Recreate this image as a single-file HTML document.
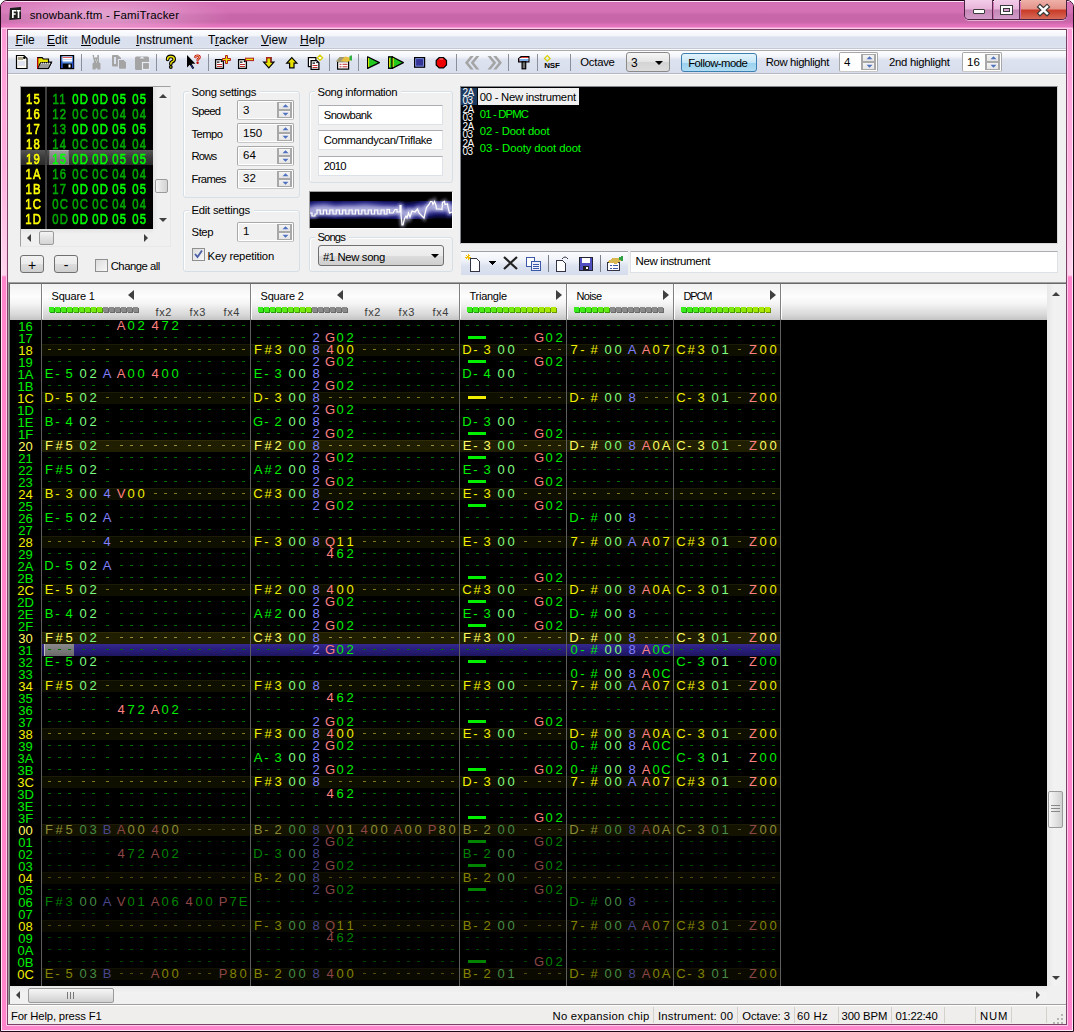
<!DOCTYPE html><html><head><meta charset="utf-8"><title>FamiTracker</title><style>
*{margin:0;padding:0;box-sizing:border-box}
html,body{width:1074px;height:1032px;overflow:hidden;background:#fff}
body{position:relative;font-family:"Liberation Sans",sans-serif;font-size:12px;color:#000}
.a{position:absolute}
.t{position:absolute;white-space:nowrap}
u{text-decoration:underline;text-underline-offset:1px}
.pc{position:absolute;width:10px;height:12px;text-align:center;font-size:13px;line-height:12px}
.rn{position:absolute;left:10px;width:31px;height:12px;font-size:13px;line-height:12px;text-align:center}
.fl{font-size:14.5px;line-height:16px;-webkit-text-stroke:.6px currentColor;letter-spacing:1.5px;padding-left:1.5px;transform:scaleX(.78)}
</style></head><body><div class="a" style="left:0;top:0;width:1074px;height:1032px;background:#ff88cc;border:1px solid #200818;border-radius:7px 7px 0 0"></div><div class="a" style="left:1px;top:1px;width:1072px;height:28px;border-radius:6px 6px 0 0;background:linear-gradient(to bottom,#ffe0f4 0px,#ffe0f4 1px,#d464b2 1px,#d672b6 2px,#d470b4 11px,#c866aa 14px,#c866a8 21px,#e272bc 24px,#e474bc 26px,#ffc8e8 27px,#ffc8e8 28px)"></div><div class="a" style="left:1px;top:2px;width:260px;height:25px;background:radial-gradient(ellipse 130px 22px at 100px 13px,rgba(255,235,250,.45),rgba(255,235,250,0))"></div><div class="a" style="left:2px;top:29px;width:4px;height:997px;background:linear-gradient(#ff9ad6 0px,#ffb0de 140px,#ffd6ee 246px,#ff84ca 248px,#ff84ca 100%)"></div><div class="a" style="left:1068px;top:29px;width:4px;height:997px;background:linear-gradient(#ff9ad6 0px,#ffb0de 140px,#ffd6ee 246px,#ff84ca 248px,#ff84ca 100%)"></div><div class="a" style="left:1px;top:29px;width:1px;height:1002px;background:#ffe8f8"></div><div class="a" style="left:6px;top:29px;width:1px;height:996px;background:#ffc8e8"></div><div class="a" style="left:1072px;top:29px;width:1px;height:1002px;background:#ffe8f8"></div><div class="a" style="left:1067px;top:29px;width:1px;height:996px;background:#ffc8e8"></div><div class="a" style="left:1px;top:1030px;width:1072px;height:1px;background:#ffe8f8"></div><div class="a" style="left:6px;top:1025px;width:1062px;height:1px;background:#ffc8e8"></div><div class="a" style="left:7px;top:29px;width:1060px;height:996px;border:1px solid #7a4068"></div><svg class="a" style="left:8px;top:5px" width="16" height="18"><path d="M2 3l11-1v12l-11 1z" fill="#1e1e1e"/><path d="M1 15l1-12v12z" fill="#444"/><path d="M4 5h4v1.6h-2.3v1.6h2v1.5h-2v3.3h-1.7z" fill="#fff"/><path d="M8.5 5h4v1.6h-1.2v6.4h-1.6v-6.4h-1.2z" fill="#fff"/></svg><div class="t" style="left:29.70px;top:6.92px;font-size:11.5px;line-height:16px;letter-spacing:0.160px">snowbank.ftm - FamiTracker</div><div class="a" style="left:964px;top:0px;width:103px;height:20px;border:1px solid #4a2040;border-top:none;border-radius:0 0 5px 5px;overflow:hidden;box-shadow:0 1px 0 rgba(255,255,255,.5)"><div class="a" style="left:0;top:0;width:28px;height:19px;background:linear-gradient(#f2cce8,#e8b4da 48%,#c486b6 52%,#d29cc8);border-right:1px solid #5a2c50"></div><div class="a" style="left:29px;top:0;width:26px;height:19px;background:linear-gradient(#f2cce8,#e8b4da 48%,#c486b6 52%,#d29cc8);border-right:1px solid #5a2c50"></div><div class="a" style="left:56px;top:0;width:46px;height:19px;background:linear-gradient(#eeb0a8,#e4948a 45%,#c83c28 55%,#d86a58)"></div><div class="a" style="left:8px;top:9px;width:12px;height:5px;background:#fff;border:1px solid #3a3a3a;border-radius:1px"></div><div class="a" style="left:35px;top:5px;width:13px;height:10px;border:1px solid #3a3a3a;background:#fff"></div><div class="a" style="left:38px;top:8px;width:7px;height:4px;border:1px solid #3a3a3a;background:#d8a0cc"></div></div><svg class="a" style="left:1036px;top:3px" width="16" height="16"><path d="M4 3.8l7 6.6M11 3.8l-7 6.6" stroke="#3a3a3a" stroke-width="4.8" stroke-linecap="square"/><path d="M4 3.8l7 6.6M11 3.8l-7 6.6" stroke="#fff" stroke-width="2.4" stroke-linecap="square"/></svg><div class="a" style="left:8px;top:30px;width:1058px;height:994px;background:#f0f0f0"></div><div class="a" style="left:8px;top:30px;width:1058px;height:18px;background:linear-gradient(#fdfdfe,#f4f6fa 30%,#dae0ee 40%,#dae0ee 85%,#dfe4f0)"></div><div class="a" style="left:8px;top:48px;width:1058px;height:1px;background:#c4c8d4"></div><div class="a" style="left:8px;top:49px;width:1058px;height:1px;background:#fbfbfb"></div><div class="a" style="left:8px;top:50px;width:1058px;height:1px;background:#a8aab0"></div><div class="t" style="left:15.40px;top:31.94px;font-size:12px;line-height:16px"><u>F</u>ile</div><div class="t" style="left:47.00px;top:31.94px;font-size:12px;line-height:16px"><u>E</u>dit</div><div class="t" style="left:81.00px;top:31.94px;font-size:12px;line-height:16px"><u>M</u>odule</div><div class="t" style="left:136.00px;top:31.94px;font-size:12px;line-height:16px"><u>I</u>nstrument</div><div class="t" style="left:208.00px;top:31.94px;font-size:12px;line-height:16px">T<u>r</u>acker</div><div class="t" style="left:261.00px;top:31.94px;font-size:12px;line-height:16px"><u>V</u>iew</div><div class="t" style="left:300.00px;top:31.94px;font-size:12px;line-height:16px"><u>H</u>elp</div><div class="a" style="left:8px;top:51px;width:1058px;height:22px;background:linear-gradient(#fdfdfe,#f2f4f9 25%,#dde2ef 40%,#d8deec 100%)"></div><div class="a" style="left:8px;top:73px;width:1058px;height:1px;background:#b4b8c0"></div><div class="a" style="left:8px;top:74px;width:1058px;height:1px;background:#fcfcfc"></div><svg class="a" style="left:0;top:0" width="1074" height="80"><path d="M16.5 55.5h7.5l3 3v10h-10.5z" fill="#fbfaf0" stroke="#000" stroke-width="1.2"/><rect x="18" y="57" width="5" height="3" fill="#a8a088"/><rect x="18" y="61" width="7" height="5" fill="#e0e2f0"/><circle cx="24.3" cy="57.7" r="1.3" fill="#000"/><path d="M37.6 57.6h4.5l1.2 1.4h5.2v3h3l-3.2 6.4h-10.7z" fill="#e8e400" stroke="#000" stroke-width="1.2"/><path d="M40.5 62.6h11l-3.3 6h-10.6z" fill="#9a9a9a" stroke="#000" stroke-width="1"/><path d="M41 63.2h9.5" stroke="#fff" stroke-width="1" stroke-dasharray="1 1"/><path d="M37.6 57.6v11" stroke="#c00000" stroke-width="1.2"/><rect x="60.6" y="55.6" width="13" height="13" fill="#5a90e0" stroke="#000" stroke-width="1.2"/><rect x="62.5" y="56.5" width="9.5" height="5" fill="#fff"/><rect x="62.5" y="57" width="9.5" height="1" fill="#e06060"/><rect x="62.5" y="59" width="9.5" height="1" fill="#c8d0f0"/><rect x="62.5" y="63.5" width="9.5" height="4.5" fill="#000"/><rect x="68.5" y="64.5" width="2" height="3" fill="#fff"/><rect x="61.2" y="61.5" width="1.2" height="6.5" fill="#2040c0"/><rect x="72.2" y="61.5" width="1.2" height="6.5" fill="#2040c0"/><rect x="81" y="54" width="1" height="17" fill="#8a8f9a"/><rect x="156" y="54" width="1" height="17" fill="#8a8f9a"/><rect x="208" y="54" width="1" height="17" fill="#8a8f9a"/><rect x="329" y="54" width="1" height="17" fill="#8a8f9a"/><rect x="358" y="54" width="1" height="17" fill="#8a8f9a"/><rect x="456" y="54" width="1" height="17" fill="#8a8f9a"/><rect x="508" y="54" width="1" height="17" fill="#8a8f9a"/><rect x="537" y="54" width="1" height="17" fill="#8a8f9a"/><rect x="570" y="54" width="1" height="17" fill="#8a8f9a"/><path d="M92.5 55h1.6v2.5h3.2v-2.5h1.6v7l1.6 1.6v5.9h-3.2v-1.2h-1.6v1.2h-3.2v-5.9l1.6-1.6z" fill="#a4a4a4"/><rect x="95" y="59.5" width="1" height="1" fill="#e8e8e8"/><rect x="97" y="59.5" width="1" height="1" fill="#e8e8e8"/><rect x="96" y="61.5" width="1" height="1" fill="#e8e8e8"/><path d="M112.5 55.5h5.5l2.5 2.5v8h-8z" fill="#a4a4a4" stroke="#a4a4a4"/><rect x="114" y="57" width="2" height="7" fill="#dde2ee"/><path d="M118.5 59.5h5.5l2.5 2.5v7h-8z" fill="#a4a4a4" stroke="#dde2ee" stroke-width="1.2"/><path d="M119.5 60.5h4v2h2v5.5h-6z" fill="#a4a4a4" stroke="#a4a4a4"/><rect x="135" y="56.5" width="14" height="13.5" rx="1.5" fill="#a4a4a4"/><path d="M139.5 58.5l2.5-2.2 2.5 2.2z" fill="#e8ecf4"/><rect x="142.5" y="62.5" width="7" height="7" fill="#a4a4a4" stroke="#e8ecf4" stroke-width="1.2"/><path d="M167.6 59.4q0-3 3.2-3 3.4 0 3.4 2.9 0 1.8-2.6 2.8-0.8 0.4-0.8 2" fill="none" stroke="#000" stroke-width="3.6" stroke-linecap="round"/><circle cx="170.8" cy="67" r="1.9" fill="#000"/><path d="M167.6 59.4q0-3 3.2-3 3.4 0 3.4 2.9 0 1.8-2.6 2.8-0.8 0.4-0.8 2" fill="none" stroke="#f0e800" stroke-width="1.5" stroke-linecap="round"/><circle cx="170.8" cy="67" r=".8" fill="#f0e800"/><path d="M187 55v12.5l2.8-2.8 2.6 4.4 1.8-1-2.6-4.3h3.8z" fill="#000"/><path d="M191 65l2.2 3.6" stroke="#2030a0" stroke-width="1"/><path d="M195.4 57.2q0-1.6 2.1-1.6 2.1 0 2.1 1.7 0 1.1-1.4 1.6-0.6 0.3-0.6 1.3" fill="none" stroke="#c00000" stroke-width="2.3" stroke-linecap="round"/><circle cx="197.6" cy="62.8" r="1.2" fill="#c00000"/><path d="M195.4 57.2q0-1.6 2.1-1.6 2.1 0 2.1 1.7 0 1.1-1.4 1.6-0.6 0.3-0.6 1.3" fill="none" stroke="#f8f0a0" stroke-width=".8" stroke-linecap="round"/><path d="M215.6 59.6h5.6l2.2 2.2v6.6h-7.8z" fill="#fff" stroke="#000" stroke-width="1.3"/><circle cx="221.5" cy="61.5" r=".8" fill="#000"/><rect x="217" y="61.5" width="2.5" height="1.2" fill="#000"/><rect x="217" y="64" width="5" height="1" fill="#c03030"/><rect x="217" y="66" width="5" height="1" fill="#c03030"/><path d="M225.5 55.5h2v3h3v2h-3v3h-2v-3h-3v-2h3z" fill="#e8e000" stroke="#b02020" stroke-width="1"/><path d="M238.6 59.6h5.6l2.2 2.2v6.6h-7.8z" fill="#fff" stroke="#000" stroke-width="1.3"/><circle cx="244.5" cy="61.5" r=".8" fill="#000"/><rect x="240" y="61.5" width="2.5" height="1.2" fill="#000"/><rect x="240" y="64" width="5" height="1" fill="#c03030"/><rect x="240" y="66" width="5" height="1" fill="#c03030"/><rect x="245.5" y="58.2" width="8" height="2.4" fill="#e8e000" stroke="#b02020" stroke-width="1"/><path d="M266.6 57.6h4.4v4.6h2.9l-5.1 5.6-5.1-5.6h2.9z" fill="#e8e000" stroke="#000" stroke-width="1.2"/><path d="M266.6 62.2v-4.6h4.4v4.6" fill="none" stroke="#b02020" stroke-width="1.2"/><path d="M289.6 67.8h4.4v-4.6h2.9l-5.1-5.6-5.1 5.6h2.9z" fill="#e8e000" stroke="#000" stroke-width="1.2"/><rect x="308.4" y="57.6" width="7.5" height="9" fill="#fff" stroke="#000" stroke-width="1.2"/><path d="M311.1 60.6h5.6l2.2 2.2v6.6h-7.8z" fill="#fff" stroke="#000" stroke-width="1.3"/><circle cx="317.0" cy="62.5" r=".8" fill="#000"/><rect x="312.5" y="62.5" width="2.5" height="1.2" fill="#000"/><rect x="312.5" y="65" width="5" height="1" fill="#c03030"/><rect x="312.5" y="67" width="5" height="1" fill="#c03030"/><path d="M320 55.2l2.6 2.6-2.6 2.6-2.6-2.6z" fill="#fff" stroke="#d8d000" stroke-width="1.3"/><rect x="337.6" y="61.6" width="11" height="7.5" fill="#fff" stroke="#000" stroke-width="1.2"/><rect x="339.5" y="63.8" width="2" height="1" fill="#c03030"/><rect x="342.5" y="63.8" width="5" height="1" fill="#c03030"/><rect x="339.5" y="66.3" width="2" height="1" fill="#c03030"/><rect x="342.5" y="66.3" width="5" height="1" fill="#c03030"/><path d="M336.5 60.5l3-3.5h7l3 3-3 2h-10z" fill="#a09870"/><path d="M341 61l4-4.5 5 1 1.5 2.5-4 2z" fill="#e8c040"/><path d="M349.5 56l2.5-.8v5.5l-2.5-.6z" fill="#30b040"/><path d="M367.6 56.8v11.6l11.8-5.8z" fill="#20c820" stroke="#000" stroke-width="1.2" stroke-linejoin="round"/><path d="M368.6 58v9" stroke="#e8e800" stroke-width="1"/><rect x="388.6" y="56.8" width="3.6" height="11.6" fill="#20c820" stroke="#000" stroke-width="1.2"/><path d="M392.2 56.8v11.6l11.2-5.8z" fill="#20c820" stroke="#000" stroke-width="1.2" stroke-linejoin="round"/><path d="M389.6 58v9M393.2 58v9" stroke="#e8e800" stroke-width="1"/><rect x="414.6" y="57.6" width="10" height="9.6" fill="#343498" stroke="#000" stroke-width="1.2"/><rect x="415.7" y="58.7" width="7.8" height="7.4" fill="none" stroke="#8aa0e0" stroke-width=".8"/><path d="M439.2 57.6h4.3l3 3v4.3l-3 3h-4.3l-3-3v-4.3z" fill="#ee0000" stroke="#000" stroke-width="1.2"/><path d="M439.5 59h3.5" stroke="#ff9090" stroke-width="1"/><path d="M470.5 56l-5.5 6.7 5.5 6.7h3.2l-5.5-6.7 5.5-6.7zM476.2 56l-5.5 6.7 5.5 6.7h3.2l-5.5-6.7 5.5-6.7z" fill="#a4a4a4"/><path d="M487.5 56l5.5 6.7-5.5 6.7h3.2l5.5-6.7-5.5-6.7zM493.2 56l5.5 6.7-5.5 6.7h3.2l5.5-6.7-5.5-6.7z" fill="#a4a4a4"/><path d="M518.6 58.8l2.5-2.3h7.8v5.3h-10.3z" fill="#e04040" stroke="#000" stroke-width="1.2"/><rect x="519.5" y="59" width="9" height="2.2" fill="#80b0e8"/><rect x="519.5" y="58" width="9" height="1" fill="#fff"/><rect x="522.1" y="61.8" width="3.6" height="7" fill="#707070" stroke="#000" stroke-width="1.2"/><path d="M547.3 55.6l2.8 2.8-2.8 2.8-2.8-2.8z" fill="none" stroke="#d8d000" stroke-width="1.3"/><text x="544.3" y="67.6" font-family="Liberation Sans" font-weight="bold" font-size="8" fill="#000" letter-spacing="-0.2">NSF</text></svg><div class="t" style="left:580.30px;top:55.18px;font-size:11.3px;line-height:15px;letter-spacing:-0.244px">Octave</div><div class="a" style="left:626px;top:52px;width:44px;height:20px;border:1px solid #8a8a8a;border-radius:3px;background:linear-gradient(#f6f6f6,#e4e4e4 50%,#d4d4d4 51%,#dcdcdc)"></div><div class="t" style="left:631.00px;top:54.84px;font-size:12px;line-height:16px">3</div><div class="a" style="left:655px;top:61px;width:0;height:0;border-left:4px solid transparent;border-right:4px solid transparent;border-top:4px solid #000"></div><div class="a" style="left:681px;top:53px;width:76px;height:19px;border:1px solid #3c7fb1;border-radius:3px;background:linear-gradient(#e5f4fc,#c4e5f6 50%,#98d1ef 51%,#b1dcf3)"></div><div class="t" style="left:688.20px;top:55.78px;font-size:11.3px;line-height:15px;letter-spacing:-0.499px">Follow-mode</div><div class="t" style="left:765.70px;top:54.78px;font-size:11.3px;line-height:15px;letter-spacing:-0.346px">Row highlight</div><div class="a" style="left:839px;top:52px;width:39px;height:20px;background:#fff;border:1px solid #a8a8a8;border-bottom-color:#c8c8c8;border-radius:2px;box-shadow:inset 1px 1px 0 #fff,inset -1px -1px 0 #fff"></div><div class="a" style="left:861px;top:54px;width:15px;height:16px;border:2px solid #a8a8a8;border-top-width:1px;border-bottom-width:1px;background:#a8a8a8"></div><div class="a" style="left:863px;top:55px;width:11px;height:6px;background:linear-gradient(#f4f4f4,#e4e4e4)"></div><div class="a" style="left:863px;top:63px;width:11px;height:6px;background:linear-gradient(#f4f4f4,#e4e4e4)"></div><svg class="a" style="left:861px;top:52px" width="17" height="20"><path d="M5.5 7.2l3-3 3 3z" fill="#5070c0"/><path d="M5.5 12.8l3 3 3-3z" fill="#5070c0"/></svg><div class="t" style="left:844.00px;top:54.42px;font-size:11.5px;line-height:16px">4</div><div class="t" style="left:889.00px;top:54.78px;font-size:11.3px;line-height:15px;letter-spacing:-0.273px">2nd highlight</div><div class="a" style="left:962px;top:52px;width:40px;height:20px;background:#fff;border:1px solid #a8a8a8;border-bottom-color:#c8c8c8;border-radius:2px;box-shadow:inset 1px 1px 0 #fff,inset -1px -1px 0 #fff"></div><div class="a" style="left:985px;top:54px;width:15px;height:16px;border:2px solid #a8a8a8;border-top-width:1px;border-bottom-width:1px;background:#a8a8a8"></div><div class="a" style="left:987px;top:55px;width:11px;height:6px;background:linear-gradient(#f4f4f4,#e4e4e4)"></div><div class="a" style="left:987px;top:63px;width:11px;height:6px;background:linear-gradient(#f4f4f4,#e4e4e4)"></div><svg class="a" style="left:985px;top:52px" width="17" height="20"><path d="M5.5 7.2l3-3 3 3z" fill="#5070c0"/><path d="M5.5 12.8l3 3 3-3z" fill="#5070c0"/></svg><div class="t" style="left:967.00px;top:54.42px;font-size:11.5px;line-height:16px">16</div><div class="a" style="left:20px;top:86px;width:151px;height:161px;border:1px solid #a0a0a0;border-right-color:#e8e8e8;border-bottom-color:#e8e8e8;background:#f0f0f0"></div><div class="a" style="left:21px;top:87px;width:132px;height:142px;background:#000;overflow:hidden"><div class="a" style="left:0;top:63px;width:132px;height:15px;background:linear-gradient(#555,#3a3a3a 50%,#2a2a2a)"></div><div class="a" style="left:24px;top:0;width:2px;height:142px;background:#404040"></div><div class="a" style="left:28px;top:63px;width:20px;height:15px;background:linear-gradient(#9a9a9a,#6a6a6a);border:1px solid #7a7a7a;border-top-color:#b0b0b0"></div><div class="t fl" style="left:0;top:4px;width:24px;text-align:center;color:#ffff00">15</div><div class="t fl" style="left:28px;top:4px;width:20px;text-align:center;color:#00a800">11</div><div class="t fl" style="left:48px;top:4px;width:20px;text-align:center;color:#00ff00">0D</div><div class="t fl" style="left:68px;top:4px;width:20px;text-align:center;color:#00ff00">0D</div><div class="t fl" style="left:88px;top:4px;width:20px;text-align:center;color:#00ff00">05</div><div class="t fl" style="left:108px;top:4px;width:20px;text-align:center;color:#00ff00">05</div><div class="t fl" style="left:0;top:19px;width:24px;text-align:center;color:#ffff00">16</div><div class="t fl" style="left:28px;top:19px;width:20px;text-align:center;color:#00a800">12</div><div class="t fl" style="left:48px;top:19px;width:20px;text-align:center;color:#00a800">0C</div><div class="t fl" style="left:68px;top:19px;width:20px;text-align:center;color:#00a800">0C</div><div class="t fl" style="left:88px;top:19px;width:20px;text-align:center;color:#00a800">04</div><div class="t fl" style="left:108px;top:19px;width:20px;text-align:center;color:#00a800">04</div><div class="t fl" style="left:0;top:34px;width:24px;text-align:center;color:#ffff00">17</div><div class="t fl" style="left:28px;top:34px;width:20px;text-align:center;color:#00a800">13</div><div class="t fl" style="left:48px;top:34px;width:20px;text-align:center;color:#00ff00">0D</div><div class="t fl" style="left:68px;top:34px;width:20px;text-align:center;color:#00ff00">0D</div><div class="t fl" style="left:88px;top:34px;width:20px;text-align:center;color:#00ff00">05</div><div class="t fl" style="left:108px;top:34px;width:20px;text-align:center;color:#00ff00">05</div><div class="t fl" style="left:0;top:49px;width:24px;text-align:center;color:#ffff00">18</div><div class="t fl" style="left:28px;top:49px;width:20px;text-align:center;color:#00a800">14</div><div class="t fl" style="left:48px;top:49px;width:20px;text-align:center;color:#00a800">0C</div><div class="t fl" style="left:68px;top:49px;width:20px;text-align:center;color:#00a800">0C</div><div class="t fl" style="left:88px;top:49px;width:20px;text-align:center;color:#00a800">04</div><div class="t fl" style="left:108px;top:49px;width:20px;text-align:center;color:#00a800">04</div><div class="t fl" style="left:0;top:64px;width:24px;text-align:center;color:#ffff00">19</div><div class="t fl" style="left:28px;top:64px;width:20px;text-align:center;color:#00ff00">15</div><div class="t fl" style="left:48px;top:64px;width:20px;text-align:center;color:#00ff00">0D</div><div class="t fl" style="left:68px;top:64px;width:20px;text-align:center;color:#00ff00">0D</div><div class="t fl" style="left:88px;top:64px;width:20px;text-align:center;color:#00ff00">05</div><div class="t fl" style="left:108px;top:64px;width:20px;text-align:center;color:#00ff00">05</div><div class="t fl" style="left:0;top:79px;width:24px;text-align:center;color:#ffff00">1A</div><div class="t fl" style="left:28px;top:79px;width:20px;text-align:center;color:#00a800">16</div><div class="t fl" style="left:48px;top:79px;width:20px;text-align:center;color:#00a800">0C</div><div class="t fl" style="left:68px;top:79px;width:20px;text-align:center;color:#00a800">0C</div><div class="t fl" style="left:88px;top:79px;width:20px;text-align:center;color:#00a800">04</div><div class="t fl" style="left:108px;top:79px;width:20px;text-align:center;color:#00a800">04</div><div class="t fl" style="left:0;top:94px;width:24px;text-align:center;color:#ffff00">1B</div><div class="t fl" style="left:28px;top:94px;width:20px;text-align:center;color:#00a800">17</div><div class="t fl" style="left:48px;top:94px;width:20px;text-align:center;color:#00ff00">0D</div><div class="t fl" style="left:68px;top:94px;width:20px;text-align:center;color:#00ff00">0D</div><div class="t fl" style="left:88px;top:94px;width:20px;text-align:center;color:#00ff00">05</div><div class="t fl" style="left:108px;top:94px;width:20px;text-align:center;color:#00ff00">05</div><div class="t fl" style="left:0;top:109px;width:24px;text-align:center;color:#ffff00">1C</div><div class="t fl" style="left:28px;top:109px;width:20px;text-align:center;color:#00a800">0C</div><div class="t fl" style="left:48px;top:109px;width:20px;text-align:center;color:#00a800">0C</div><div class="t fl" style="left:68px;top:109px;width:20px;text-align:center;color:#00a800">0C</div><div class="t fl" style="left:88px;top:109px;width:20px;text-align:center;color:#00a800">04</div><div class="t fl" style="left:108px;top:109px;width:20px;text-align:center;color:#00a800">04</div><div class="t fl" style="left:0;top:124px;width:24px;text-align:center;color:#ffff00">1D</div><div class="t fl" style="left:28px;top:124px;width:20px;text-align:center;color:#00a800">0D</div><div class="t fl" style="left:48px;top:124px;width:20px;text-align:center;color:#00ff00">0D</div><div class="t fl" style="left:68px;top:124px;width:20px;text-align:center;color:#00ff00">0D</div><div class="t fl" style="left:88px;top:124px;width:20px;text-align:center;color:#00ff00">05</div><div class="t fl" style="left:108px;top:124px;width:20px;text-align:center;color:#00ff00">05</div></div><div class="a" style="left:153px;top:87px;width:17px;height:142px;background:linear-gradient(to right,#e4e4e4,#f0f0f0 30%,#f0f0f0)"></div><div class="a" style="left:159px;top:94px;border-left:4px solid transparent;border-right:4px solid transparent;border-bottom:4px solid #404040;width:0;height:0"></div><div class="a" style="left:159px;top:218px;border-left:4px solid transparent;border-right:4px solid transparent;border-top:4px solid #404040;width:0;height:0"></div><div class="a" style="left:155px;top:179px;width:13px;height:14px;border:1px solid #9a9a9a;border-radius:2px;background:linear-gradient(to right,#f4f4f4,#e2e2e2 50%,#d4d4d4)"></div><div class="a" style="left:21px;top:229px;width:132px;height:17px;background:linear-gradient(#e4e4e4,#f0f0f0 30%,#f0f0f0)"></div><div class="a" style="left:27px;top:234px;border-top:4px solid transparent;border-bottom:4px solid transparent;border-right:4px solid #404040;width:0;height:0"></div><div class="a" style="left:144px;top:234px;border-top:4px solid transparent;border-bottom:4px solid transparent;border-left:4px solid #404040;width:0;height:0"></div><div class="a" style="left:39px;top:231px;width:15px;height:14px;border:1px solid #9a9a9a;border-radius:2px;background:linear-gradient(#f4f4f4,#e2e2e2 50%,#d4d4d4)"></div><div class="a" style="left:20px;top:255px;width:24px;height:18px;border:1px solid #707070;border-radius:3px;background:linear-gradient(#f2f2f2,#ebebeb 50%,#dddddd 51%,#cfcfcf)"></div><div class="t" style="left:20px;top:257px;width:24px;text-align:center;font-size:14px">+</div><div class="a" style="left:54px;top:255px;width:24px;height:18px;border:1px solid #707070;border-radius:3px;background:linear-gradient(#f2f2f2,#ebebeb 50%,#dddddd 51%,#cfcfcf)"></div><div class="t" style="left:54px;top:257px;width:24px;text-align:center;font-size:14px">-</div><div class="a" style="left:95px;top:259px;width:13px;height:13px;border:1px solid #8f8f8f;background:linear-gradient(135deg,#dcdcdc,#f8f8f8)"></div><div class="t" style="left:110.70px;top:258.58px;font-size:11.3px;line-height:15px;letter-spacing:-0.490px">Change all</div><div class="a" style="left:183px;top:91px;width:117px;height:107px;border:1px solid #d5dfe5;border-radius:3px;box-shadow:inset 1px 1px 0 #fff"></div><div class="a" style="left:189px;top:89px;width:71px;height:5px;background:#f0f0f0"></div><div class="t" style="left:191.50px;top:84.58px;font-size:11.3px;line-height:15px;letter-spacing:-0.290px">Song settings</div><div class="t" style="left:191.50px;top:104.38px;font-size:11.3px;line-height:15px;letter-spacing:-0.789px">Speed</div><div class="a" style="left:237px;top:100px;width:57px;height:20px;background:#f0f0f0;border:1px solid #a8a8a8;border-bottom-color:#c8c8c8;border-radius:2px;box-shadow:inset 1px 1px 0 #fff,inset -1px -1px 0 #fff"></div><div class="a" style="left:277px;top:102px;width:15px;height:16px;border:2px solid #a8a8a8;border-top-width:1px;border-bottom-width:1px;background:#a8a8a8"></div><div class="a" style="left:279px;top:103px;width:11px;height:6px;background:linear-gradient(#f4f4f4,#e4e4e4)"></div><div class="a" style="left:279px;top:111px;width:11px;height:6px;background:linear-gradient(#f4f4f4,#e4e4e4)"></div><svg class="a" style="left:277px;top:100px" width="17" height="20"><path d="M5.5 7.2l3-3 3 3z" fill="#5070c0"/><path d="M5.5 12.8l3 3 3-3z" fill="#5070c0"/></svg><div class="t" style="left:243.00px;top:102.42px;font-size:11.5px;line-height:16px">3</div><div class="t" style="left:191.50px;top:126.68px;font-size:11.3px;line-height:15px;letter-spacing:-0.600px">Tempo</div><div class="a" style="left:237px;top:123px;width:57px;height:20px;background:#f0f0f0;border:1px solid #a8a8a8;border-bottom-color:#c8c8c8;border-radius:2px;box-shadow:inset 1px 1px 0 #fff,inset -1px -1px 0 #fff"></div><div class="a" style="left:277px;top:125px;width:15px;height:16px;border:2px solid #a8a8a8;border-top-width:1px;border-bottom-width:1px;background:#a8a8a8"></div><div class="a" style="left:279px;top:126px;width:11px;height:6px;background:linear-gradient(#f4f4f4,#e4e4e4)"></div><div class="a" style="left:279px;top:134px;width:11px;height:6px;background:linear-gradient(#f4f4f4,#e4e4e4)"></div><svg class="a" style="left:277px;top:123px" width="17" height="20"><path d="M5.5 7.2l3-3 3 3z" fill="#5070c0"/><path d="M5.5 12.8l3 3 3-3z" fill="#5070c0"/></svg><div class="t" style="left:243.00px;top:124.72px;font-size:11.5px;line-height:16px">150</div><div class="t" style="left:191.50px;top:149.38px;font-size:11.3px;line-height:15px;letter-spacing:-0.850px">Rows</div><div class="a" style="left:237px;top:146px;width:57px;height:20px;background:#f0f0f0;border:1px solid #a8a8a8;border-bottom-color:#c8c8c8;border-radius:2px;box-shadow:inset 1px 1px 0 #fff,inset -1px -1px 0 #fff"></div><div class="a" style="left:277px;top:148px;width:15px;height:16px;border:2px solid #a8a8a8;border-top-width:1px;border-bottom-width:1px;background:#a8a8a8"></div><div class="a" style="left:279px;top:149px;width:11px;height:6px;background:linear-gradient(#f4f4f4,#e4e4e4)"></div><div class="a" style="left:279px;top:157px;width:11px;height:6px;background:linear-gradient(#f4f4f4,#e4e4e4)"></div><svg class="a" style="left:277px;top:146px" width="17" height="20"><path d="M5.5 7.2l3-3 3 3z" fill="#5070c0"/><path d="M5.5 12.8l3 3 3-3z" fill="#5070c0"/></svg><div class="t" style="left:243.00px;top:147.42px;font-size:11.5px;line-height:16px">64</div><div class="t" style="left:191.50px;top:172.18px;font-size:11.3px;line-height:15px;letter-spacing:-0.661px">Frames</div><div class="a" style="left:237px;top:169px;width:57px;height:20px;background:#f0f0f0;border:1px solid #a8a8a8;border-bottom-color:#c8c8c8;border-radius:2px;box-shadow:inset 1px 1px 0 #fff,inset -1px -1px 0 #fff"></div><div class="a" style="left:277px;top:171px;width:15px;height:16px;border:2px solid #a8a8a8;border-top-width:1px;border-bottom-width:1px;background:#a8a8a8"></div><div class="a" style="left:279px;top:172px;width:11px;height:6px;background:linear-gradient(#f4f4f4,#e4e4e4)"></div><div class="a" style="left:279px;top:180px;width:11px;height:6px;background:linear-gradient(#f4f4f4,#e4e4e4)"></div><svg class="a" style="left:277px;top:169px" width="17" height="20"><path d="M5.5 7.2l3-3 3 3z" fill="#5070c0"/><path d="M5.5 12.8l3 3 3-3z" fill="#5070c0"/></svg><div class="t" style="left:243.00px;top:170.22px;font-size:11.5px;line-height:16px">32</div><div class="a" style="left:183px;top:210px;width:117px;height:62px;border:1px solid #d5dfe5;border-radius:3px;box-shadow:inset 1px 1px 0 #fff"></div><div class="a" style="left:189px;top:208px;width:64.7px;height:5px;background:#f0f0f0"></div><div class="t" style="left:191.50px;top:203.28px;font-size:11.3px;line-height:15px;letter-spacing:-0.236px">Edit settings</div><div class="t" style="left:191.50px;top:224.58px;font-size:11.3px;line-height:15px;letter-spacing:-0.407px">Step</div><div class="a" style="left:237px;top:222px;width:57px;height:20px;background:#f0f0f0;border:1px solid #a8a8a8;border-bottom-color:#c8c8c8;border-radius:2px;box-shadow:inset 1px 1px 0 #fff,inset -1px -1px 0 #fff"></div><div class="a" style="left:277px;top:224px;width:15px;height:16px;border:2px solid #a8a8a8;border-top-width:1px;border-bottom-width:1px;background:#a8a8a8"></div><div class="a" style="left:279px;top:225px;width:11px;height:6px;background:linear-gradient(#f4f4f4,#e4e4e4)"></div><div class="a" style="left:279px;top:233px;width:11px;height:6px;background:linear-gradient(#f4f4f4,#e4e4e4)"></div><svg class="a" style="left:277px;top:222px" width="17" height="20"><path d="M5.5 7.2l3-3 3 3z" fill="#5070c0"/><path d="M5.5 12.8l3 3 3-3z" fill="#5070c0"/></svg><div class="t" style="left:243.00px;top:223.42px;font-size:11.5px;line-height:16px">1</div><div class="a" style="left:192px;top:248px;width:13px;height:13px;border:1px solid #8f8f8f;background:linear-gradient(135deg,#dcdcdc,#f8f8f8)"></div><svg class="a" style="left:192px;top:248px" width="13" height="13"><path d="M3 6l2.5 3L10 2.5" stroke="#4a5ea8" stroke-width="1.8" fill="none"/></svg><div class="t" style="left:207.60px;top:248.78px;font-size:11.3px;line-height:15px;letter-spacing:-0.192px">Key repetition</div><div class="a" style="left:309px;top:91px;width:144px;height:92px;border:1px solid #d5dfe5;border-radius:3px;box-shadow:inset 1px 1px 0 #fff"></div><div class="a" style="left:315px;top:89px;width:86px;height:5px;background:#f0f0f0"></div><div class="t" style="left:317.50px;top:84.58px;font-size:11.3px;line-height:15px;letter-spacing:-0.362px">Song information</div><div class="a" style="left:318px;top:105px;width:125px;height:20px;background:#fff;border:1px solid #dde2e8;border-top-color:#abadb3"></div><div class="t" style="left:323.80px;top:108.28px;font-size:11.3px;line-height:15px;letter-spacing:-0.633px">Snowbank</div><div class="a" style="left:318px;top:130px;width:125px;height:20px;background:#fff;border:1px solid #dde2e8;border-top-color:#abadb3"></div><div class="t" style="left:323.80px;top:133.08px;font-size:11.3px;line-height:15px;letter-spacing:-0.377px">Commandycan/Triflake</div><div class="a" style="left:318px;top:156px;width:125px;height:20px;background:#fff;border:1px solid #dde2e8;border-top-color:#abadb3"></div><div class="t" style="left:323.80px;top:159.08px;font-size:11.3px;line-height:15px;letter-spacing:-0.814px">2010</div><div class="a" style="left:309px;top:191px;width:144px;height:38px;background:#000;border:1px solid #a0a0a0;border-right-color:#fff;border-bottom-color:#fff"></div><svg class="a" style="left:0;top:0" width="460" height="232"><defs><filter id="bl" x="-20%" y="-100%" width="140%" height="300%"><feGaussianBlur stdDeviation="2.2"/></filter><filter id="bl2" x="-20%" y="-100%" width="140%" height="300%"><feGaussianBlur stdDeviation="1.6"/></filter><clipPath id="vc"><rect x="310" y="192" width="142" height="36"/></clipPath></defs><g clip-path="url(#vc)"><polyline points="306,212 315,209 325,208 335,210 345,209 355,209 365,208 375,209 385,210 395,210 405,213 415,212 425,209 435,207 445,207 454,209" fill="none" stroke="#181878" stroke-width="19" filter="url(#bl)"/><polyline points="306,212 315,209 325,208 335,210 345,209 355,209 365,208 375,209 385,210 395,210 405,213 415,212 425,209 435,207 445,207 454,209" fill="none" stroke="#7a7ac0" stroke-width="9" filter="url(#bl)"/><polyline points="306,212 315,209 325,208 335,210 345,209 355,209 365,208 375,209 385,210 395,210 405,213 415,212 425,209 435,207 445,207 454,209" fill="none" stroke="#d0d0f0" stroke-width="3" filter="url(#bl)" opacity=".7"/><polyline points="310.0,213 312.0,213 312.0,216 315.0,216 315.0,214 317.0,214 317.0,214 317.0,210 320.2,210 320.2,214 323.4,214 323.4,210 326.6,210 326.6,214 329.8,214 329.8,210 333.0,210 333.0,214 336.2,214 336.2,210 339.4,210 339.4,214 342.6,214 342.6,210 345.8,210 345.8,214 349.0,214 349.0,210 352.2,210 352.2,214 355.4,214 355.4,210 358.6,210 358.6,214 361.8,214 361.8,210 365.0,210 365.0,214 368.2,214 368.2,210 371.4,210 371.4,214 374.6,214 374.6,210 377.8,210 377.8,214 381.0,214 381.0,210 384.2,210 384.2,214 387.0,214 387.0,209.5 389.5,209.5 389.5,213 393.0,213 395.0,209.5 397.0,209.5 397.0,212 400.0,212 400.0,205.5 401.0,205.5 401.0,215 402.0,225 403.0,225 404.0,220.5 405.0,217.5 406.0,216 407.0,218 408.5,213 410.0,217 412.0,211 415.0,212 417.5,209 419.0,213 421.5,215.5 424.0,218 425.0,213.5 426.5,207.5 429.0,204.5 430.5,201.5 432.0,201.5 433.0,204.5 434.5,201.5 436.0,205.5 436.5,209 440.0,209 442.0,209.5 442.5,202.5 444.5,201.5 445.0,204.5 447.5,204 448.0,207.5 449.5,213 452.0,212" fill="none" stroke="#c8c8ec" stroke-width="4" filter="url(#bl2)" opacity=".6"/><polyline points="310.0,213 312.0,213 312.0,216 315.0,216 315.0,214 317.0,214 317.0,214 317.0,210 320.2,210 320.2,214 323.4,214 323.4,210 326.6,210 326.6,214 329.8,214 329.8,210 333.0,210 333.0,214 336.2,214 336.2,210 339.4,210 339.4,214 342.6,214 342.6,210 345.8,210 345.8,214 349.0,214 349.0,210 352.2,210 352.2,214 355.4,214 355.4,210 358.6,210 358.6,214 361.8,214 361.8,210 365.0,210 365.0,214 368.2,214 368.2,210 371.4,210 371.4,214 374.6,214 374.6,210 377.8,210 377.8,214 381.0,214 381.0,210 384.2,210 384.2,214 387.0,214 387.0,209.5 389.5,209.5 389.5,213 393.0,213 395.0,209.5 397.0,209.5 397.0,212 400.0,212 400.0,205.5 401.0,205.5 401.0,215 402.0,225 403.0,225 404.0,220.5 405.0,217.5 406.0,216 407.0,218 408.5,213 410.0,217 412.0,211 415.0,212 417.5,209 419.0,213 421.5,215.5 424.0,218 425.0,213.5 426.5,207.5 429.0,204.5 430.5,201.5 432.0,201.5 433.0,204.5 434.5,201.5 436.0,205.5 436.5,209 440.0,209 442.0,209.5 442.5,202.5 444.5,201.5 445.0,204.5 447.5,204 448.0,207.5 449.5,213 452.0,212" fill="none" stroke="#fff" stroke-width="1.2"/></g></svg><div class="a" style="left:309px;top:237px;width:144px;height:35px;border:1px solid #d5dfe5;border-radius:3px;box-shadow:inset 1px 1px 0 #fff"></div><div class="a" style="left:315px;top:235px;width:34.3px;height:5px;background:#f0f0f0"></div><div class="t" style="left:317.50px;top:230.38px;font-size:11.3px;line-height:15px;letter-spacing:-0.934px">Songs</div><div class="a" style="left:318px;top:245px;width:126px;height:21px;border:1px solid #707070;border-radius:3px;background:linear-gradient(#f2f2f2,#ebebeb 50%,#dddddd 51%,#cfcfcf)"></div><div class="t" style="left:322.90px;top:249.78px;font-size:11.3px;line-height:15px;letter-spacing:-0.354px">#1 New song</div><div class="a" style="left:431px;top:254px;border-left:4px solid transparent;border-right:4px solid transparent;border-top:4px solid #000;width:0;height:0"></div><div class="a" style="left:460px;top:86px;width:598px;height:158px;background:#000;border:1px solid #828790;border-right-color:#d8d8d8;border-bottom-color:#d8d8d8"></div><div class="a" style="left:478px;top:88px;width:101px;height:17px;background:#f0f0f0"></div><div class="a" style="left:461px;top:88px;width:16px;height:17px;background:#1c3a60"></div><div class="t" style="left:462.5px;top:88.5px;font-size:10px;line-height:8.5px;color:#fff;letter-spacing:-0.5px">2A<br>03</div><div class="t" style="left:479.80px;top:90.48px;font-size:11.3px;line-height:15px;letter-spacing:-0.269px;color:#000">00 - New instrument</div><div class="t" style="left:462.5px;top:105.5px;font-size:10px;line-height:8.5px;color:#fff;letter-spacing:-0.5px">2A<br>03</div><div class="t" style="left:479.80px;top:107.48px;font-size:11.3px;line-height:15px;letter-spacing:-0.835px;color:#00ff00">01 - DPMC</div><div class="t" style="left:462.5px;top:122.5px;font-size:10px;line-height:8.5px;color:#fff;letter-spacing:-0.5px">2A<br>03</div><div class="t" style="left:479.80px;top:124.48px;font-size:11.3px;line-height:15px;letter-spacing:-0.142px;color:#00ff00">02 - Doot doot</div><div class="t" style="left:462.5px;top:139.5px;font-size:10px;line-height:8.5px;color:#fff;letter-spacing:-0.5px">2A<br>03</div><div class="t" style="left:479.80px;top:141.48px;font-size:11.3px;line-height:15px;letter-spacing:-0.062px;color:#00ff00">03 - Dooty doot doot</div><div class="a" style="left:461px;top:251px;width:167px;height:24px;border-top:1px solid #a0a0a8;background:linear-gradient(#fbfcfe,#eef1f8 40%,#dde3f0 60%,#d5dcec)"></div><svg class="a" style="left:0;top:0" width="640" height="280" shape-rendering="crispEdges"><path d="M470.5 258.5h6l3 3v9.5h-9z" fill="#fff" stroke="#334"/><path d="M466 255l4 4M470 255l-4 4M468 254v6M465 257h6" stroke="#f0c000" stroke-width="1"/><path d="M488 261h8l-4 4z" fill="#000"/><path d="M504 257l13 12M517 257l-13 12" stroke="#222" stroke-width="2.2" shape-rendering="auto"/><rect x="526.5" y="257.5" width="8" height="9" fill="#fff" stroke="#3a5aa8"/><rect x="531.5" y="261.5" width="9" height="9" fill="#eef" stroke="#3a5aa8"/><path d="M533 264h6M533 266h6M533 268h6" stroke="#3a5aa8"/><rect x="548" y="255" width="1" height="17" fill="#7a7f8a"/><rect x="600" y="255" width="1" height="17" fill="#7a7f8a"/><path d="M556.5 260.5h6l3 3v8h-9z" fill="#fff" stroke="#334"/><path d="M562 259q3-4 6 0" fill="none" stroke="#334" shape-rendering="auto"/><rect x="579.5" y="257.5" width="13" height="13" fill="#5050c0" stroke="#223"/><rect x="582" y="258" width="8" height="5" fill="#fff"/><rect x="583" y="266" width="6" height="4" fill="#222"/><rect x="586" y="267" width="2" height="2" fill="#fff"/><rect x="607.5" y="262.5" width="12" height="8" fill="#fff" stroke="#334"/><path d="M610 265h2M613 265h5M610 268h2M613 268h5" stroke="#3a5aa8"/><path d="M607 262l6-4h6l2 3-5 3z" fill="#d8b850"/><path d="M619 257l4-1v5l-4-1z" fill="#30a040"/></svg><div class="a" style="left:630px;top:251px;width:428px;height:22px;background:#fff;border:1px solid #dde2e8;border-top-color:#abadb3"></div><div class="t" style="left:635.60px;top:252.82px;font-size:11.5px;line-height:16px;letter-spacing:-0.382px">New instrument</div><div class="a" style="left:8px;top:282px;width:1058px;height:723px;border-top:1px solid #a0a0a0;border-left:1px solid #a0a0a0"></div><div class="a" style="left:9px;top:283px;width:1057px;height:722px;border-top:1px solid #696969;border-left:1px solid #696969"></div><div class="a" style="left:10px;top:284px;width:1037px;height:36px;background:linear-gradient(#f2f2f2 0%,#fdfdfd 35%,#f4f4f4 55%,#d8d8d8 85%,#c4c4c4 100%)"></div><div class="a" style="left:10px;top:320px;width:1037px;height:666px;background:#000;overflow:hidden" id="pat"></div><div class="a" style="left:41px;top:284px;width:1px;height:702px;background:#808080"></div><div class="a" style="left:42px;top:284px;width:1px;height:35px;background:#fff"></div><div class="a" style="left:250px;top:284px;width:1px;height:702px;background:#808080"></div><div class="a" style="left:251px;top:284px;width:1px;height:35px;background:#fff"></div><div class="a" style="left:459px;top:284px;width:1px;height:702px;background:#808080"></div><div class="a" style="left:460px;top:284px;width:1px;height:35px;background:#fff"></div><div class="a" style="left:566px;top:284px;width:1px;height:702px;background:#808080"></div><div class="a" style="left:567px;top:284px;width:1px;height:35px;background:#fff"></div><div class="a" style="left:673px;top:284px;width:1px;height:702px;background:#808080"></div><div class="a" style="left:674px;top:284px;width:1px;height:35px;background:#fff"></div><div class="a" style="left:780px;top:284px;width:1px;height:702px;background:#808080"></div><div class="a" style="left:781px;top:284px;width:1px;height:35px;background:#fff"></div><div class="t" style="left:51.50px;top:289.19px;font-size:11px;line-height:15px;letter-spacing:-0.194px">Square 1</div><div class="a" style="left:128px;top:290px;border-top:5px solid transparent;border-bottom:5px solid transparent;border-right:6px solid #404040;width:0;height:0"></div><div class="t" style="left:155.50px;top:305.19px;font-size:11px;line-height:15px;letter-spacing:0.657px;color:#3c3c3c">fx2</div><div class="t" style="left:189.50px;top:305.19px;font-size:11px;line-height:15px;letter-spacing:0.657px;color:#3c3c3c">fx3</div><div class="t" style="left:223.50px;top:305.19px;font-size:11px;line-height:15px;letter-spacing:0.657px;color:#3c3c3c">fx4</div><div class="a" style="left:49px;top:307px;width:5px;height:5px;background:rgb(56,236,28);box-shadow:1px 1px 0 rgb(33,153,14)"></div><div class="a" style="left:55px;top:307px;width:5px;height:5px;background:rgb(64,235,26);box-shadow:1px 1px 0 rgb(38,152,13)"></div><div class="a" style="left:61px;top:307px;width:5px;height:5px;background:rgb(73,235,24);box-shadow:1px 1px 0 rgb(43,152,12)"></div><div class="a" style="left:67px;top:307px;width:5px;height:5px;background:rgb(81,235,22);box-shadow:1px 1px 0 rgb(48,152,11)"></div><div class="a" style="left:73px;top:307px;width:5px;height:5px;background:rgb(90,234,20);box-shadow:1px 1px 0 rgb(54,152,10)"></div><div class="a" style="left:79px;top:307px;width:5px;height:5px;background:rgb(98,234,18);box-shadow:1px 1px 0 rgb(58,152,9)"></div><div class="a" style="left:85px;top:307px;width:5px;height:5px;background:rgb(107,234,16);box-shadow:1px 1px 0 rgb(64,152,8)"></div><div class="a" style="left:91px;top:307px;width:5px;height:5px;background:rgb(116,234,14);box-shadow:1px 1px 0 rgb(69,152,7)"></div><div class="a" style="left:97px;top:307px;width:5px;height:5px;background:rgb(124,233,12);box-shadow:1px 1px 0 rgb(74,151,6)"></div><div class="a" style="left:103px;top:307px;width:5px;height:5px;background:#8a8a8a;box-shadow:1px 1px 0 #6a6a6a"></div><div class="a" style="left:109px;top:307px;width:5px;height:5px;background:#8a8a8a;box-shadow:1px 1px 0 #6a6a6a"></div><div class="a" style="left:115px;top:307px;width:5px;height:5px;background:#8a8a8a;box-shadow:1px 1px 0 #6a6a6a"></div><div class="a" style="left:121px;top:307px;width:5px;height:5px;background:#8a8a8a;box-shadow:1px 1px 0 #6a6a6a"></div><div class="a" style="left:127px;top:307px;width:5px;height:5px;background:#8a8a8a;box-shadow:1px 1px 0 #6a6a6a"></div><div class="a" style="left:133px;top:307px;width:5px;height:5px;background:#8a8a8a;box-shadow:1px 1px 0 #6a6a6a"></div><div class="t" style="left:260.50px;top:289.19px;font-size:11px;line-height:15px;letter-spacing:-0.194px">Square 2</div><div class="a" style="left:337px;top:290px;border-top:5px solid transparent;border-bottom:5px solid transparent;border-right:6px solid #404040;width:0;height:0"></div><div class="t" style="left:364.50px;top:305.19px;font-size:11px;line-height:15px;letter-spacing:0.657px;color:#3c3c3c">fx2</div><div class="t" style="left:398.50px;top:305.19px;font-size:11px;line-height:15px;letter-spacing:0.657px;color:#3c3c3c">fx3</div><div class="t" style="left:432.50px;top:305.19px;font-size:11px;line-height:15px;letter-spacing:0.657px;color:#3c3c3c">fx4</div><div class="a" style="left:258px;top:307px;width:5px;height:5px;background:rgb(56,236,28);box-shadow:1px 1px 0 rgb(33,153,14)"></div><div class="a" style="left:264px;top:307px;width:5px;height:5px;background:rgb(64,235,26);box-shadow:1px 1px 0 rgb(38,152,13)"></div><div class="a" style="left:270px;top:307px;width:5px;height:5px;background:rgb(73,235,24);box-shadow:1px 1px 0 rgb(43,152,12)"></div><div class="a" style="left:276px;top:307px;width:5px;height:5px;background:rgb(81,235,22);box-shadow:1px 1px 0 rgb(48,152,11)"></div><div class="a" style="left:282px;top:307px;width:5px;height:5px;background:rgb(90,234,20);box-shadow:1px 1px 0 rgb(54,152,10)"></div><div class="a" style="left:288px;top:307px;width:5px;height:5px;background:rgb(98,234,18);box-shadow:1px 1px 0 rgb(58,152,9)"></div><div class="a" style="left:294px;top:307px;width:5px;height:5px;background:rgb(107,234,16);box-shadow:1px 1px 0 rgb(64,152,8)"></div><div class="a" style="left:300px;top:307px;width:5px;height:5px;background:rgb(116,234,14);box-shadow:1px 1px 0 rgb(69,152,7)"></div><div class="a" style="left:306px;top:307px;width:5px;height:5px;background:rgb(124,233,12);box-shadow:1px 1px 0 rgb(74,151,6)"></div><div class="a" style="left:312px;top:307px;width:5px;height:5px;background:#8a8a8a;box-shadow:1px 1px 0 #6a6a6a"></div><div class="a" style="left:318px;top:307px;width:5px;height:5px;background:#8a8a8a;box-shadow:1px 1px 0 #6a6a6a"></div><div class="a" style="left:324px;top:307px;width:5px;height:5px;background:#8a8a8a;box-shadow:1px 1px 0 #6a6a6a"></div><div class="a" style="left:330px;top:307px;width:5px;height:5px;background:#8a8a8a;box-shadow:1px 1px 0 #6a6a6a"></div><div class="a" style="left:336px;top:307px;width:5px;height:5px;background:#8a8a8a;box-shadow:1px 1px 0 #6a6a6a"></div><div class="a" style="left:342px;top:307px;width:5px;height:5px;background:#8a8a8a;box-shadow:1px 1px 0 #6a6a6a"></div><div class="t" style="left:469.50px;top:289.19px;font-size:11px;line-height:15px;letter-spacing:-0.261px">Triangle</div><div class="a" style="left:556px;top:290px;border-top:5px solid transparent;border-bottom:5px solid transparent;border-left:6px solid #404040;width:0;height:0"></div><div class="a" style="left:467px;top:307px;width:5px;height:5px;background:rgb(56,236,28);box-shadow:1px 1px 0 rgb(33,153,14)"></div><div class="a" style="left:473px;top:307px;width:5px;height:5px;background:rgb(64,235,26);box-shadow:1px 1px 0 rgb(38,152,13)"></div><div class="a" style="left:479px;top:307px;width:5px;height:5px;background:rgb(73,235,24);box-shadow:1px 1px 0 rgb(43,152,12)"></div><div class="a" style="left:485px;top:307px;width:5px;height:5px;background:rgb(81,235,22);box-shadow:1px 1px 0 rgb(48,152,11)"></div><div class="a" style="left:491px;top:307px;width:5px;height:5px;background:rgb(90,234,20);box-shadow:1px 1px 0 rgb(54,152,10)"></div><div class="a" style="left:497px;top:307px;width:5px;height:5px;background:rgb(98,234,18);box-shadow:1px 1px 0 rgb(58,152,9)"></div><div class="a" style="left:503px;top:307px;width:5px;height:5px;background:rgb(107,234,16);box-shadow:1px 1px 0 rgb(64,152,8)"></div><div class="a" style="left:509px;top:307px;width:5px;height:5px;background:rgb(116,234,14);box-shadow:1px 1px 0 rgb(69,152,7)"></div><div class="a" style="left:515px;top:307px;width:5px;height:5px;background:rgb(124,233,12);box-shadow:1px 1px 0 rgb(74,151,6)"></div><div class="a" style="left:521px;top:307px;width:5px;height:5px;background:rgb(133,233,10);box-shadow:1px 1px 0 rgb(79,151,5)"></div><div class="a" style="left:527px;top:307px;width:5px;height:5px;background:rgb(141,233,8);box-shadow:1px 1px 0 rgb(84,151,4)"></div><div class="a" style="left:533px;top:307px;width:5px;height:5px;background:rgb(150,232,6);box-shadow:1px 1px 0 rgb(90,150,3)"></div><div class="a" style="left:539px;top:307px;width:5px;height:5px;background:rgb(158,232,4);box-shadow:1px 1px 0 rgb(94,150,2)"></div><div class="a" style="left:545px;top:307px;width:5px;height:5px;background:rgb(167,232,2);box-shadow:1px 1px 0 rgb(100,150,1)"></div><div class="a" style="left:551px;top:307px;width:5px;height:5px;background:rgb(176,232,0);box-shadow:1px 1px 0 rgb(105,150,0)"></div><div class="t" style="left:576.50px;top:289.19px;font-size:11px;line-height:15px;letter-spacing:-0.651px">Noise</div><div class="a" style="left:663px;top:290px;border-top:5px solid transparent;border-bottom:5px solid transparent;border-left:6px solid #404040;width:0;height:0"></div><div class="a" style="left:574px;top:307px;width:5px;height:5px;background:rgb(56,236,28);box-shadow:1px 1px 0 rgb(33,153,14)"></div><div class="a" style="left:580px;top:307px;width:5px;height:5px;background:rgb(64,235,26);box-shadow:1px 1px 0 rgb(38,152,13)"></div><div class="a" style="left:586px;top:307px;width:5px;height:5px;background:rgb(73,235,24);box-shadow:1px 1px 0 rgb(43,152,12)"></div><div class="a" style="left:592px;top:307px;width:5px;height:5px;background:rgb(81,235,22);box-shadow:1px 1px 0 rgb(48,152,11)"></div><div class="a" style="left:598px;top:307px;width:5px;height:5px;background:rgb(90,234,20);box-shadow:1px 1px 0 rgb(54,152,10)"></div><div class="a" style="left:604px;top:307px;width:5px;height:5px;background:rgb(98,234,18);box-shadow:1px 1px 0 rgb(58,152,9)"></div><div class="a" style="left:610px;top:307px;width:5px;height:5px;background:#8a8a8a;box-shadow:1px 1px 0 #6a6a6a"></div><div class="a" style="left:616px;top:307px;width:5px;height:5px;background:#8a8a8a;box-shadow:1px 1px 0 #6a6a6a"></div><div class="a" style="left:622px;top:307px;width:5px;height:5px;background:#8a8a8a;box-shadow:1px 1px 0 #6a6a6a"></div><div class="a" style="left:628px;top:307px;width:5px;height:5px;background:#8a8a8a;box-shadow:1px 1px 0 #6a6a6a"></div><div class="a" style="left:634px;top:307px;width:5px;height:5px;background:#8a8a8a;box-shadow:1px 1px 0 #6a6a6a"></div><div class="a" style="left:640px;top:307px;width:5px;height:5px;background:#8a8a8a;box-shadow:1px 1px 0 #6a6a6a"></div><div class="a" style="left:646px;top:307px;width:5px;height:5px;background:#8a8a8a;box-shadow:1px 1px 0 #6a6a6a"></div><div class="a" style="left:652px;top:307px;width:5px;height:5px;background:#8a8a8a;box-shadow:1px 1px 0 #6a6a6a"></div><div class="a" style="left:658px;top:307px;width:5px;height:5px;background:#8a8a8a;box-shadow:1px 1px 0 #6a6a6a"></div><div class="t" style="left:683.50px;top:289.19px;font-size:11px;line-height:15px;letter-spacing:-1.132px">DPCM</div><div class="a" style="left:770px;top:290px;border-top:5px solid transparent;border-bottom:5px solid transparent;border-left:6px solid #404040;width:0;height:0"></div><div class="a" style="left:681px;top:307px;width:5px;height:5px;background:rgb(56,236,28);box-shadow:1px 1px 0 rgb(33,153,14)"></div><div class="a" style="left:687px;top:307px;width:5px;height:5px;background:rgb(64,235,26);box-shadow:1px 1px 0 rgb(38,152,13)"></div><div class="a" style="left:693px;top:307px;width:5px;height:5px;background:rgb(73,235,24);box-shadow:1px 1px 0 rgb(43,152,12)"></div><div class="a" style="left:699px;top:307px;width:5px;height:5px;background:rgb(81,235,22);box-shadow:1px 1px 0 rgb(48,152,11)"></div><div class="a" style="left:705px;top:307px;width:5px;height:5px;background:rgb(90,234,20);box-shadow:1px 1px 0 rgb(54,152,10)"></div><div class="a" style="left:711px;top:307px;width:5px;height:5px;background:rgb(98,234,18);box-shadow:1px 1px 0 rgb(58,152,9)"></div><div class="a" style="left:717px;top:307px;width:5px;height:5px;background:rgb(107,234,16);box-shadow:1px 1px 0 rgb(64,152,8)"></div><div class="a" style="left:723px;top:307px;width:5px;height:5px;background:rgb(116,234,14);box-shadow:1px 1px 0 rgb(69,152,7)"></div><div class="a" style="left:729px;top:307px;width:5px;height:5px;background:rgb(124,233,12);box-shadow:1px 1px 0 rgb(74,151,6)"></div><div class="a" style="left:735px;top:307px;width:5px;height:5px;background:rgb(133,233,10);box-shadow:1px 1px 0 rgb(79,151,5)"></div><div class="a" style="left:741px;top:307px;width:5px;height:5px;background:rgb(141,233,8);box-shadow:1px 1px 0 rgb(84,151,4)"></div><div class="a" style="left:747px;top:307px;width:5px;height:5px;background:rgb(150,232,6);box-shadow:1px 1px 0 rgb(90,150,3)"></div><div class="a" style="left:753px;top:307px;width:5px;height:5px;background:rgb(158,232,4);box-shadow:1px 1px 0 rgb(94,150,2)"></div><div class="a" style="left:759px;top:307px;width:5px;height:5px;background:rgb(167,232,2);box-shadow:1px 1px 0 rgb(100,150,1)"></div><div class="a" style="left:765px;top:307px;width:5px;height:5px;background:rgb(176,232,0);box-shadow:1px 1px 0 rgb(105,150,0)"></div><div class="rn" style="top:321px;color:#00f000">16</div><div class="a" style="left:48px;top:325px;width:3px;height:1px;background:#006e00"></div><div class="a" style="left:58px;top:325px;width:3px;height:1px;background:#006e00"></div><div class="a" style="left:68px;top:325px;width:3px;height:1px;background:#006e00"></div><div class="a" style="left:82px;top:325px;width:3px;height:1px;background:#006e00"></div><div class="a" style="left:92px;top:325px;width:3px;height:1px;background:#006e00"></div><div class="a" style="left:106px;top:325px;width:3px;height:1px;background:#006e00"></div><div class="pc" style="left:116px;top:320px;color:#ff8080">A</div><div class="pc" style="left:126px;top:320px;color:#00f000">0</div><div class="pc" style="left:136px;top:320px;color:#00f000">2</div><div class="pc" style="left:150px;top:320px;color:#ff8080">4</div><div class="pc" style="left:160px;top:320px;color:#00f000">7</div><div class="pc" style="left:170px;top:320px;color:#00f000">2</div><div class="a" style="left:188px;top:325px;width:3px;height:1px;background:#006e00"></div><div class="a" style="left:198px;top:325px;width:3px;height:1px;background:#006e00"></div><div class="a" style="left:208px;top:325px;width:3px;height:1px;background:#006e00"></div><div class="a" style="left:222px;top:325px;width:3px;height:1px;background:#006e00"></div><div class="a" style="left:232px;top:325px;width:3px;height:1px;background:#006e00"></div><div class="a" style="left:242px;top:325px;width:3px;height:1px;background:#006e00"></div><div class="a" style="left:257px;top:325px;width:3px;height:1px;background:#006e00"></div><div class="a" style="left:267px;top:325px;width:3px;height:1px;background:#006e00"></div><div class="a" style="left:277px;top:325px;width:3px;height:1px;background:#006e00"></div><div class="a" style="left:291px;top:325px;width:3px;height:1px;background:#006e00"></div><div class="a" style="left:301px;top:325px;width:3px;height:1px;background:#006e00"></div><div class="a" style="left:315px;top:325px;width:3px;height:1px;background:#006e00"></div><div class="a" style="left:329px;top:325px;width:3px;height:1px;background:#006e00"></div><div class="a" style="left:339px;top:325px;width:3px;height:1px;background:#006e00"></div><div class="a" style="left:349px;top:325px;width:3px;height:1px;background:#006e00"></div><div class="a" style="left:363px;top:325px;width:3px;height:1px;background:#006e00"></div><div class="a" style="left:373px;top:325px;width:3px;height:1px;background:#006e00"></div><div class="a" style="left:383px;top:325px;width:3px;height:1px;background:#006e00"></div><div class="a" style="left:397px;top:325px;width:3px;height:1px;background:#006e00"></div><div class="a" style="left:407px;top:325px;width:3px;height:1px;background:#006e00"></div><div class="a" style="left:417px;top:325px;width:3px;height:1px;background:#006e00"></div><div class="a" style="left:431px;top:325px;width:3px;height:1px;background:#006e00"></div><div class="a" style="left:441px;top:325px;width:3px;height:1px;background:#006e00"></div><div class="a" style="left:451px;top:325px;width:3px;height:1px;background:#006e00"></div><div class="a" style="left:466px;top:325px;width:3px;height:1px;background:#006e00"></div><div class="a" style="left:476px;top:325px;width:3px;height:1px;background:#006e00"></div><div class="a" style="left:486px;top:325px;width:3px;height:1px;background:#006e00"></div><div class="a" style="left:500px;top:325px;width:3px;height:1px;background:#006e00"></div><div class="a" style="left:510px;top:325px;width:3px;height:1px;background:#006e00"></div><div class="a" style="left:524px;top:325px;width:3px;height:1px;background:#006e00"></div><div class="a" style="left:538px;top:325px;width:3px;height:1px;background:#006e00"></div><div class="a" style="left:548px;top:325px;width:3px;height:1px;background:#006e00"></div><div class="a" style="left:558px;top:325px;width:3px;height:1px;background:#006e00"></div><div class="a" style="left:573px;top:325px;width:3px;height:1px;background:#006e00"></div><div class="a" style="left:583px;top:325px;width:3px;height:1px;background:#006e00"></div><div class="a" style="left:593px;top:325px;width:3px;height:1px;background:#006e00"></div><div class="a" style="left:607px;top:325px;width:3px;height:1px;background:#006e00"></div><div class="a" style="left:617px;top:325px;width:3px;height:1px;background:#006e00"></div><div class="a" style="left:631px;top:325px;width:3px;height:1px;background:#006e00"></div><div class="a" style="left:645px;top:325px;width:3px;height:1px;background:#006e00"></div><div class="a" style="left:655px;top:325px;width:3px;height:1px;background:#006e00"></div><div class="a" style="left:665px;top:325px;width:3px;height:1px;background:#006e00"></div><div class="a" style="left:680px;top:325px;width:3px;height:1px;background:#006e00"></div><div class="a" style="left:690px;top:325px;width:3px;height:1px;background:#006e00"></div><div class="a" style="left:700px;top:325px;width:3px;height:1px;background:#006e00"></div><div class="a" style="left:714px;top:325px;width:3px;height:1px;background:#006e00"></div><div class="a" style="left:724px;top:325px;width:3px;height:1px;background:#006e00"></div><div class="a" style="left:738px;top:325px;width:3px;height:1px;background:#006e00"></div><div class="a" style="left:752px;top:325px;width:3px;height:1px;background:#006e00"></div><div class="a" style="left:762px;top:325px;width:3px;height:1px;background:#006e00"></div><div class="a" style="left:772px;top:325px;width:3px;height:1px;background:#006e00"></div><div class="rn" style="top:333px;color:#00f000">17</div><div class="a" style="left:48px;top:337px;width:3px;height:1px;background:#006e00"></div><div class="a" style="left:58px;top:337px;width:3px;height:1px;background:#006e00"></div><div class="a" style="left:68px;top:337px;width:3px;height:1px;background:#006e00"></div><div class="a" style="left:82px;top:337px;width:3px;height:1px;background:#006e00"></div><div class="a" style="left:92px;top:337px;width:3px;height:1px;background:#006e00"></div><div class="a" style="left:106px;top:337px;width:3px;height:1px;background:#006e00"></div><div class="a" style="left:120px;top:337px;width:3px;height:1px;background:#006e00"></div><div class="a" style="left:130px;top:337px;width:3px;height:1px;background:#006e00"></div><div class="a" style="left:140px;top:337px;width:3px;height:1px;background:#006e00"></div><div class="a" style="left:154px;top:337px;width:3px;height:1px;background:#006e00"></div><div class="a" style="left:164px;top:337px;width:3px;height:1px;background:#006e00"></div><div class="a" style="left:174px;top:337px;width:3px;height:1px;background:#006e00"></div><div class="a" style="left:188px;top:337px;width:3px;height:1px;background:#006e00"></div><div class="a" style="left:198px;top:337px;width:3px;height:1px;background:#006e00"></div><div class="a" style="left:208px;top:337px;width:3px;height:1px;background:#006e00"></div><div class="a" style="left:222px;top:337px;width:3px;height:1px;background:#006e00"></div><div class="a" style="left:232px;top:337px;width:3px;height:1px;background:#006e00"></div><div class="a" style="left:242px;top:337px;width:3px;height:1px;background:#006e00"></div><div class="a" style="left:257px;top:337px;width:3px;height:1px;background:#006e00"></div><div class="a" style="left:267px;top:337px;width:3px;height:1px;background:#006e00"></div><div class="a" style="left:277px;top:337px;width:3px;height:1px;background:#006e00"></div><div class="a" style="left:291px;top:337px;width:3px;height:1px;background:#006e00"></div><div class="a" style="left:301px;top:337px;width:3px;height:1px;background:#006e00"></div><div class="pc" style="left:311px;top:332px;color:#8080ff">2</div><div class="pc" style="left:325px;top:332px;color:#ff8080">G</div><div class="pc" style="left:335px;top:332px;color:#00f000">0</div><div class="pc" style="left:345px;top:332px;color:#00f000">2</div><div class="a" style="left:363px;top:337px;width:3px;height:1px;background:#006e00"></div><div class="a" style="left:373px;top:337px;width:3px;height:1px;background:#006e00"></div><div class="a" style="left:383px;top:337px;width:3px;height:1px;background:#006e00"></div><div class="a" style="left:397px;top:337px;width:3px;height:1px;background:#006e00"></div><div class="a" style="left:407px;top:337px;width:3px;height:1px;background:#006e00"></div><div class="a" style="left:417px;top:337px;width:3px;height:1px;background:#006e00"></div><div class="a" style="left:431px;top:337px;width:3px;height:1px;background:#006e00"></div><div class="a" style="left:441px;top:337px;width:3px;height:1px;background:#006e00"></div><div class="a" style="left:451px;top:337px;width:3px;height:1px;background:#006e00"></div><div class="a" style="left:468px;top:336px;width:18px;height:3px;background:#00f000"></div><div class="a" style="left:500px;top:337px;width:3px;height:1px;background:#006e00"></div><div class="a" style="left:510px;top:337px;width:3px;height:1px;background:#006e00"></div><div class="a" style="left:524px;top:337px;width:3px;height:1px;background:#006e00"></div><div class="pc" style="left:534px;top:332px;color:#ff8080">G</div><div class="pc" style="left:544px;top:332px;color:#00f000">0</div><div class="pc" style="left:554px;top:332px;color:#00f000">2</div><div class="a" style="left:573px;top:337px;width:3px;height:1px;background:#006e00"></div><div class="a" style="left:583px;top:337px;width:3px;height:1px;background:#006e00"></div><div class="a" style="left:593px;top:337px;width:3px;height:1px;background:#006e00"></div><div class="a" style="left:607px;top:337px;width:3px;height:1px;background:#006e00"></div><div class="a" style="left:617px;top:337px;width:3px;height:1px;background:#006e00"></div><div class="a" style="left:631px;top:337px;width:3px;height:1px;background:#006e00"></div><div class="a" style="left:645px;top:337px;width:3px;height:1px;background:#006e00"></div><div class="a" style="left:655px;top:337px;width:3px;height:1px;background:#006e00"></div><div class="a" style="left:665px;top:337px;width:3px;height:1px;background:#006e00"></div><div class="a" style="left:680px;top:337px;width:3px;height:1px;background:#006e00"></div><div class="a" style="left:690px;top:337px;width:3px;height:1px;background:#006e00"></div><div class="a" style="left:700px;top:337px;width:3px;height:1px;background:#006e00"></div><div class="a" style="left:714px;top:337px;width:3px;height:1px;background:#006e00"></div><div class="a" style="left:724px;top:337px;width:3px;height:1px;background:#006e00"></div><div class="a" style="left:738px;top:337px;width:3px;height:1px;background:#006e00"></div><div class="a" style="left:752px;top:337px;width:3px;height:1px;background:#006e00"></div><div class="a" style="left:762px;top:337px;width:3px;height:1px;background:#006e00"></div><div class="a" style="left:772px;top:337px;width:3px;height:1px;background:#006e00"></div><div class="rn" style="top:345px;color:#f0f000">18</div><div class="a" style="left:42px;top:344px;width:738px;height:12px;background:#0f0f00;border-top:1px solid #1c1b06"></div><div class="a" style="left:48px;top:349px;width:3px;height:1px;background:#827a18"></div><div class="a" style="left:58px;top:349px;width:3px;height:1px;background:#827a18"></div><div class="a" style="left:68px;top:349px;width:3px;height:1px;background:#827a18"></div><div class="a" style="left:82px;top:349px;width:3px;height:1px;background:#827a18"></div><div class="a" style="left:92px;top:349px;width:3px;height:1px;background:#827a18"></div><div class="a" style="left:106px;top:349px;width:3px;height:1px;background:#827a18"></div><div class="a" style="left:120px;top:349px;width:3px;height:1px;background:#827a18"></div><div class="a" style="left:130px;top:349px;width:3px;height:1px;background:#827a18"></div><div class="a" style="left:140px;top:349px;width:3px;height:1px;background:#827a18"></div><div class="a" style="left:154px;top:349px;width:3px;height:1px;background:#827a18"></div><div class="a" style="left:164px;top:349px;width:3px;height:1px;background:#827a18"></div><div class="a" style="left:174px;top:349px;width:3px;height:1px;background:#827a18"></div><div class="a" style="left:188px;top:349px;width:3px;height:1px;background:#827a18"></div><div class="a" style="left:198px;top:349px;width:3px;height:1px;background:#827a18"></div><div class="a" style="left:208px;top:349px;width:3px;height:1px;background:#827a18"></div><div class="a" style="left:222px;top:349px;width:3px;height:1px;background:#827a18"></div><div class="a" style="left:232px;top:349px;width:3px;height:1px;background:#827a18"></div><div class="a" style="left:242px;top:349px;width:3px;height:1px;background:#827a18"></div><div class="pc" style="left:253px;top:344px;color:#f0f000">F</div><div class="pc" style="left:263px;top:344px;color:#f0f000">#</div><div class="pc" style="left:273px;top:344px;color:#f0f000">3</div><div class="pc" style="left:287px;top:344px;color:#80ff80">0</div><div class="pc" style="left:297px;top:344px;color:#80ff80">0</div><div class="pc" style="left:311px;top:344px;color:#8080ff">8</div><div class="pc" style="left:325px;top:344px;color:#ff8080">4</div><div class="pc" style="left:335px;top:344px;color:#f0f000">0</div><div class="pc" style="left:345px;top:344px;color:#f0f000">0</div><div class="a" style="left:363px;top:349px;width:3px;height:1px;background:#827a18"></div><div class="a" style="left:373px;top:349px;width:3px;height:1px;background:#827a18"></div><div class="a" style="left:383px;top:349px;width:3px;height:1px;background:#827a18"></div><div class="a" style="left:397px;top:349px;width:3px;height:1px;background:#827a18"></div><div class="a" style="left:407px;top:349px;width:3px;height:1px;background:#827a18"></div><div class="a" style="left:417px;top:349px;width:3px;height:1px;background:#827a18"></div><div class="a" style="left:431px;top:349px;width:3px;height:1px;background:#827a18"></div><div class="a" style="left:441px;top:349px;width:3px;height:1px;background:#827a18"></div><div class="a" style="left:451px;top:349px;width:3px;height:1px;background:#827a18"></div><div class="pc" style="left:462px;top:344px;color:#f0f000">D</div><div class="pc" style="left:470.5px;top:344px;color:#f0f000">-</div><div class="pc" style="left:482px;top:344px;color:#f0f000">3</div><div class="pc" style="left:496px;top:344px;color:#80ff80">0</div><div class="pc" style="left:506px;top:344px;color:#80ff80">0</div><div class="a" style="left:524px;top:349px;width:3px;height:1px;background:#827a18"></div><div class="a" style="left:538px;top:349px;width:3px;height:1px;background:#827a18"></div><div class="a" style="left:548px;top:349px;width:3px;height:1px;background:#827a18"></div><div class="a" style="left:558px;top:349px;width:3px;height:1px;background:#827a18"></div><div class="pc" style="left:569px;top:344px;color:#f0f000">7</div><div class="pc" style="left:577.5px;top:344px;color:#f0f000">-</div><div class="pc" style="left:589px;top:344px;color:#f0f000">#</div><div class="pc" style="left:603px;top:344px;color:#80ff80">0</div><div class="pc" style="left:613px;top:344px;color:#80ff80">0</div><div class="pc" style="left:627px;top:344px;color:#8080ff">A</div><div class="pc" style="left:641px;top:344px;color:#ff8080">A</div><div class="pc" style="left:651px;top:344px;color:#f0f000">0</div><div class="pc" style="left:661px;top:344px;color:#f0f000">7</div><div class="pc" style="left:676px;top:344px;color:#f0f000">C</div><div class="pc" style="left:686px;top:344px;color:#f0f000">#</div><div class="pc" style="left:696px;top:344px;color:#f0f000">3</div><div class="pc" style="left:710px;top:344px;color:#80ff80">0</div><div class="pc" style="left:720px;top:344px;color:#80ff80">1</div><div class="a" style="left:738px;top:349px;width:3px;height:1px;background:#827a18"></div><div class="pc" style="left:748px;top:344px;color:#ff8080">Z</div><div class="pc" style="left:758px;top:344px;color:#f0f000">0</div><div class="pc" style="left:768px;top:344px;color:#f0f000">0</div><div class="rn" style="top:357px;color:#00f000">19</div><div class="a" style="left:48px;top:361px;width:3px;height:1px;background:#006e00"></div><div class="a" style="left:58px;top:361px;width:3px;height:1px;background:#006e00"></div><div class="a" style="left:68px;top:361px;width:3px;height:1px;background:#006e00"></div><div class="a" style="left:82px;top:361px;width:3px;height:1px;background:#006e00"></div><div class="a" style="left:92px;top:361px;width:3px;height:1px;background:#006e00"></div><div class="a" style="left:106px;top:361px;width:3px;height:1px;background:#006e00"></div><div class="a" style="left:120px;top:361px;width:3px;height:1px;background:#006e00"></div><div class="a" style="left:130px;top:361px;width:3px;height:1px;background:#006e00"></div><div class="a" style="left:140px;top:361px;width:3px;height:1px;background:#006e00"></div><div class="a" style="left:154px;top:361px;width:3px;height:1px;background:#006e00"></div><div class="a" style="left:164px;top:361px;width:3px;height:1px;background:#006e00"></div><div class="a" style="left:174px;top:361px;width:3px;height:1px;background:#006e00"></div><div class="a" style="left:188px;top:361px;width:3px;height:1px;background:#006e00"></div><div class="a" style="left:198px;top:361px;width:3px;height:1px;background:#006e00"></div><div class="a" style="left:208px;top:361px;width:3px;height:1px;background:#006e00"></div><div class="a" style="left:222px;top:361px;width:3px;height:1px;background:#006e00"></div><div class="a" style="left:232px;top:361px;width:3px;height:1px;background:#006e00"></div><div class="a" style="left:242px;top:361px;width:3px;height:1px;background:#006e00"></div><div class="a" style="left:257px;top:361px;width:3px;height:1px;background:#006e00"></div><div class="a" style="left:267px;top:361px;width:3px;height:1px;background:#006e00"></div><div class="a" style="left:277px;top:361px;width:3px;height:1px;background:#006e00"></div><div class="a" style="left:291px;top:361px;width:3px;height:1px;background:#006e00"></div><div class="a" style="left:301px;top:361px;width:3px;height:1px;background:#006e00"></div><div class="pc" style="left:311px;top:356px;color:#8080ff">2</div><div class="pc" style="left:325px;top:356px;color:#ff8080">G</div><div class="pc" style="left:335px;top:356px;color:#00f000">0</div><div class="pc" style="left:345px;top:356px;color:#00f000">2</div><div class="a" style="left:363px;top:361px;width:3px;height:1px;background:#006e00"></div><div class="a" style="left:373px;top:361px;width:3px;height:1px;background:#006e00"></div><div class="a" style="left:383px;top:361px;width:3px;height:1px;background:#006e00"></div><div class="a" style="left:397px;top:361px;width:3px;height:1px;background:#006e00"></div><div class="a" style="left:407px;top:361px;width:3px;height:1px;background:#006e00"></div><div class="a" style="left:417px;top:361px;width:3px;height:1px;background:#006e00"></div><div class="a" style="left:431px;top:361px;width:3px;height:1px;background:#006e00"></div><div class="a" style="left:441px;top:361px;width:3px;height:1px;background:#006e00"></div><div class="a" style="left:451px;top:361px;width:3px;height:1px;background:#006e00"></div><div class="a" style="left:468px;top:360px;width:18px;height:3px;background:#00f000"></div><div class="a" style="left:500px;top:361px;width:3px;height:1px;background:#006e00"></div><div class="a" style="left:510px;top:361px;width:3px;height:1px;background:#006e00"></div><div class="a" style="left:524px;top:361px;width:3px;height:1px;background:#006e00"></div><div class="pc" style="left:534px;top:356px;color:#ff8080">G</div><div class="pc" style="left:544px;top:356px;color:#00f000">0</div><div class="pc" style="left:554px;top:356px;color:#00f000">2</div><div class="a" style="left:573px;top:361px;width:3px;height:1px;background:#006e00"></div><div class="a" style="left:583px;top:361px;width:3px;height:1px;background:#006e00"></div><div class="a" style="left:593px;top:361px;width:3px;height:1px;background:#006e00"></div><div class="a" style="left:607px;top:361px;width:3px;height:1px;background:#006e00"></div><div class="a" style="left:617px;top:361px;width:3px;height:1px;background:#006e00"></div><div class="a" style="left:631px;top:361px;width:3px;height:1px;background:#006e00"></div><div class="a" style="left:645px;top:361px;width:3px;height:1px;background:#006e00"></div><div class="a" style="left:655px;top:361px;width:3px;height:1px;background:#006e00"></div><div class="a" style="left:665px;top:361px;width:3px;height:1px;background:#006e00"></div><div class="a" style="left:680px;top:361px;width:3px;height:1px;background:#006e00"></div><div class="a" style="left:690px;top:361px;width:3px;height:1px;background:#006e00"></div><div class="a" style="left:700px;top:361px;width:3px;height:1px;background:#006e00"></div><div class="a" style="left:714px;top:361px;width:3px;height:1px;background:#006e00"></div><div class="a" style="left:724px;top:361px;width:3px;height:1px;background:#006e00"></div><div class="a" style="left:738px;top:361px;width:3px;height:1px;background:#006e00"></div><div class="a" style="left:752px;top:361px;width:3px;height:1px;background:#006e00"></div><div class="a" style="left:762px;top:361px;width:3px;height:1px;background:#006e00"></div><div class="a" style="left:772px;top:361px;width:3px;height:1px;background:#006e00"></div><div class="rn" style="top:369px;color:#00f000">1A</div><div class="pc" style="left:44px;top:368px;color:#00f000">E</div><div class="pc" style="left:52.5px;top:368px;color:#00f000">-</div><div class="pc" style="left:64px;top:368px;color:#00f000">5</div><div class="pc" style="left:78px;top:368px;color:#80ff80">0</div><div class="pc" style="left:88px;top:368px;color:#80ff80">2</div><div class="pc" style="left:102px;top:368px;color:#8080ff">A</div><div class="pc" style="left:116px;top:368px;color:#ff8080">A</div><div class="pc" style="left:126px;top:368px;color:#00f000">0</div><div class="pc" style="left:136px;top:368px;color:#00f000">0</div><div class="pc" style="left:150px;top:368px;color:#ff8080">4</div><div class="pc" style="left:160px;top:368px;color:#00f000">0</div><div class="pc" style="left:170px;top:368px;color:#00f000">0</div><div class="a" style="left:188px;top:373px;width:3px;height:1px;background:#006e00"></div><div class="a" style="left:198px;top:373px;width:3px;height:1px;background:#006e00"></div><div class="a" style="left:208px;top:373px;width:3px;height:1px;background:#006e00"></div><div class="a" style="left:222px;top:373px;width:3px;height:1px;background:#006e00"></div><div class="a" style="left:232px;top:373px;width:3px;height:1px;background:#006e00"></div><div class="a" style="left:242px;top:373px;width:3px;height:1px;background:#006e00"></div><div class="pc" style="left:253px;top:368px;color:#00f000">E</div><div class="pc" style="left:261.5px;top:368px;color:#00f000">-</div><div class="pc" style="left:273px;top:368px;color:#00f000">3</div><div class="pc" style="left:287px;top:368px;color:#80ff80">0</div><div class="pc" style="left:297px;top:368px;color:#80ff80">0</div><div class="pc" style="left:311px;top:368px;color:#8080ff">8</div><div class="a" style="left:329px;top:373px;width:3px;height:1px;background:#006e00"></div><div class="a" style="left:339px;top:373px;width:3px;height:1px;background:#006e00"></div><div class="a" style="left:349px;top:373px;width:3px;height:1px;background:#006e00"></div><div class="a" style="left:363px;top:373px;width:3px;height:1px;background:#006e00"></div><div class="a" style="left:373px;top:373px;width:3px;height:1px;background:#006e00"></div><div class="a" style="left:383px;top:373px;width:3px;height:1px;background:#006e00"></div><div class="a" style="left:397px;top:373px;width:3px;height:1px;background:#006e00"></div><div class="a" style="left:407px;top:373px;width:3px;height:1px;background:#006e00"></div><div class="a" style="left:417px;top:373px;width:3px;height:1px;background:#006e00"></div><div class="a" style="left:431px;top:373px;width:3px;height:1px;background:#006e00"></div><div class="a" style="left:441px;top:373px;width:3px;height:1px;background:#006e00"></div><div class="a" style="left:451px;top:373px;width:3px;height:1px;background:#006e00"></div><div class="pc" style="left:462px;top:368px;color:#00f000">D</div><div class="pc" style="left:470.5px;top:368px;color:#00f000">-</div><div class="pc" style="left:482px;top:368px;color:#00f000">4</div><div class="pc" style="left:496px;top:368px;color:#80ff80">0</div><div class="pc" style="left:506px;top:368px;color:#80ff80">0</div><div class="a" style="left:524px;top:373px;width:3px;height:1px;background:#006e00"></div><div class="a" style="left:538px;top:373px;width:3px;height:1px;background:#006e00"></div><div class="a" style="left:548px;top:373px;width:3px;height:1px;background:#006e00"></div><div class="a" style="left:558px;top:373px;width:3px;height:1px;background:#006e00"></div><div class="a" style="left:573px;top:373px;width:3px;height:1px;background:#006e00"></div><div class="a" style="left:583px;top:373px;width:3px;height:1px;background:#006e00"></div><div class="a" style="left:593px;top:373px;width:3px;height:1px;background:#006e00"></div><div class="a" style="left:607px;top:373px;width:3px;height:1px;background:#006e00"></div><div class="a" style="left:617px;top:373px;width:3px;height:1px;background:#006e00"></div><div class="a" style="left:631px;top:373px;width:3px;height:1px;background:#006e00"></div><div class="a" style="left:645px;top:373px;width:3px;height:1px;background:#006e00"></div><div class="a" style="left:655px;top:373px;width:3px;height:1px;background:#006e00"></div><div class="a" style="left:665px;top:373px;width:3px;height:1px;background:#006e00"></div><div class="a" style="left:680px;top:373px;width:3px;height:1px;background:#006e00"></div><div class="a" style="left:690px;top:373px;width:3px;height:1px;background:#006e00"></div><div class="a" style="left:700px;top:373px;width:3px;height:1px;background:#006e00"></div><div class="a" style="left:714px;top:373px;width:3px;height:1px;background:#006e00"></div><div class="a" style="left:724px;top:373px;width:3px;height:1px;background:#006e00"></div><div class="a" style="left:738px;top:373px;width:3px;height:1px;background:#006e00"></div><div class="a" style="left:752px;top:373px;width:3px;height:1px;background:#006e00"></div><div class="a" style="left:762px;top:373px;width:3px;height:1px;background:#006e00"></div><div class="a" style="left:772px;top:373px;width:3px;height:1px;background:#006e00"></div><div class="rn" style="top:381px;color:#00f000">1B</div><div class="a" style="left:48px;top:385px;width:3px;height:1px;background:#006e00"></div><div class="a" style="left:58px;top:385px;width:3px;height:1px;background:#006e00"></div><div class="a" style="left:68px;top:385px;width:3px;height:1px;background:#006e00"></div><div class="a" style="left:82px;top:385px;width:3px;height:1px;background:#006e00"></div><div class="a" style="left:92px;top:385px;width:3px;height:1px;background:#006e00"></div><div class="a" style="left:106px;top:385px;width:3px;height:1px;background:#006e00"></div><div class="a" style="left:120px;top:385px;width:3px;height:1px;background:#006e00"></div><div class="a" style="left:130px;top:385px;width:3px;height:1px;background:#006e00"></div><div class="a" style="left:140px;top:385px;width:3px;height:1px;background:#006e00"></div><div class="a" style="left:154px;top:385px;width:3px;height:1px;background:#006e00"></div><div class="a" style="left:164px;top:385px;width:3px;height:1px;background:#006e00"></div><div class="a" style="left:174px;top:385px;width:3px;height:1px;background:#006e00"></div><div class="a" style="left:188px;top:385px;width:3px;height:1px;background:#006e00"></div><div class="a" style="left:198px;top:385px;width:3px;height:1px;background:#006e00"></div><div class="a" style="left:208px;top:385px;width:3px;height:1px;background:#006e00"></div><div class="a" style="left:222px;top:385px;width:3px;height:1px;background:#006e00"></div><div class="a" style="left:232px;top:385px;width:3px;height:1px;background:#006e00"></div><div class="a" style="left:242px;top:385px;width:3px;height:1px;background:#006e00"></div><div class="a" style="left:257px;top:385px;width:3px;height:1px;background:#006e00"></div><div class="a" style="left:267px;top:385px;width:3px;height:1px;background:#006e00"></div><div class="a" style="left:277px;top:385px;width:3px;height:1px;background:#006e00"></div><div class="a" style="left:291px;top:385px;width:3px;height:1px;background:#006e00"></div><div class="a" style="left:301px;top:385px;width:3px;height:1px;background:#006e00"></div><div class="pc" style="left:311px;top:380px;color:#8080ff">2</div><div class="pc" style="left:325px;top:380px;color:#ff8080">G</div><div class="pc" style="left:335px;top:380px;color:#00f000">0</div><div class="pc" style="left:345px;top:380px;color:#00f000">2</div><div class="a" style="left:363px;top:385px;width:3px;height:1px;background:#006e00"></div><div class="a" style="left:373px;top:385px;width:3px;height:1px;background:#006e00"></div><div class="a" style="left:383px;top:385px;width:3px;height:1px;background:#006e00"></div><div class="a" style="left:397px;top:385px;width:3px;height:1px;background:#006e00"></div><div class="a" style="left:407px;top:385px;width:3px;height:1px;background:#006e00"></div><div class="a" style="left:417px;top:385px;width:3px;height:1px;background:#006e00"></div><div class="a" style="left:431px;top:385px;width:3px;height:1px;background:#006e00"></div><div class="a" style="left:441px;top:385px;width:3px;height:1px;background:#006e00"></div><div class="a" style="left:451px;top:385px;width:3px;height:1px;background:#006e00"></div><div class="a" style="left:466px;top:385px;width:3px;height:1px;background:#006e00"></div><div class="a" style="left:476px;top:385px;width:3px;height:1px;background:#006e00"></div><div class="a" style="left:486px;top:385px;width:3px;height:1px;background:#006e00"></div><div class="a" style="left:500px;top:385px;width:3px;height:1px;background:#006e00"></div><div class="a" style="left:510px;top:385px;width:3px;height:1px;background:#006e00"></div><div class="a" style="left:524px;top:385px;width:3px;height:1px;background:#006e00"></div><div class="a" style="left:538px;top:385px;width:3px;height:1px;background:#006e00"></div><div class="a" style="left:548px;top:385px;width:3px;height:1px;background:#006e00"></div><div class="a" style="left:558px;top:385px;width:3px;height:1px;background:#006e00"></div><div class="a" style="left:573px;top:385px;width:3px;height:1px;background:#006e00"></div><div class="a" style="left:583px;top:385px;width:3px;height:1px;background:#006e00"></div><div class="a" style="left:593px;top:385px;width:3px;height:1px;background:#006e00"></div><div class="a" style="left:607px;top:385px;width:3px;height:1px;background:#006e00"></div><div class="a" style="left:617px;top:385px;width:3px;height:1px;background:#006e00"></div><div class="a" style="left:631px;top:385px;width:3px;height:1px;background:#006e00"></div><div class="a" style="left:645px;top:385px;width:3px;height:1px;background:#006e00"></div><div class="a" style="left:655px;top:385px;width:3px;height:1px;background:#006e00"></div><div class="a" style="left:665px;top:385px;width:3px;height:1px;background:#006e00"></div><div class="a" style="left:680px;top:385px;width:3px;height:1px;background:#006e00"></div><div class="a" style="left:690px;top:385px;width:3px;height:1px;background:#006e00"></div><div class="a" style="left:700px;top:385px;width:3px;height:1px;background:#006e00"></div><div class="a" style="left:714px;top:385px;width:3px;height:1px;background:#006e00"></div><div class="a" style="left:724px;top:385px;width:3px;height:1px;background:#006e00"></div><div class="a" style="left:738px;top:385px;width:3px;height:1px;background:#006e00"></div><div class="a" style="left:752px;top:385px;width:3px;height:1px;background:#006e00"></div><div class="a" style="left:762px;top:385px;width:3px;height:1px;background:#006e00"></div><div class="a" style="left:772px;top:385px;width:3px;height:1px;background:#006e00"></div><div class="rn" style="top:393px;color:#f0f000">1C</div><div class="a" style="left:42px;top:392px;width:738px;height:12px;background:#0f0f00;border-top:1px solid #1c1b06"></div><div class="pc" style="left:44px;top:392px;color:#f0f000">D</div><div class="pc" style="left:52.5px;top:392px;color:#f0f000">-</div><div class="pc" style="left:64px;top:392px;color:#f0f000">5</div><div class="pc" style="left:78px;top:392px;color:#80ff80">0</div><div class="pc" style="left:88px;top:392px;color:#80ff80">2</div><div class="a" style="left:106px;top:397px;width:3px;height:1px;background:#827a18"></div><div class="a" style="left:120px;top:397px;width:3px;height:1px;background:#827a18"></div><div class="a" style="left:130px;top:397px;width:3px;height:1px;background:#827a18"></div><div class="a" style="left:140px;top:397px;width:3px;height:1px;background:#827a18"></div><div class="a" style="left:154px;top:397px;width:3px;height:1px;background:#827a18"></div><div class="a" style="left:164px;top:397px;width:3px;height:1px;background:#827a18"></div><div class="a" style="left:174px;top:397px;width:3px;height:1px;background:#827a18"></div><div class="a" style="left:188px;top:397px;width:3px;height:1px;background:#827a18"></div><div class="a" style="left:198px;top:397px;width:3px;height:1px;background:#827a18"></div><div class="a" style="left:208px;top:397px;width:3px;height:1px;background:#827a18"></div><div class="a" style="left:222px;top:397px;width:3px;height:1px;background:#827a18"></div><div class="a" style="left:232px;top:397px;width:3px;height:1px;background:#827a18"></div><div class="a" style="left:242px;top:397px;width:3px;height:1px;background:#827a18"></div><div class="pc" style="left:253px;top:392px;color:#f0f000">D</div><div class="pc" style="left:261.5px;top:392px;color:#f0f000">-</div><div class="pc" style="left:273px;top:392px;color:#f0f000">3</div><div class="pc" style="left:287px;top:392px;color:#80ff80">0</div><div class="pc" style="left:297px;top:392px;color:#80ff80">0</div><div class="pc" style="left:311px;top:392px;color:#8080ff">8</div><div class="a" style="left:329px;top:397px;width:3px;height:1px;background:#827a18"></div><div class="a" style="left:339px;top:397px;width:3px;height:1px;background:#827a18"></div><div class="a" style="left:349px;top:397px;width:3px;height:1px;background:#827a18"></div><div class="a" style="left:363px;top:397px;width:3px;height:1px;background:#827a18"></div><div class="a" style="left:373px;top:397px;width:3px;height:1px;background:#827a18"></div><div class="a" style="left:383px;top:397px;width:3px;height:1px;background:#827a18"></div><div class="a" style="left:397px;top:397px;width:3px;height:1px;background:#827a18"></div><div class="a" style="left:407px;top:397px;width:3px;height:1px;background:#827a18"></div><div class="a" style="left:417px;top:397px;width:3px;height:1px;background:#827a18"></div><div class="a" style="left:431px;top:397px;width:3px;height:1px;background:#827a18"></div><div class="a" style="left:441px;top:397px;width:3px;height:1px;background:#827a18"></div><div class="a" style="left:451px;top:397px;width:3px;height:1px;background:#827a18"></div><div class="a" style="left:468px;top:396px;width:18px;height:3px;background:#f0f000"></div><div class="a" style="left:500px;top:397px;width:3px;height:1px;background:#827a18"></div><div class="a" style="left:510px;top:397px;width:3px;height:1px;background:#827a18"></div><div class="a" style="left:524px;top:397px;width:3px;height:1px;background:#827a18"></div><div class="a" style="left:538px;top:397px;width:3px;height:1px;background:#827a18"></div><div class="a" style="left:548px;top:397px;width:3px;height:1px;background:#827a18"></div><div class="a" style="left:558px;top:397px;width:3px;height:1px;background:#827a18"></div><div class="pc" style="left:569px;top:392px;color:#f0f000">D</div><div class="pc" style="left:577.5px;top:392px;color:#f0f000">-</div><div class="pc" style="left:589px;top:392px;color:#f0f000">#</div><div class="pc" style="left:603px;top:392px;color:#80ff80">0</div><div class="pc" style="left:613px;top:392px;color:#80ff80">0</div><div class="pc" style="left:627px;top:392px;color:#8080ff">8</div><div class="a" style="left:645px;top:397px;width:3px;height:1px;background:#827a18"></div><div class="a" style="left:655px;top:397px;width:3px;height:1px;background:#827a18"></div><div class="a" style="left:665px;top:397px;width:3px;height:1px;background:#827a18"></div><div class="pc" style="left:676px;top:392px;color:#f0f000">C</div><div class="pc" style="left:684.5px;top:392px;color:#f0f000">-</div><div class="pc" style="left:696px;top:392px;color:#f0f000">3</div><div class="pc" style="left:710px;top:392px;color:#80ff80">0</div><div class="pc" style="left:720px;top:392px;color:#80ff80">1</div><div class="a" style="left:738px;top:397px;width:3px;height:1px;background:#827a18"></div><div class="pc" style="left:748px;top:392px;color:#ff8080">Z</div><div class="pc" style="left:758px;top:392px;color:#f0f000">0</div><div class="pc" style="left:768px;top:392px;color:#f0f000">0</div><div class="rn" style="top:405px;color:#00f000">1D</div><div class="a" style="left:48px;top:409px;width:3px;height:1px;background:#006e00"></div><div class="a" style="left:58px;top:409px;width:3px;height:1px;background:#006e00"></div><div class="a" style="left:68px;top:409px;width:3px;height:1px;background:#006e00"></div><div class="a" style="left:82px;top:409px;width:3px;height:1px;background:#006e00"></div><div class="a" style="left:92px;top:409px;width:3px;height:1px;background:#006e00"></div><div class="a" style="left:106px;top:409px;width:3px;height:1px;background:#006e00"></div><div class="a" style="left:120px;top:409px;width:3px;height:1px;background:#006e00"></div><div class="a" style="left:130px;top:409px;width:3px;height:1px;background:#006e00"></div><div class="a" style="left:140px;top:409px;width:3px;height:1px;background:#006e00"></div><div class="a" style="left:154px;top:409px;width:3px;height:1px;background:#006e00"></div><div class="a" style="left:164px;top:409px;width:3px;height:1px;background:#006e00"></div><div class="a" style="left:174px;top:409px;width:3px;height:1px;background:#006e00"></div><div class="a" style="left:188px;top:409px;width:3px;height:1px;background:#006e00"></div><div class="a" style="left:198px;top:409px;width:3px;height:1px;background:#006e00"></div><div class="a" style="left:208px;top:409px;width:3px;height:1px;background:#006e00"></div><div class="a" style="left:222px;top:409px;width:3px;height:1px;background:#006e00"></div><div class="a" style="left:232px;top:409px;width:3px;height:1px;background:#006e00"></div><div class="a" style="left:242px;top:409px;width:3px;height:1px;background:#006e00"></div><div class="a" style="left:257px;top:409px;width:3px;height:1px;background:#006e00"></div><div class="a" style="left:267px;top:409px;width:3px;height:1px;background:#006e00"></div><div class="a" style="left:277px;top:409px;width:3px;height:1px;background:#006e00"></div><div class="a" style="left:291px;top:409px;width:3px;height:1px;background:#006e00"></div><div class="a" style="left:301px;top:409px;width:3px;height:1px;background:#006e00"></div><div class="pc" style="left:311px;top:404px;color:#8080ff">2</div><div class="pc" style="left:325px;top:404px;color:#ff8080">G</div><div class="pc" style="left:335px;top:404px;color:#00f000">0</div><div class="pc" style="left:345px;top:404px;color:#00f000">2</div><div class="a" style="left:363px;top:409px;width:3px;height:1px;background:#006e00"></div><div class="a" style="left:373px;top:409px;width:3px;height:1px;background:#006e00"></div><div class="a" style="left:383px;top:409px;width:3px;height:1px;background:#006e00"></div><div class="a" style="left:397px;top:409px;width:3px;height:1px;background:#006e00"></div><div class="a" style="left:407px;top:409px;width:3px;height:1px;background:#006e00"></div><div class="a" style="left:417px;top:409px;width:3px;height:1px;background:#006e00"></div><div class="a" style="left:431px;top:409px;width:3px;height:1px;background:#006e00"></div><div class="a" style="left:441px;top:409px;width:3px;height:1px;background:#006e00"></div><div class="a" style="left:451px;top:409px;width:3px;height:1px;background:#006e00"></div><div class="a" style="left:466px;top:409px;width:3px;height:1px;background:#006e00"></div><div class="a" style="left:476px;top:409px;width:3px;height:1px;background:#006e00"></div><div class="a" style="left:486px;top:409px;width:3px;height:1px;background:#006e00"></div><div class="a" style="left:500px;top:409px;width:3px;height:1px;background:#006e00"></div><div class="a" style="left:510px;top:409px;width:3px;height:1px;background:#006e00"></div><div class="a" style="left:524px;top:409px;width:3px;height:1px;background:#006e00"></div><div class="a" style="left:538px;top:409px;width:3px;height:1px;background:#006e00"></div><div class="a" style="left:548px;top:409px;width:3px;height:1px;background:#006e00"></div><div class="a" style="left:558px;top:409px;width:3px;height:1px;background:#006e00"></div><div class="a" style="left:573px;top:409px;width:3px;height:1px;background:#006e00"></div><div class="a" style="left:583px;top:409px;width:3px;height:1px;background:#006e00"></div><div class="a" style="left:593px;top:409px;width:3px;height:1px;background:#006e00"></div><div class="a" style="left:607px;top:409px;width:3px;height:1px;background:#006e00"></div><div class="a" style="left:617px;top:409px;width:3px;height:1px;background:#006e00"></div><div class="a" style="left:631px;top:409px;width:3px;height:1px;background:#006e00"></div><div class="a" style="left:645px;top:409px;width:3px;height:1px;background:#006e00"></div><div class="a" style="left:655px;top:409px;width:3px;height:1px;background:#006e00"></div><div class="a" style="left:665px;top:409px;width:3px;height:1px;background:#006e00"></div><div class="a" style="left:680px;top:409px;width:3px;height:1px;background:#006e00"></div><div class="a" style="left:690px;top:409px;width:3px;height:1px;background:#006e00"></div><div class="a" style="left:700px;top:409px;width:3px;height:1px;background:#006e00"></div><div class="a" style="left:714px;top:409px;width:3px;height:1px;background:#006e00"></div><div class="a" style="left:724px;top:409px;width:3px;height:1px;background:#006e00"></div><div class="a" style="left:738px;top:409px;width:3px;height:1px;background:#006e00"></div><div class="a" style="left:752px;top:409px;width:3px;height:1px;background:#006e00"></div><div class="a" style="left:762px;top:409px;width:3px;height:1px;background:#006e00"></div><div class="a" style="left:772px;top:409px;width:3px;height:1px;background:#006e00"></div><div class="rn" style="top:417px;color:#00f000">1E</div><div class="pc" style="left:44px;top:416px;color:#00f000">B</div><div class="pc" style="left:52.5px;top:416px;color:#00f000">-</div><div class="pc" style="left:64px;top:416px;color:#00f000">4</div><div class="pc" style="left:78px;top:416px;color:#80ff80">0</div><div class="pc" style="left:88px;top:416px;color:#80ff80">2</div><div class="a" style="left:106px;top:421px;width:3px;height:1px;background:#006e00"></div><div class="a" style="left:120px;top:421px;width:3px;height:1px;background:#006e00"></div><div class="a" style="left:130px;top:421px;width:3px;height:1px;background:#006e00"></div><div class="a" style="left:140px;top:421px;width:3px;height:1px;background:#006e00"></div><div class="a" style="left:154px;top:421px;width:3px;height:1px;background:#006e00"></div><div class="a" style="left:164px;top:421px;width:3px;height:1px;background:#006e00"></div><div class="a" style="left:174px;top:421px;width:3px;height:1px;background:#006e00"></div><div class="a" style="left:188px;top:421px;width:3px;height:1px;background:#006e00"></div><div class="a" style="left:198px;top:421px;width:3px;height:1px;background:#006e00"></div><div class="a" style="left:208px;top:421px;width:3px;height:1px;background:#006e00"></div><div class="a" style="left:222px;top:421px;width:3px;height:1px;background:#006e00"></div><div class="a" style="left:232px;top:421px;width:3px;height:1px;background:#006e00"></div><div class="a" style="left:242px;top:421px;width:3px;height:1px;background:#006e00"></div><div class="pc" style="left:253px;top:416px;color:#00f000">G</div><div class="pc" style="left:261.5px;top:416px;color:#00f000">-</div><div class="pc" style="left:273px;top:416px;color:#00f000">2</div><div class="pc" style="left:287px;top:416px;color:#80ff80">0</div><div class="pc" style="left:297px;top:416px;color:#80ff80">0</div><div class="pc" style="left:311px;top:416px;color:#8080ff">8</div><div class="a" style="left:329px;top:421px;width:3px;height:1px;background:#006e00"></div><div class="a" style="left:339px;top:421px;width:3px;height:1px;background:#006e00"></div><div class="a" style="left:349px;top:421px;width:3px;height:1px;background:#006e00"></div><div class="a" style="left:363px;top:421px;width:3px;height:1px;background:#006e00"></div><div class="a" style="left:373px;top:421px;width:3px;height:1px;background:#006e00"></div><div class="a" style="left:383px;top:421px;width:3px;height:1px;background:#006e00"></div><div class="a" style="left:397px;top:421px;width:3px;height:1px;background:#006e00"></div><div class="a" style="left:407px;top:421px;width:3px;height:1px;background:#006e00"></div><div class="a" style="left:417px;top:421px;width:3px;height:1px;background:#006e00"></div><div class="a" style="left:431px;top:421px;width:3px;height:1px;background:#006e00"></div><div class="a" style="left:441px;top:421px;width:3px;height:1px;background:#006e00"></div><div class="a" style="left:451px;top:421px;width:3px;height:1px;background:#006e00"></div><div class="pc" style="left:462px;top:416px;color:#00f000">D</div><div class="pc" style="left:470.5px;top:416px;color:#00f000">-</div><div class="pc" style="left:482px;top:416px;color:#00f000">3</div><div class="pc" style="left:496px;top:416px;color:#80ff80">0</div><div class="pc" style="left:506px;top:416px;color:#80ff80">0</div><div class="a" style="left:524px;top:421px;width:3px;height:1px;background:#006e00"></div><div class="a" style="left:538px;top:421px;width:3px;height:1px;background:#006e00"></div><div class="a" style="left:548px;top:421px;width:3px;height:1px;background:#006e00"></div><div class="a" style="left:558px;top:421px;width:3px;height:1px;background:#006e00"></div><div class="a" style="left:573px;top:421px;width:3px;height:1px;background:#006e00"></div><div class="a" style="left:583px;top:421px;width:3px;height:1px;background:#006e00"></div><div class="a" style="left:593px;top:421px;width:3px;height:1px;background:#006e00"></div><div class="a" style="left:607px;top:421px;width:3px;height:1px;background:#006e00"></div><div class="a" style="left:617px;top:421px;width:3px;height:1px;background:#006e00"></div><div class="a" style="left:631px;top:421px;width:3px;height:1px;background:#006e00"></div><div class="a" style="left:645px;top:421px;width:3px;height:1px;background:#006e00"></div><div class="a" style="left:655px;top:421px;width:3px;height:1px;background:#006e00"></div><div class="a" style="left:665px;top:421px;width:3px;height:1px;background:#006e00"></div><div class="a" style="left:680px;top:421px;width:3px;height:1px;background:#006e00"></div><div class="a" style="left:690px;top:421px;width:3px;height:1px;background:#006e00"></div><div class="a" style="left:700px;top:421px;width:3px;height:1px;background:#006e00"></div><div class="a" style="left:714px;top:421px;width:3px;height:1px;background:#006e00"></div><div class="a" style="left:724px;top:421px;width:3px;height:1px;background:#006e00"></div><div class="a" style="left:738px;top:421px;width:3px;height:1px;background:#006e00"></div><div class="a" style="left:752px;top:421px;width:3px;height:1px;background:#006e00"></div><div class="a" style="left:762px;top:421px;width:3px;height:1px;background:#006e00"></div><div class="a" style="left:772px;top:421px;width:3px;height:1px;background:#006e00"></div><div class="rn" style="top:429px;color:#00f000">1F</div><div class="a" style="left:48px;top:433px;width:3px;height:1px;background:#006e00"></div><div class="a" style="left:58px;top:433px;width:3px;height:1px;background:#006e00"></div><div class="a" style="left:68px;top:433px;width:3px;height:1px;background:#006e00"></div><div class="a" style="left:82px;top:433px;width:3px;height:1px;background:#006e00"></div><div class="a" style="left:92px;top:433px;width:3px;height:1px;background:#006e00"></div><div class="a" style="left:106px;top:433px;width:3px;height:1px;background:#006e00"></div><div class="a" style="left:120px;top:433px;width:3px;height:1px;background:#006e00"></div><div class="a" style="left:130px;top:433px;width:3px;height:1px;background:#006e00"></div><div class="a" style="left:140px;top:433px;width:3px;height:1px;background:#006e00"></div><div class="a" style="left:154px;top:433px;width:3px;height:1px;background:#006e00"></div><div class="a" style="left:164px;top:433px;width:3px;height:1px;background:#006e00"></div><div class="a" style="left:174px;top:433px;width:3px;height:1px;background:#006e00"></div><div class="a" style="left:188px;top:433px;width:3px;height:1px;background:#006e00"></div><div class="a" style="left:198px;top:433px;width:3px;height:1px;background:#006e00"></div><div class="a" style="left:208px;top:433px;width:3px;height:1px;background:#006e00"></div><div class="a" style="left:222px;top:433px;width:3px;height:1px;background:#006e00"></div><div class="a" style="left:232px;top:433px;width:3px;height:1px;background:#006e00"></div><div class="a" style="left:242px;top:433px;width:3px;height:1px;background:#006e00"></div><div class="a" style="left:257px;top:433px;width:3px;height:1px;background:#006e00"></div><div class="a" style="left:267px;top:433px;width:3px;height:1px;background:#006e00"></div><div class="a" style="left:277px;top:433px;width:3px;height:1px;background:#006e00"></div><div class="a" style="left:291px;top:433px;width:3px;height:1px;background:#006e00"></div><div class="a" style="left:301px;top:433px;width:3px;height:1px;background:#006e00"></div><div class="pc" style="left:311px;top:428px;color:#8080ff">2</div><div class="pc" style="left:325px;top:428px;color:#ff8080">G</div><div class="pc" style="left:335px;top:428px;color:#00f000">0</div><div class="pc" style="left:345px;top:428px;color:#00f000">2</div><div class="a" style="left:363px;top:433px;width:3px;height:1px;background:#006e00"></div><div class="a" style="left:373px;top:433px;width:3px;height:1px;background:#006e00"></div><div class="a" style="left:383px;top:433px;width:3px;height:1px;background:#006e00"></div><div class="a" style="left:397px;top:433px;width:3px;height:1px;background:#006e00"></div><div class="a" style="left:407px;top:433px;width:3px;height:1px;background:#006e00"></div><div class="a" style="left:417px;top:433px;width:3px;height:1px;background:#006e00"></div><div class="a" style="left:431px;top:433px;width:3px;height:1px;background:#006e00"></div><div class="a" style="left:441px;top:433px;width:3px;height:1px;background:#006e00"></div><div class="a" style="left:451px;top:433px;width:3px;height:1px;background:#006e00"></div><div class="a" style="left:468px;top:432px;width:18px;height:3px;background:#00f000"></div><div class="a" style="left:500px;top:433px;width:3px;height:1px;background:#006e00"></div><div class="a" style="left:510px;top:433px;width:3px;height:1px;background:#006e00"></div><div class="a" style="left:524px;top:433px;width:3px;height:1px;background:#006e00"></div><div class="pc" style="left:534px;top:428px;color:#ff8080">G</div><div class="pc" style="left:544px;top:428px;color:#00f000">0</div><div class="pc" style="left:554px;top:428px;color:#00f000">2</div><div class="a" style="left:573px;top:433px;width:3px;height:1px;background:#006e00"></div><div class="a" style="left:583px;top:433px;width:3px;height:1px;background:#006e00"></div><div class="a" style="left:593px;top:433px;width:3px;height:1px;background:#006e00"></div><div class="a" style="left:607px;top:433px;width:3px;height:1px;background:#006e00"></div><div class="a" style="left:617px;top:433px;width:3px;height:1px;background:#006e00"></div><div class="a" style="left:631px;top:433px;width:3px;height:1px;background:#006e00"></div><div class="a" style="left:645px;top:433px;width:3px;height:1px;background:#006e00"></div><div class="a" style="left:655px;top:433px;width:3px;height:1px;background:#006e00"></div><div class="a" style="left:665px;top:433px;width:3px;height:1px;background:#006e00"></div><div class="a" style="left:680px;top:433px;width:3px;height:1px;background:#006e00"></div><div class="a" style="left:690px;top:433px;width:3px;height:1px;background:#006e00"></div><div class="a" style="left:700px;top:433px;width:3px;height:1px;background:#006e00"></div><div class="a" style="left:714px;top:433px;width:3px;height:1px;background:#006e00"></div><div class="a" style="left:724px;top:433px;width:3px;height:1px;background:#006e00"></div><div class="a" style="left:738px;top:433px;width:3px;height:1px;background:#006e00"></div><div class="a" style="left:752px;top:433px;width:3px;height:1px;background:#006e00"></div><div class="a" style="left:762px;top:433px;width:3px;height:1px;background:#006e00"></div><div class="a" style="left:772px;top:433px;width:3px;height:1px;background:#006e00"></div><div class="rn" style="top:441px;color:#ffff60">20</div><div class="a" style="left:42px;top:440px;width:738px;height:12px;background:#201e00;border-top:1px solid #302c08"></div><div class="pc" style="left:44px;top:440px;color:#ffff60">F</div><div class="pc" style="left:54px;top:440px;color:#ffff60">#</div><div class="pc" style="left:64px;top:440px;color:#ffff60">5</div><div class="pc" style="left:78px;top:440px;color:#80ff80">0</div><div class="pc" style="left:88px;top:440px;color:#80ff80">2</div><div class="a" style="left:106px;top:445px;width:3px;height:1px;background:#968e38"></div><div class="a" style="left:120px;top:445px;width:3px;height:1px;background:#968e38"></div><div class="a" style="left:130px;top:445px;width:3px;height:1px;background:#968e38"></div><div class="a" style="left:140px;top:445px;width:3px;height:1px;background:#968e38"></div><div class="a" style="left:154px;top:445px;width:3px;height:1px;background:#968e38"></div><div class="a" style="left:164px;top:445px;width:3px;height:1px;background:#968e38"></div><div class="a" style="left:174px;top:445px;width:3px;height:1px;background:#968e38"></div><div class="a" style="left:188px;top:445px;width:3px;height:1px;background:#968e38"></div><div class="a" style="left:198px;top:445px;width:3px;height:1px;background:#968e38"></div><div class="a" style="left:208px;top:445px;width:3px;height:1px;background:#968e38"></div><div class="a" style="left:222px;top:445px;width:3px;height:1px;background:#968e38"></div><div class="a" style="left:232px;top:445px;width:3px;height:1px;background:#968e38"></div><div class="a" style="left:242px;top:445px;width:3px;height:1px;background:#968e38"></div><div class="pc" style="left:253px;top:440px;color:#ffff60">F</div><div class="pc" style="left:263px;top:440px;color:#ffff60">#</div><div class="pc" style="left:273px;top:440px;color:#ffff60">2</div><div class="pc" style="left:287px;top:440px;color:#80ff80">0</div><div class="pc" style="left:297px;top:440px;color:#80ff80">0</div><div class="pc" style="left:311px;top:440px;color:#8080ff">8</div><div class="a" style="left:329px;top:445px;width:3px;height:1px;background:#968e38"></div><div class="a" style="left:339px;top:445px;width:3px;height:1px;background:#968e38"></div><div class="a" style="left:349px;top:445px;width:3px;height:1px;background:#968e38"></div><div class="a" style="left:363px;top:445px;width:3px;height:1px;background:#968e38"></div><div class="a" style="left:373px;top:445px;width:3px;height:1px;background:#968e38"></div><div class="a" style="left:383px;top:445px;width:3px;height:1px;background:#968e38"></div><div class="a" style="left:397px;top:445px;width:3px;height:1px;background:#968e38"></div><div class="a" style="left:407px;top:445px;width:3px;height:1px;background:#968e38"></div><div class="a" style="left:417px;top:445px;width:3px;height:1px;background:#968e38"></div><div class="a" style="left:431px;top:445px;width:3px;height:1px;background:#968e38"></div><div class="a" style="left:441px;top:445px;width:3px;height:1px;background:#968e38"></div><div class="a" style="left:451px;top:445px;width:3px;height:1px;background:#968e38"></div><div class="pc" style="left:462px;top:440px;color:#ffff60">E</div><div class="pc" style="left:470.5px;top:440px;color:#ffff60">-</div><div class="pc" style="left:482px;top:440px;color:#ffff60">3</div><div class="pc" style="left:496px;top:440px;color:#80ff80">0</div><div class="pc" style="left:506px;top:440px;color:#80ff80">0</div><div class="a" style="left:524px;top:445px;width:3px;height:1px;background:#968e38"></div><div class="a" style="left:538px;top:445px;width:3px;height:1px;background:#968e38"></div><div class="a" style="left:548px;top:445px;width:3px;height:1px;background:#968e38"></div><div class="a" style="left:558px;top:445px;width:3px;height:1px;background:#968e38"></div><div class="pc" style="left:569px;top:440px;color:#ffff60">D</div><div class="pc" style="left:577.5px;top:440px;color:#ffff60">-</div><div class="pc" style="left:589px;top:440px;color:#ffff60">#</div><div class="pc" style="left:603px;top:440px;color:#80ff80">0</div><div class="pc" style="left:613px;top:440px;color:#80ff80">0</div><div class="pc" style="left:627px;top:440px;color:#8080ff">8</div><div class="pc" style="left:641px;top:440px;color:#ff8080">A</div><div class="pc" style="left:651px;top:440px;color:#ffff60">0</div><div class="pc" style="left:661px;top:440px;color:#ffff60">A</div><div class="pc" style="left:676px;top:440px;color:#ffff60">C</div><div class="pc" style="left:684.5px;top:440px;color:#ffff60">-</div><div class="pc" style="left:696px;top:440px;color:#ffff60">3</div><div class="pc" style="left:710px;top:440px;color:#80ff80">0</div><div class="pc" style="left:720px;top:440px;color:#80ff80">1</div><div class="a" style="left:738px;top:445px;width:3px;height:1px;background:#968e38"></div><div class="pc" style="left:748px;top:440px;color:#ff8080">Z</div><div class="pc" style="left:758px;top:440px;color:#ffff60">0</div><div class="pc" style="left:768px;top:440px;color:#ffff60">0</div><div class="rn" style="top:453px;color:#00f000">21</div><div class="a" style="left:48px;top:457px;width:3px;height:1px;background:#006e00"></div><div class="a" style="left:58px;top:457px;width:3px;height:1px;background:#006e00"></div><div class="a" style="left:68px;top:457px;width:3px;height:1px;background:#006e00"></div><div class="a" style="left:82px;top:457px;width:3px;height:1px;background:#006e00"></div><div class="a" style="left:92px;top:457px;width:3px;height:1px;background:#006e00"></div><div class="a" style="left:106px;top:457px;width:3px;height:1px;background:#006e00"></div><div class="a" style="left:120px;top:457px;width:3px;height:1px;background:#006e00"></div><div class="a" style="left:130px;top:457px;width:3px;height:1px;background:#006e00"></div><div class="a" style="left:140px;top:457px;width:3px;height:1px;background:#006e00"></div><div class="a" style="left:154px;top:457px;width:3px;height:1px;background:#006e00"></div><div class="a" style="left:164px;top:457px;width:3px;height:1px;background:#006e00"></div><div class="a" style="left:174px;top:457px;width:3px;height:1px;background:#006e00"></div><div class="a" style="left:188px;top:457px;width:3px;height:1px;background:#006e00"></div><div class="a" style="left:198px;top:457px;width:3px;height:1px;background:#006e00"></div><div class="a" style="left:208px;top:457px;width:3px;height:1px;background:#006e00"></div><div class="a" style="left:222px;top:457px;width:3px;height:1px;background:#006e00"></div><div class="a" style="left:232px;top:457px;width:3px;height:1px;background:#006e00"></div><div class="a" style="left:242px;top:457px;width:3px;height:1px;background:#006e00"></div><div class="a" style="left:257px;top:457px;width:3px;height:1px;background:#006e00"></div><div class="a" style="left:267px;top:457px;width:3px;height:1px;background:#006e00"></div><div class="a" style="left:277px;top:457px;width:3px;height:1px;background:#006e00"></div><div class="a" style="left:291px;top:457px;width:3px;height:1px;background:#006e00"></div><div class="a" style="left:301px;top:457px;width:3px;height:1px;background:#006e00"></div><div class="pc" style="left:311px;top:452px;color:#8080ff">2</div><div class="pc" style="left:325px;top:452px;color:#ff8080">G</div><div class="pc" style="left:335px;top:452px;color:#00f000">0</div><div class="pc" style="left:345px;top:452px;color:#00f000">2</div><div class="a" style="left:363px;top:457px;width:3px;height:1px;background:#006e00"></div><div class="a" style="left:373px;top:457px;width:3px;height:1px;background:#006e00"></div><div class="a" style="left:383px;top:457px;width:3px;height:1px;background:#006e00"></div><div class="a" style="left:397px;top:457px;width:3px;height:1px;background:#006e00"></div><div class="a" style="left:407px;top:457px;width:3px;height:1px;background:#006e00"></div><div class="a" style="left:417px;top:457px;width:3px;height:1px;background:#006e00"></div><div class="a" style="left:431px;top:457px;width:3px;height:1px;background:#006e00"></div><div class="a" style="left:441px;top:457px;width:3px;height:1px;background:#006e00"></div><div class="a" style="left:451px;top:457px;width:3px;height:1px;background:#006e00"></div><div class="a" style="left:468px;top:456px;width:18px;height:3px;background:#00f000"></div><div class="a" style="left:500px;top:457px;width:3px;height:1px;background:#006e00"></div><div class="a" style="left:510px;top:457px;width:3px;height:1px;background:#006e00"></div><div class="a" style="left:524px;top:457px;width:3px;height:1px;background:#006e00"></div><div class="pc" style="left:534px;top:452px;color:#ff8080">G</div><div class="pc" style="left:544px;top:452px;color:#00f000">0</div><div class="pc" style="left:554px;top:452px;color:#00f000">2</div><div class="a" style="left:573px;top:457px;width:3px;height:1px;background:#006e00"></div><div class="a" style="left:583px;top:457px;width:3px;height:1px;background:#006e00"></div><div class="a" style="left:593px;top:457px;width:3px;height:1px;background:#006e00"></div><div class="a" style="left:607px;top:457px;width:3px;height:1px;background:#006e00"></div><div class="a" style="left:617px;top:457px;width:3px;height:1px;background:#006e00"></div><div class="a" style="left:631px;top:457px;width:3px;height:1px;background:#006e00"></div><div class="a" style="left:645px;top:457px;width:3px;height:1px;background:#006e00"></div><div class="a" style="left:655px;top:457px;width:3px;height:1px;background:#006e00"></div><div class="a" style="left:665px;top:457px;width:3px;height:1px;background:#006e00"></div><div class="a" style="left:680px;top:457px;width:3px;height:1px;background:#006e00"></div><div class="a" style="left:690px;top:457px;width:3px;height:1px;background:#006e00"></div><div class="a" style="left:700px;top:457px;width:3px;height:1px;background:#006e00"></div><div class="a" style="left:714px;top:457px;width:3px;height:1px;background:#006e00"></div><div class="a" style="left:724px;top:457px;width:3px;height:1px;background:#006e00"></div><div class="a" style="left:738px;top:457px;width:3px;height:1px;background:#006e00"></div><div class="a" style="left:752px;top:457px;width:3px;height:1px;background:#006e00"></div><div class="a" style="left:762px;top:457px;width:3px;height:1px;background:#006e00"></div><div class="a" style="left:772px;top:457px;width:3px;height:1px;background:#006e00"></div><div class="rn" style="top:465px;color:#00f000">22</div><div class="pc" style="left:44px;top:464px;color:#00f000">F</div><div class="pc" style="left:54px;top:464px;color:#00f000">#</div><div class="pc" style="left:64px;top:464px;color:#00f000">5</div><div class="pc" style="left:78px;top:464px;color:#80ff80">0</div><div class="pc" style="left:88px;top:464px;color:#80ff80">2</div><div class="a" style="left:106px;top:469px;width:3px;height:1px;background:#006e00"></div><div class="a" style="left:120px;top:469px;width:3px;height:1px;background:#006e00"></div><div class="a" style="left:130px;top:469px;width:3px;height:1px;background:#006e00"></div><div class="a" style="left:140px;top:469px;width:3px;height:1px;background:#006e00"></div><div class="a" style="left:154px;top:469px;width:3px;height:1px;background:#006e00"></div><div class="a" style="left:164px;top:469px;width:3px;height:1px;background:#006e00"></div><div class="a" style="left:174px;top:469px;width:3px;height:1px;background:#006e00"></div><div class="a" style="left:188px;top:469px;width:3px;height:1px;background:#006e00"></div><div class="a" style="left:198px;top:469px;width:3px;height:1px;background:#006e00"></div><div class="a" style="left:208px;top:469px;width:3px;height:1px;background:#006e00"></div><div class="a" style="left:222px;top:469px;width:3px;height:1px;background:#006e00"></div><div class="a" style="left:232px;top:469px;width:3px;height:1px;background:#006e00"></div><div class="a" style="left:242px;top:469px;width:3px;height:1px;background:#006e00"></div><div class="pc" style="left:253px;top:464px;color:#00f000">A</div><div class="pc" style="left:263px;top:464px;color:#00f000">#</div><div class="pc" style="left:273px;top:464px;color:#00f000">2</div><div class="pc" style="left:287px;top:464px;color:#80ff80">0</div><div class="pc" style="left:297px;top:464px;color:#80ff80">0</div><div class="pc" style="left:311px;top:464px;color:#8080ff">8</div><div class="a" style="left:329px;top:469px;width:3px;height:1px;background:#006e00"></div><div class="a" style="left:339px;top:469px;width:3px;height:1px;background:#006e00"></div><div class="a" style="left:349px;top:469px;width:3px;height:1px;background:#006e00"></div><div class="a" style="left:363px;top:469px;width:3px;height:1px;background:#006e00"></div><div class="a" style="left:373px;top:469px;width:3px;height:1px;background:#006e00"></div><div class="a" style="left:383px;top:469px;width:3px;height:1px;background:#006e00"></div><div class="a" style="left:397px;top:469px;width:3px;height:1px;background:#006e00"></div><div class="a" style="left:407px;top:469px;width:3px;height:1px;background:#006e00"></div><div class="a" style="left:417px;top:469px;width:3px;height:1px;background:#006e00"></div><div class="a" style="left:431px;top:469px;width:3px;height:1px;background:#006e00"></div><div class="a" style="left:441px;top:469px;width:3px;height:1px;background:#006e00"></div><div class="a" style="left:451px;top:469px;width:3px;height:1px;background:#006e00"></div><div class="pc" style="left:462px;top:464px;color:#00f000">E</div><div class="pc" style="left:470.5px;top:464px;color:#00f000">-</div><div class="pc" style="left:482px;top:464px;color:#00f000">3</div><div class="pc" style="left:496px;top:464px;color:#80ff80">0</div><div class="pc" style="left:506px;top:464px;color:#80ff80">0</div><div class="a" style="left:524px;top:469px;width:3px;height:1px;background:#006e00"></div><div class="a" style="left:538px;top:469px;width:3px;height:1px;background:#006e00"></div><div class="a" style="left:548px;top:469px;width:3px;height:1px;background:#006e00"></div><div class="a" style="left:558px;top:469px;width:3px;height:1px;background:#006e00"></div><div class="a" style="left:573px;top:469px;width:3px;height:1px;background:#006e00"></div><div class="a" style="left:583px;top:469px;width:3px;height:1px;background:#006e00"></div><div class="a" style="left:593px;top:469px;width:3px;height:1px;background:#006e00"></div><div class="a" style="left:607px;top:469px;width:3px;height:1px;background:#006e00"></div><div class="a" style="left:617px;top:469px;width:3px;height:1px;background:#006e00"></div><div class="a" style="left:631px;top:469px;width:3px;height:1px;background:#006e00"></div><div class="a" style="left:645px;top:469px;width:3px;height:1px;background:#006e00"></div><div class="a" style="left:655px;top:469px;width:3px;height:1px;background:#006e00"></div><div class="a" style="left:665px;top:469px;width:3px;height:1px;background:#006e00"></div><div class="a" style="left:680px;top:469px;width:3px;height:1px;background:#006e00"></div><div class="a" style="left:690px;top:469px;width:3px;height:1px;background:#006e00"></div><div class="a" style="left:700px;top:469px;width:3px;height:1px;background:#006e00"></div><div class="a" style="left:714px;top:469px;width:3px;height:1px;background:#006e00"></div><div class="a" style="left:724px;top:469px;width:3px;height:1px;background:#006e00"></div><div class="a" style="left:738px;top:469px;width:3px;height:1px;background:#006e00"></div><div class="a" style="left:752px;top:469px;width:3px;height:1px;background:#006e00"></div><div class="a" style="left:762px;top:469px;width:3px;height:1px;background:#006e00"></div><div class="a" style="left:772px;top:469px;width:3px;height:1px;background:#006e00"></div><div class="rn" style="top:477px;color:#00f000">23</div><div class="a" style="left:48px;top:481px;width:3px;height:1px;background:#006e00"></div><div class="a" style="left:58px;top:481px;width:3px;height:1px;background:#006e00"></div><div class="a" style="left:68px;top:481px;width:3px;height:1px;background:#006e00"></div><div class="a" style="left:82px;top:481px;width:3px;height:1px;background:#006e00"></div><div class="a" style="left:92px;top:481px;width:3px;height:1px;background:#006e00"></div><div class="a" style="left:106px;top:481px;width:3px;height:1px;background:#006e00"></div><div class="a" style="left:120px;top:481px;width:3px;height:1px;background:#006e00"></div><div class="a" style="left:130px;top:481px;width:3px;height:1px;background:#006e00"></div><div class="a" style="left:140px;top:481px;width:3px;height:1px;background:#006e00"></div><div class="a" style="left:154px;top:481px;width:3px;height:1px;background:#006e00"></div><div class="a" style="left:164px;top:481px;width:3px;height:1px;background:#006e00"></div><div class="a" style="left:174px;top:481px;width:3px;height:1px;background:#006e00"></div><div class="a" style="left:188px;top:481px;width:3px;height:1px;background:#006e00"></div><div class="a" style="left:198px;top:481px;width:3px;height:1px;background:#006e00"></div><div class="a" style="left:208px;top:481px;width:3px;height:1px;background:#006e00"></div><div class="a" style="left:222px;top:481px;width:3px;height:1px;background:#006e00"></div><div class="a" style="left:232px;top:481px;width:3px;height:1px;background:#006e00"></div><div class="a" style="left:242px;top:481px;width:3px;height:1px;background:#006e00"></div><div class="a" style="left:257px;top:481px;width:3px;height:1px;background:#006e00"></div><div class="a" style="left:267px;top:481px;width:3px;height:1px;background:#006e00"></div><div class="a" style="left:277px;top:481px;width:3px;height:1px;background:#006e00"></div><div class="a" style="left:291px;top:481px;width:3px;height:1px;background:#006e00"></div><div class="a" style="left:301px;top:481px;width:3px;height:1px;background:#006e00"></div><div class="pc" style="left:311px;top:476px;color:#8080ff">2</div><div class="pc" style="left:325px;top:476px;color:#ff8080">G</div><div class="pc" style="left:335px;top:476px;color:#00f000">0</div><div class="pc" style="left:345px;top:476px;color:#00f000">2</div><div class="a" style="left:363px;top:481px;width:3px;height:1px;background:#006e00"></div><div class="a" style="left:373px;top:481px;width:3px;height:1px;background:#006e00"></div><div class="a" style="left:383px;top:481px;width:3px;height:1px;background:#006e00"></div><div class="a" style="left:397px;top:481px;width:3px;height:1px;background:#006e00"></div><div class="a" style="left:407px;top:481px;width:3px;height:1px;background:#006e00"></div><div class="a" style="left:417px;top:481px;width:3px;height:1px;background:#006e00"></div><div class="a" style="left:431px;top:481px;width:3px;height:1px;background:#006e00"></div><div class="a" style="left:441px;top:481px;width:3px;height:1px;background:#006e00"></div><div class="a" style="left:451px;top:481px;width:3px;height:1px;background:#006e00"></div><div class="a" style="left:468px;top:480px;width:18px;height:3px;background:#00f000"></div><div class="a" style="left:500px;top:481px;width:3px;height:1px;background:#006e00"></div><div class="a" style="left:510px;top:481px;width:3px;height:1px;background:#006e00"></div><div class="a" style="left:524px;top:481px;width:3px;height:1px;background:#006e00"></div><div class="pc" style="left:534px;top:476px;color:#ff8080">G</div><div class="pc" style="left:544px;top:476px;color:#00f000">0</div><div class="pc" style="left:554px;top:476px;color:#00f000">2</div><div class="a" style="left:573px;top:481px;width:3px;height:1px;background:#006e00"></div><div class="a" style="left:583px;top:481px;width:3px;height:1px;background:#006e00"></div><div class="a" style="left:593px;top:481px;width:3px;height:1px;background:#006e00"></div><div class="a" style="left:607px;top:481px;width:3px;height:1px;background:#006e00"></div><div class="a" style="left:617px;top:481px;width:3px;height:1px;background:#006e00"></div><div class="a" style="left:631px;top:481px;width:3px;height:1px;background:#006e00"></div><div class="a" style="left:645px;top:481px;width:3px;height:1px;background:#006e00"></div><div class="a" style="left:655px;top:481px;width:3px;height:1px;background:#006e00"></div><div class="a" style="left:665px;top:481px;width:3px;height:1px;background:#006e00"></div><div class="a" style="left:680px;top:481px;width:3px;height:1px;background:#006e00"></div><div class="a" style="left:690px;top:481px;width:3px;height:1px;background:#006e00"></div><div class="a" style="left:700px;top:481px;width:3px;height:1px;background:#006e00"></div><div class="a" style="left:714px;top:481px;width:3px;height:1px;background:#006e00"></div><div class="a" style="left:724px;top:481px;width:3px;height:1px;background:#006e00"></div><div class="a" style="left:738px;top:481px;width:3px;height:1px;background:#006e00"></div><div class="a" style="left:752px;top:481px;width:3px;height:1px;background:#006e00"></div><div class="a" style="left:762px;top:481px;width:3px;height:1px;background:#006e00"></div><div class="a" style="left:772px;top:481px;width:3px;height:1px;background:#006e00"></div><div class="rn" style="top:489px;color:#f0f000">24</div><div class="a" style="left:42px;top:488px;width:738px;height:12px;background:#0f0f00;border-top:1px solid #1c1b06"></div><div class="pc" style="left:44px;top:488px;color:#f0f000">B</div><div class="pc" style="left:52.5px;top:488px;color:#f0f000">-</div><div class="pc" style="left:64px;top:488px;color:#f0f000">3</div><div class="pc" style="left:78px;top:488px;color:#80ff80">0</div><div class="pc" style="left:88px;top:488px;color:#80ff80">0</div><div class="pc" style="left:102px;top:488px;color:#8080ff">4</div><div class="pc" style="left:116px;top:488px;color:#ff8080">V</div><div class="pc" style="left:126px;top:488px;color:#f0f000">0</div><div class="pc" style="left:136px;top:488px;color:#f0f000">0</div><div class="a" style="left:154px;top:493px;width:3px;height:1px;background:#827a18"></div><div class="a" style="left:164px;top:493px;width:3px;height:1px;background:#827a18"></div><div class="a" style="left:174px;top:493px;width:3px;height:1px;background:#827a18"></div><div class="a" style="left:188px;top:493px;width:3px;height:1px;background:#827a18"></div><div class="a" style="left:198px;top:493px;width:3px;height:1px;background:#827a18"></div><div class="a" style="left:208px;top:493px;width:3px;height:1px;background:#827a18"></div><div class="a" style="left:222px;top:493px;width:3px;height:1px;background:#827a18"></div><div class="a" style="left:232px;top:493px;width:3px;height:1px;background:#827a18"></div><div class="a" style="left:242px;top:493px;width:3px;height:1px;background:#827a18"></div><div class="pc" style="left:253px;top:488px;color:#f0f000">C</div><div class="pc" style="left:263px;top:488px;color:#f0f000">#</div><div class="pc" style="left:273px;top:488px;color:#f0f000">3</div><div class="pc" style="left:287px;top:488px;color:#80ff80">0</div><div class="pc" style="left:297px;top:488px;color:#80ff80">0</div><div class="pc" style="left:311px;top:488px;color:#8080ff">8</div><div class="a" style="left:329px;top:493px;width:3px;height:1px;background:#827a18"></div><div class="a" style="left:339px;top:493px;width:3px;height:1px;background:#827a18"></div><div class="a" style="left:349px;top:493px;width:3px;height:1px;background:#827a18"></div><div class="a" style="left:363px;top:493px;width:3px;height:1px;background:#827a18"></div><div class="a" style="left:373px;top:493px;width:3px;height:1px;background:#827a18"></div><div class="a" style="left:383px;top:493px;width:3px;height:1px;background:#827a18"></div><div class="a" style="left:397px;top:493px;width:3px;height:1px;background:#827a18"></div><div class="a" style="left:407px;top:493px;width:3px;height:1px;background:#827a18"></div><div class="a" style="left:417px;top:493px;width:3px;height:1px;background:#827a18"></div><div class="a" style="left:431px;top:493px;width:3px;height:1px;background:#827a18"></div><div class="a" style="left:441px;top:493px;width:3px;height:1px;background:#827a18"></div><div class="a" style="left:451px;top:493px;width:3px;height:1px;background:#827a18"></div><div class="pc" style="left:462px;top:488px;color:#f0f000">E</div><div class="pc" style="left:470.5px;top:488px;color:#f0f000">-</div><div class="pc" style="left:482px;top:488px;color:#f0f000">3</div><div class="pc" style="left:496px;top:488px;color:#80ff80">0</div><div class="pc" style="left:506px;top:488px;color:#80ff80">0</div><div class="a" style="left:524px;top:493px;width:3px;height:1px;background:#827a18"></div><div class="a" style="left:538px;top:493px;width:3px;height:1px;background:#827a18"></div><div class="a" style="left:548px;top:493px;width:3px;height:1px;background:#827a18"></div><div class="a" style="left:558px;top:493px;width:3px;height:1px;background:#827a18"></div><div class="a" style="left:573px;top:493px;width:3px;height:1px;background:#827a18"></div><div class="a" style="left:583px;top:493px;width:3px;height:1px;background:#827a18"></div><div class="a" style="left:593px;top:493px;width:3px;height:1px;background:#827a18"></div><div class="a" style="left:607px;top:493px;width:3px;height:1px;background:#827a18"></div><div class="a" style="left:617px;top:493px;width:3px;height:1px;background:#827a18"></div><div class="a" style="left:631px;top:493px;width:3px;height:1px;background:#827a18"></div><div class="a" style="left:645px;top:493px;width:3px;height:1px;background:#827a18"></div><div class="a" style="left:655px;top:493px;width:3px;height:1px;background:#827a18"></div><div class="a" style="left:665px;top:493px;width:3px;height:1px;background:#827a18"></div><div class="a" style="left:680px;top:493px;width:3px;height:1px;background:#827a18"></div><div class="a" style="left:690px;top:493px;width:3px;height:1px;background:#827a18"></div><div class="a" style="left:700px;top:493px;width:3px;height:1px;background:#827a18"></div><div class="a" style="left:714px;top:493px;width:3px;height:1px;background:#827a18"></div><div class="a" style="left:724px;top:493px;width:3px;height:1px;background:#827a18"></div><div class="a" style="left:738px;top:493px;width:3px;height:1px;background:#827a18"></div><div class="a" style="left:752px;top:493px;width:3px;height:1px;background:#827a18"></div><div class="a" style="left:762px;top:493px;width:3px;height:1px;background:#827a18"></div><div class="a" style="left:772px;top:493px;width:3px;height:1px;background:#827a18"></div><div class="rn" style="top:501px;color:#00f000">25</div><div class="a" style="left:48px;top:505px;width:3px;height:1px;background:#006e00"></div><div class="a" style="left:58px;top:505px;width:3px;height:1px;background:#006e00"></div><div class="a" style="left:68px;top:505px;width:3px;height:1px;background:#006e00"></div><div class="a" style="left:82px;top:505px;width:3px;height:1px;background:#006e00"></div><div class="a" style="left:92px;top:505px;width:3px;height:1px;background:#006e00"></div><div class="a" style="left:106px;top:505px;width:3px;height:1px;background:#006e00"></div><div class="a" style="left:120px;top:505px;width:3px;height:1px;background:#006e00"></div><div class="a" style="left:130px;top:505px;width:3px;height:1px;background:#006e00"></div><div class="a" style="left:140px;top:505px;width:3px;height:1px;background:#006e00"></div><div class="a" style="left:154px;top:505px;width:3px;height:1px;background:#006e00"></div><div class="a" style="left:164px;top:505px;width:3px;height:1px;background:#006e00"></div><div class="a" style="left:174px;top:505px;width:3px;height:1px;background:#006e00"></div><div class="a" style="left:188px;top:505px;width:3px;height:1px;background:#006e00"></div><div class="a" style="left:198px;top:505px;width:3px;height:1px;background:#006e00"></div><div class="a" style="left:208px;top:505px;width:3px;height:1px;background:#006e00"></div><div class="a" style="left:222px;top:505px;width:3px;height:1px;background:#006e00"></div><div class="a" style="left:232px;top:505px;width:3px;height:1px;background:#006e00"></div><div class="a" style="left:242px;top:505px;width:3px;height:1px;background:#006e00"></div><div class="a" style="left:257px;top:505px;width:3px;height:1px;background:#006e00"></div><div class="a" style="left:267px;top:505px;width:3px;height:1px;background:#006e00"></div><div class="a" style="left:277px;top:505px;width:3px;height:1px;background:#006e00"></div><div class="a" style="left:291px;top:505px;width:3px;height:1px;background:#006e00"></div><div class="a" style="left:301px;top:505px;width:3px;height:1px;background:#006e00"></div><div class="pc" style="left:311px;top:500px;color:#8080ff">2</div><div class="pc" style="left:325px;top:500px;color:#ff8080">G</div><div class="pc" style="left:335px;top:500px;color:#00f000">0</div><div class="pc" style="left:345px;top:500px;color:#00f000">2</div><div class="a" style="left:363px;top:505px;width:3px;height:1px;background:#006e00"></div><div class="a" style="left:373px;top:505px;width:3px;height:1px;background:#006e00"></div><div class="a" style="left:383px;top:505px;width:3px;height:1px;background:#006e00"></div><div class="a" style="left:397px;top:505px;width:3px;height:1px;background:#006e00"></div><div class="a" style="left:407px;top:505px;width:3px;height:1px;background:#006e00"></div><div class="a" style="left:417px;top:505px;width:3px;height:1px;background:#006e00"></div><div class="a" style="left:431px;top:505px;width:3px;height:1px;background:#006e00"></div><div class="a" style="left:441px;top:505px;width:3px;height:1px;background:#006e00"></div><div class="a" style="left:451px;top:505px;width:3px;height:1px;background:#006e00"></div><div class="a" style="left:468px;top:504px;width:18px;height:3px;background:#00f000"></div><div class="a" style="left:500px;top:505px;width:3px;height:1px;background:#006e00"></div><div class="a" style="left:510px;top:505px;width:3px;height:1px;background:#006e00"></div><div class="a" style="left:524px;top:505px;width:3px;height:1px;background:#006e00"></div><div class="pc" style="left:534px;top:500px;color:#ff8080">G</div><div class="pc" style="left:544px;top:500px;color:#00f000">0</div><div class="pc" style="left:554px;top:500px;color:#00f000">2</div><div class="a" style="left:573px;top:505px;width:3px;height:1px;background:#006e00"></div><div class="a" style="left:583px;top:505px;width:3px;height:1px;background:#006e00"></div><div class="a" style="left:593px;top:505px;width:3px;height:1px;background:#006e00"></div><div class="a" style="left:607px;top:505px;width:3px;height:1px;background:#006e00"></div><div class="a" style="left:617px;top:505px;width:3px;height:1px;background:#006e00"></div><div class="a" style="left:631px;top:505px;width:3px;height:1px;background:#006e00"></div><div class="a" style="left:645px;top:505px;width:3px;height:1px;background:#006e00"></div><div class="a" style="left:655px;top:505px;width:3px;height:1px;background:#006e00"></div><div class="a" style="left:665px;top:505px;width:3px;height:1px;background:#006e00"></div><div class="a" style="left:680px;top:505px;width:3px;height:1px;background:#006e00"></div><div class="a" style="left:690px;top:505px;width:3px;height:1px;background:#006e00"></div><div class="a" style="left:700px;top:505px;width:3px;height:1px;background:#006e00"></div><div class="a" style="left:714px;top:505px;width:3px;height:1px;background:#006e00"></div><div class="a" style="left:724px;top:505px;width:3px;height:1px;background:#006e00"></div><div class="a" style="left:738px;top:505px;width:3px;height:1px;background:#006e00"></div><div class="a" style="left:752px;top:505px;width:3px;height:1px;background:#006e00"></div><div class="a" style="left:762px;top:505px;width:3px;height:1px;background:#006e00"></div><div class="a" style="left:772px;top:505px;width:3px;height:1px;background:#006e00"></div><div class="rn" style="top:513px;color:#00f000">26</div><div class="pc" style="left:44px;top:512px;color:#00f000">E</div><div class="pc" style="left:52.5px;top:512px;color:#00f000">-</div><div class="pc" style="left:64px;top:512px;color:#00f000">5</div><div class="pc" style="left:78px;top:512px;color:#80ff80">0</div><div class="pc" style="left:88px;top:512px;color:#80ff80">2</div><div class="pc" style="left:102px;top:512px;color:#8080ff">A</div><div class="a" style="left:120px;top:517px;width:3px;height:1px;background:#006e00"></div><div class="a" style="left:130px;top:517px;width:3px;height:1px;background:#006e00"></div><div class="a" style="left:140px;top:517px;width:3px;height:1px;background:#006e00"></div><div class="a" style="left:154px;top:517px;width:3px;height:1px;background:#006e00"></div><div class="a" style="left:164px;top:517px;width:3px;height:1px;background:#006e00"></div><div class="a" style="left:174px;top:517px;width:3px;height:1px;background:#006e00"></div><div class="a" style="left:188px;top:517px;width:3px;height:1px;background:#006e00"></div><div class="a" style="left:198px;top:517px;width:3px;height:1px;background:#006e00"></div><div class="a" style="left:208px;top:517px;width:3px;height:1px;background:#006e00"></div><div class="a" style="left:222px;top:517px;width:3px;height:1px;background:#006e00"></div><div class="a" style="left:232px;top:517px;width:3px;height:1px;background:#006e00"></div><div class="a" style="left:242px;top:517px;width:3px;height:1px;background:#006e00"></div><div class="a" style="left:257px;top:517px;width:3px;height:1px;background:#006e00"></div><div class="a" style="left:267px;top:517px;width:3px;height:1px;background:#006e00"></div><div class="a" style="left:277px;top:517px;width:3px;height:1px;background:#006e00"></div><div class="a" style="left:291px;top:517px;width:3px;height:1px;background:#006e00"></div><div class="a" style="left:301px;top:517px;width:3px;height:1px;background:#006e00"></div><div class="a" style="left:315px;top:517px;width:3px;height:1px;background:#006e00"></div><div class="a" style="left:329px;top:517px;width:3px;height:1px;background:#006e00"></div><div class="a" style="left:339px;top:517px;width:3px;height:1px;background:#006e00"></div><div class="a" style="left:349px;top:517px;width:3px;height:1px;background:#006e00"></div><div class="a" style="left:363px;top:517px;width:3px;height:1px;background:#006e00"></div><div class="a" style="left:373px;top:517px;width:3px;height:1px;background:#006e00"></div><div class="a" style="left:383px;top:517px;width:3px;height:1px;background:#006e00"></div><div class="a" style="left:397px;top:517px;width:3px;height:1px;background:#006e00"></div><div class="a" style="left:407px;top:517px;width:3px;height:1px;background:#006e00"></div><div class="a" style="left:417px;top:517px;width:3px;height:1px;background:#006e00"></div><div class="a" style="left:431px;top:517px;width:3px;height:1px;background:#006e00"></div><div class="a" style="left:441px;top:517px;width:3px;height:1px;background:#006e00"></div><div class="a" style="left:451px;top:517px;width:3px;height:1px;background:#006e00"></div><div class="a" style="left:466px;top:517px;width:3px;height:1px;background:#006e00"></div><div class="a" style="left:476px;top:517px;width:3px;height:1px;background:#006e00"></div><div class="a" style="left:486px;top:517px;width:3px;height:1px;background:#006e00"></div><div class="a" style="left:500px;top:517px;width:3px;height:1px;background:#006e00"></div><div class="a" style="left:510px;top:517px;width:3px;height:1px;background:#006e00"></div><div class="a" style="left:524px;top:517px;width:3px;height:1px;background:#006e00"></div><div class="a" style="left:538px;top:517px;width:3px;height:1px;background:#006e00"></div><div class="a" style="left:548px;top:517px;width:3px;height:1px;background:#006e00"></div><div class="a" style="left:558px;top:517px;width:3px;height:1px;background:#006e00"></div><div class="pc" style="left:569px;top:512px;color:#00f000">D</div><div class="pc" style="left:577.5px;top:512px;color:#00f000">-</div><div class="pc" style="left:589px;top:512px;color:#00f000">#</div><div class="pc" style="left:603px;top:512px;color:#80ff80">0</div><div class="pc" style="left:613px;top:512px;color:#80ff80">0</div><div class="pc" style="left:627px;top:512px;color:#8080ff">8</div><div class="a" style="left:645px;top:517px;width:3px;height:1px;background:#006e00"></div><div class="a" style="left:655px;top:517px;width:3px;height:1px;background:#006e00"></div><div class="a" style="left:665px;top:517px;width:3px;height:1px;background:#006e00"></div><div class="a" style="left:680px;top:517px;width:3px;height:1px;background:#006e00"></div><div class="a" style="left:690px;top:517px;width:3px;height:1px;background:#006e00"></div><div class="a" style="left:700px;top:517px;width:3px;height:1px;background:#006e00"></div><div class="a" style="left:714px;top:517px;width:3px;height:1px;background:#006e00"></div><div class="a" style="left:724px;top:517px;width:3px;height:1px;background:#006e00"></div><div class="a" style="left:738px;top:517px;width:3px;height:1px;background:#006e00"></div><div class="a" style="left:752px;top:517px;width:3px;height:1px;background:#006e00"></div><div class="a" style="left:762px;top:517px;width:3px;height:1px;background:#006e00"></div><div class="a" style="left:772px;top:517px;width:3px;height:1px;background:#006e00"></div><div class="rn" style="top:525px;color:#00f000">27</div><div class="a" style="left:48px;top:529px;width:3px;height:1px;background:#006e00"></div><div class="a" style="left:58px;top:529px;width:3px;height:1px;background:#006e00"></div><div class="a" style="left:68px;top:529px;width:3px;height:1px;background:#006e00"></div><div class="a" style="left:82px;top:529px;width:3px;height:1px;background:#006e00"></div><div class="a" style="left:92px;top:529px;width:3px;height:1px;background:#006e00"></div><div class="a" style="left:106px;top:529px;width:3px;height:1px;background:#006e00"></div><div class="a" style="left:120px;top:529px;width:3px;height:1px;background:#006e00"></div><div class="a" style="left:130px;top:529px;width:3px;height:1px;background:#006e00"></div><div class="a" style="left:140px;top:529px;width:3px;height:1px;background:#006e00"></div><div class="a" style="left:154px;top:529px;width:3px;height:1px;background:#006e00"></div><div class="a" style="left:164px;top:529px;width:3px;height:1px;background:#006e00"></div><div class="a" style="left:174px;top:529px;width:3px;height:1px;background:#006e00"></div><div class="a" style="left:188px;top:529px;width:3px;height:1px;background:#006e00"></div><div class="a" style="left:198px;top:529px;width:3px;height:1px;background:#006e00"></div><div class="a" style="left:208px;top:529px;width:3px;height:1px;background:#006e00"></div><div class="a" style="left:222px;top:529px;width:3px;height:1px;background:#006e00"></div><div class="a" style="left:232px;top:529px;width:3px;height:1px;background:#006e00"></div><div class="a" style="left:242px;top:529px;width:3px;height:1px;background:#006e00"></div><div class="a" style="left:257px;top:529px;width:3px;height:1px;background:#006e00"></div><div class="a" style="left:267px;top:529px;width:3px;height:1px;background:#006e00"></div><div class="a" style="left:277px;top:529px;width:3px;height:1px;background:#006e00"></div><div class="a" style="left:291px;top:529px;width:3px;height:1px;background:#006e00"></div><div class="a" style="left:301px;top:529px;width:3px;height:1px;background:#006e00"></div><div class="a" style="left:315px;top:529px;width:3px;height:1px;background:#006e00"></div><div class="a" style="left:329px;top:529px;width:3px;height:1px;background:#006e00"></div><div class="a" style="left:339px;top:529px;width:3px;height:1px;background:#006e00"></div><div class="a" style="left:349px;top:529px;width:3px;height:1px;background:#006e00"></div><div class="a" style="left:363px;top:529px;width:3px;height:1px;background:#006e00"></div><div class="a" style="left:373px;top:529px;width:3px;height:1px;background:#006e00"></div><div class="a" style="left:383px;top:529px;width:3px;height:1px;background:#006e00"></div><div class="a" style="left:397px;top:529px;width:3px;height:1px;background:#006e00"></div><div class="a" style="left:407px;top:529px;width:3px;height:1px;background:#006e00"></div><div class="a" style="left:417px;top:529px;width:3px;height:1px;background:#006e00"></div><div class="a" style="left:431px;top:529px;width:3px;height:1px;background:#006e00"></div><div class="a" style="left:441px;top:529px;width:3px;height:1px;background:#006e00"></div><div class="a" style="left:451px;top:529px;width:3px;height:1px;background:#006e00"></div><div class="a" style="left:466px;top:529px;width:3px;height:1px;background:#006e00"></div><div class="a" style="left:476px;top:529px;width:3px;height:1px;background:#006e00"></div><div class="a" style="left:486px;top:529px;width:3px;height:1px;background:#006e00"></div><div class="a" style="left:500px;top:529px;width:3px;height:1px;background:#006e00"></div><div class="a" style="left:510px;top:529px;width:3px;height:1px;background:#006e00"></div><div class="a" style="left:524px;top:529px;width:3px;height:1px;background:#006e00"></div><div class="a" style="left:538px;top:529px;width:3px;height:1px;background:#006e00"></div><div class="a" style="left:548px;top:529px;width:3px;height:1px;background:#006e00"></div><div class="a" style="left:558px;top:529px;width:3px;height:1px;background:#006e00"></div><div class="a" style="left:573px;top:529px;width:3px;height:1px;background:#006e00"></div><div class="a" style="left:583px;top:529px;width:3px;height:1px;background:#006e00"></div><div class="a" style="left:593px;top:529px;width:3px;height:1px;background:#006e00"></div><div class="a" style="left:607px;top:529px;width:3px;height:1px;background:#006e00"></div><div class="a" style="left:617px;top:529px;width:3px;height:1px;background:#006e00"></div><div class="a" style="left:631px;top:529px;width:3px;height:1px;background:#006e00"></div><div class="a" style="left:645px;top:529px;width:3px;height:1px;background:#006e00"></div><div class="a" style="left:655px;top:529px;width:3px;height:1px;background:#006e00"></div><div class="a" style="left:665px;top:529px;width:3px;height:1px;background:#006e00"></div><div class="a" style="left:680px;top:529px;width:3px;height:1px;background:#006e00"></div><div class="a" style="left:690px;top:529px;width:3px;height:1px;background:#006e00"></div><div class="a" style="left:700px;top:529px;width:3px;height:1px;background:#006e00"></div><div class="a" style="left:714px;top:529px;width:3px;height:1px;background:#006e00"></div><div class="a" style="left:724px;top:529px;width:3px;height:1px;background:#006e00"></div><div class="a" style="left:738px;top:529px;width:3px;height:1px;background:#006e00"></div><div class="a" style="left:752px;top:529px;width:3px;height:1px;background:#006e00"></div><div class="a" style="left:762px;top:529px;width:3px;height:1px;background:#006e00"></div><div class="a" style="left:772px;top:529px;width:3px;height:1px;background:#006e00"></div><div class="rn" style="top:537px;color:#f0f000">28</div><div class="a" style="left:42px;top:536px;width:738px;height:12px;background:#0f0f00;border-top:1px solid #1c1b06"></div><div class="a" style="left:48px;top:541px;width:3px;height:1px;background:#827a18"></div><div class="a" style="left:58px;top:541px;width:3px;height:1px;background:#827a18"></div><div class="a" style="left:68px;top:541px;width:3px;height:1px;background:#827a18"></div><div class="a" style="left:82px;top:541px;width:3px;height:1px;background:#827a18"></div><div class="a" style="left:92px;top:541px;width:3px;height:1px;background:#827a18"></div><div class="pc" style="left:102px;top:536px;color:#8080ff">4</div><div class="a" style="left:120px;top:541px;width:3px;height:1px;background:#827a18"></div><div class="a" style="left:130px;top:541px;width:3px;height:1px;background:#827a18"></div><div class="a" style="left:140px;top:541px;width:3px;height:1px;background:#827a18"></div><div class="a" style="left:154px;top:541px;width:3px;height:1px;background:#827a18"></div><div class="a" style="left:164px;top:541px;width:3px;height:1px;background:#827a18"></div><div class="a" style="left:174px;top:541px;width:3px;height:1px;background:#827a18"></div><div class="a" style="left:188px;top:541px;width:3px;height:1px;background:#827a18"></div><div class="a" style="left:198px;top:541px;width:3px;height:1px;background:#827a18"></div><div class="a" style="left:208px;top:541px;width:3px;height:1px;background:#827a18"></div><div class="a" style="left:222px;top:541px;width:3px;height:1px;background:#827a18"></div><div class="a" style="left:232px;top:541px;width:3px;height:1px;background:#827a18"></div><div class="a" style="left:242px;top:541px;width:3px;height:1px;background:#827a18"></div><div class="pc" style="left:253px;top:536px;color:#f0f000">F</div><div class="pc" style="left:261.5px;top:536px;color:#f0f000">-</div><div class="pc" style="left:273px;top:536px;color:#f0f000">3</div><div class="pc" style="left:287px;top:536px;color:#80ff80">0</div><div class="pc" style="left:297px;top:536px;color:#80ff80">0</div><div class="pc" style="left:311px;top:536px;color:#8080ff">8</div><div class="pc" style="left:325px;top:536px;color:#ff8080">Q</div><div class="pc" style="left:335px;top:536px;color:#f0f000">1</div><div class="pc" style="left:345px;top:536px;color:#f0f000">1</div><div class="a" style="left:363px;top:541px;width:3px;height:1px;background:#827a18"></div><div class="a" style="left:373px;top:541px;width:3px;height:1px;background:#827a18"></div><div class="a" style="left:383px;top:541px;width:3px;height:1px;background:#827a18"></div><div class="a" style="left:397px;top:541px;width:3px;height:1px;background:#827a18"></div><div class="a" style="left:407px;top:541px;width:3px;height:1px;background:#827a18"></div><div class="a" style="left:417px;top:541px;width:3px;height:1px;background:#827a18"></div><div class="a" style="left:431px;top:541px;width:3px;height:1px;background:#827a18"></div><div class="a" style="left:441px;top:541px;width:3px;height:1px;background:#827a18"></div><div class="a" style="left:451px;top:541px;width:3px;height:1px;background:#827a18"></div><div class="pc" style="left:462px;top:536px;color:#f0f000">E</div><div class="pc" style="left:470.5px;top:536px;color:#f0f000">-</div><div class="pc" style="left:482px;top:536px;color:#f0f000">3</div><div class="pc" style="left:496px;top:536px;color:#80ff80">0</div><div class="pc" style="left:506px;top:536px;color:#80ff80">0</div><div class="a" style="left:524px;top:541px;width:3px;height:1px;background:#827a18"></div><div class="a" style="left:538px;top:541px;width:3px;height:1px;background:#827a18"></div><div class="a" style="left:548px;top:541px;width:3px;height:1px;background:#827a18"></div><div class="a" style="left:558px;top:541px;width:3px;height:1px;background:#827a18"></div><div class="pc" style="left:569px;top:536px;color:#f0f000">7</div><div class="pc" style="left:577.5px;top:536px;color:#f0f000">-</div><div class="pc" style="left:589px;top:536px;color:#f0f000">#</div><div class="pc" style="left:603px;top:536px;color:#80ff80">0</div><div class="pc" style="left:613px;top:536px;color:#80ff80">0</div><div class="pc" style="left:627px;top:536px;color:#8080ff">A</div><div class="pc" style="left:641px;top:536px;color:#ff8080">A</div><div class="pc" style="left:651px;top:536px;color:#f0f000">0</div><div class="pc" style="left:661px;top:536px;color:#f0f000">7</div><div class="pc" style="left:676px;top:536px;color:#f0f000">C</div><div class="pc" style="left:686px;top:536px;color:#f0f000">#</div><div class="pc" style="left:696px;top:536px;color:#f0f000">3</div><div class="pc" style="left:710px;top:536px;color:#80ff80">0</div><div class="pc" style="left:720px;top:536px;color:#80ff80">1</div><div class="a" style="left:738px;top:541px;width:3px;height:1px;background:#827a18"></div><div class="pc" style="left:748px;top:536px;color:#ff8080">Z</div><div class="pc" style="left:758px;top:536px;color:#f0f000">0</div><div class="pc" style="left:768px;top:536px;color:#f0f000">0</div><div class="rn" style="top:549px;color:#00f000">29</div><div class="a" style="left:48px;top:553px;width:3px;height:1px;background:#006e00"></div><div class="a" style="left:58px;top:553px;width:3px;height:1px;background:#006e00"></div><div class="a" style="left:68px;top:553px;width:3px;height:1px;background:#006e00"></div><div class="a" style="left:82px;top:553px;width:3px;height:1px;background:#006e00"></div><div class="a" style="left:92px;top:553px;width:3px;height:1px;background:#006e00"></div><div class="a" style="left:106px;top:553px;width:3px;height:1px;background:#006e00"></div><div class="a" style="left:120px;top:553px;width:3px;height:1px;background:#006e00"></div><div class="a" style="left:130px;top:553px;width:3px;height:1px;background:#006e00"></div><div class="a" style="left:140px;top:553px;width:3px;height:1px;background:#006e00"></div><div class="a" style="left:154px;top:553px;width:3px;height:1px;background:#006e00"></div><div class="a" style="left:164px;top:553px;width:3px;height:1px;background:#006e00"></div><div class="a" style="left:174px;top:553px;width:3px;height:1px;background:#006e00"></div><div class="a" style="left:188px;top:553px;width:3px;height:1px;background:#006e00"></div><div class="a" style="left:198px;top:553px;width:3px;height:1px;background:#006e00"></div><div class="a" style="left:208px;top:553px;width:3px;height:1px;background:#006e00"></div><div class="a" style="left:222px;top:553px;width:3px;height:1px;background:#006e00"></div><div class="a" style="left:232px;top:553px;width:3px;height:1px;background:#006e00"></div><div class="a" style="left:242px;top:553px;width:3px;height:1px;background:#006e00"></div><div class="a" style="left:257px;top:553px;width:3px;height:1px;background:#006e00"></div><div class="a" style="left:267px;top:553px;width:3px;height:1px;background:#006e00"></div><div class="a" style="left:277px;top:553px;width:3px;height:1px;background:#006e00"></div><div class="a" style="left:291px;top:553px;width:3px;height:1px;background:#006e00"></div><div class="a" style="left:301px;top:553px;width:3px;height:1px;background:#006e00"></div><div class="a" style="left:315px;top:553px;width:3px;height:1px;background:#006e00"></div><div class="pc" style="left:325px;top:548px;color:#ff8080">4</div><div class="pc" style="left:335px;top:548px;color:#00f000">6</div><div class="pc" style="left:345px;top:548px;color:#00f000">2</div><div class="a" style="left:363px;top:553px;width:3px;height:1px;background:#006e00"></div><div class="a" style="left:373px;top:553px;width:3px;height:1px;background:#006e00"></div><div class="a" style="left:383px;top:553px;width:3px;height:1px;background:#006e00"></div><div class="a" style="left:397px;top:553px;width:3px;height:1px;background:#006e00"></div><div class="a" style="left:407px;top:553px;width:3px;height:1px;background:#006e00"></div><div class="a" style="left:417px;top:553px;width:3px;height:1px;background:#006e00"></div><div class="a" style="left:431px;top:553px;width:3px;height:1px;background:#006e00"></div><div class="a" style="left:441px;top:553px;width:3px;height:1px;background:#006e00"></div><div class="a" style="left:451px;top:553px;width:3px;height:1px;background:#006e00"></div><div class="a" style="left:466px;top:553px;width:3px;height:1px;background:#006e00"></div><div class="a" style="left:476px;top:553px;width:3px;height:1px;background:#006e00"></div><div class="a" style="left:486px;top:553px;width:3px;height:1px;background:#006e00"></div><div class="a" style="left:500px;top:553px;width:3px;height:1px;background:#006e00"></div><div class="a" style="left:510px;top:553px;width:3px;height:1px;background:#006e00"></div><div class="a" style="left:524px;top:553px;width:3px;height:1px;background:#006e00"></div><div class="a" style="left:538px;top:553px;width:3px;height:1px;background:#006e00"></div><div class="a" style="left:548px;top:553px;width:3px;height:1px;background:#006e00"></div><div class="a" style="left:558px;top:553px;width:3px;height:1px;background:#006e00"></div><div class="a" style="left:573px;top:553px;width:3px;height:1px;background:#006e00"></div><div class="a" style="left:583px;top:553px;width:3px;height:1px;background:#006e00"></div><div class="a" style="left:593px;top:553px;width:3px;height:1px;background:#006e00"></div><div class="a" style="left:607px;top:553px;width:3px;height:1px;background:#006e00"></div><div class="a" style="left:617px;top:553px;width:3px;height:1px;background:#006e00"></div><div class="a" style="left:631px;top:553px;width:3px;height:1px;background:#006e00"></div><div class="a" style="left:645px;top:553px;width:3px;height:1px;background:#006e00"></div><div class="a" style="left:655px;top:553px;width:3px;height:1px;background:#006e00"></div><div class="a" style="left:665px;top:553px;width:3px;height:1px;background:#006e00"></div><div class="a" style="left:680px;top:553px;width:3px;height:1px;background:#006e00"></div><div class="a" style="left:690px;top:553px;width:3px;height:1px;background:#006e00"></div><div class="a" style="left:700px;top:553px;width:3px;height:1px;background:#006e00"></div><div class="a" style="left:714px;top:553px;width:3px;height:1px;background:#006e00"></div><div class="a" style="left:724px;top:553px;width:3px;height:1px;background:#006e00"></div><div class="a" style="left:738px;top:553px;width:3px;height:1px;background:#006e00"></div><div class="a" style="left:752px;top:553px;width:3px;height:1px;background:#006e00"></div><div class="a" style="left:762px;top:553px;width:3px;height:1px;background:#006e00"></div><div class="a" style="left:772px;top:553px;width:3px;height:1px;background:#006e00"></div><div class="rn" style="top:561px;color:#00f000">2A</div><div class="pc" style="left:44px;top:560px;color:#00f000">D</div><div class="pc" style="left:52.5px;top:560px;color:#00f000">-</div><div class="pc" style="left:64px;top:560px;color:#00f000">5</div><div class="pc" style="left:78px;top:560px;color:#80ff80">0</div><div class="pc" style="left:88px;top:560px;color:#80ff80">2</div><div class="pc" style="left:102px;top:560px;color:#8080ff">A</div><div class="a" style="left:120px;top:565px;width:3px;height:1px;background:#006e00"></div><div class="a" style="left:130px;top:565px;width:3px;height:1px;background:#006e00"></div><div class="a" style="left:140px;top:565px;width:3px;height:1px;background:#006e00"></div><div class="a" style="left:154px;top:565px;width:3px;height:1px;background:#006e00"></div><div class="a" style="left:164px;top:565px;width:3px;height:1px;background:#006e00"></div><div class="a" style="left:174px;top:565px;width:3px;height:1px;background:#006e00"></div><div class="a" style="left:188px;top:565px;width:3px;height:1px;background:#006e00"></div><div class="a" style="left:198px;top:565px;width:3px;height:1px;background:#006e00"></div><div class="a" style="left:208px;top:565px;width:3px;height:1px;background:#006e00"></div><div class="a" style="left:222px;top:565px;width:3px;height:1px;background:#006e00"></div><div class="a" style="left:232px;top:565px;width:3px;height:1px;background:#006e00"></div><div class="a" style="left:242px;top:565px;width:3px;height:1px;background:#006e00"></div><div class="a" style="left:257px;top:565px;width:3px;height:1px;background:#006e00"></div><div class="a" style="left:267px;top:565px;width:3px;height:1px;background:#006e00"></div><div class="a" style="left:277px;top:565px;width:3px;height:1px;background:#006e00"></div><div class="a" style="left:291px;top:565px;width:3px;height:1px;background:#006e00"></div><div class="a" style="left:301px;top:565px;width:3px;height:1px;background:#006e00"></div><div class="a" style="left:315px;top:565px;width:3px;height:1px;background:#006e00"></div><div class="a" style="left:329px;top:565px;width:3px;height:1px;background:#006e00"></div><div class="a" style="left:339px;top:565px;width:3px;height:1px;background:#006e00"></div><div class="a" style="left:349px;top:565px;width:3px;height:1px;background:#006e00"></div><div class="a" style="left:363px;top:565px;width:3px;height:1px;background:#006e00"></div><div class="a" style="left:373px;top:565px;width:3px;height:1px;background:#006e00"></div><div class="a" style="left:383px;top:565px;width:3px;height:1px;background:#006e00"></div><div class="a" style="left:397px;top:565px;width:3px;height:1px;background:#006e00"></div><div class="a" style="left:407px;top:565px;width:3px;height:1px;background:#006e00"></div><div class="a" style="left:417px;top:565px;width:3px;height:1px;background:#006e00"></div><div class="a" style="left:431px;top:565px;width:3px;height:1px;background:#006e00"></div><div class="a" style="left:441px;top:565px;width:3px;height:1px;background:#006e00"></div><div class="a" style="left:451px;top:565px;width:3px;height:1px;background:#006e00"></div><div class="a" style="left:466px;top:565px;width:3px;height:1px;background:#006e00"></div><div class="a" style="left:476px;top:565px;width:3px;height:1px;background:#006e00"></div><div class="a" style="left:486px;top:565px;width:3px;height:1px;background:#006e00"></div><div class="a" style="left:500px;top:565px;width:3px;height:1px;background:#006e00"></div><div class="a" style="left:510px;top:565px;width:3px;height:1px;background:#006e00"></div><div class="a" style="left:524px;top:565px;width:3px;height:1px;background:#006e00"></div><div class="a" style="left:538px;top:565px;width:3px;height:1px;background:#006e00"></div><div class="a" style="left:548px;top:565px;width:3px;height:1px;background:#006e00"></div><div class="a" style="left:558px;top:565px;width:3px;height:1px;background:#006e00"></div><div class="a" style="left:573px;top:565px;width:3px;height:1px;background:#006e00"></div><div class="a" style="left:583px;top:565px;width:3px;height:1px;background:#006e00"></div><div class="a" style="left:593px;top:565px;width:3px;height:1px;background:#006e00"></div><div class="a" style="left:607px;top:565px;width:3px;height:1px;background:#006e00"></div><div class="a" style="left:617px;top:565px;width:3px;height:1px;background:#006e00"></div><div class="a" style="left:631px;top:565px;width:3px;height:1px;background:#006e00"></div><div class="a" style="left:645px;top:565px;width:3px;height:1px;background:#006e00"></div><div class="a" style="left:655px;top:565px;width:3px;height:1px;background:#006e00"></div><div class="a" style="left:665px;top:565px;width:3px;height:1px;background:#006e00"></div><div class="a" style="left:680px;top:565px;width:3px;height:1px;background:#006e00"></div><div class="a" style="left:690px;top:565px;width:3px;height:1px;background:#006e00"></div><div class="a" style="left:700px;top:565px;width:3px;height:1px;background:#006e00"></div><div class="a" style="left:714px;top:565px;width:3px;height:1px;background:#006e00"></div><div class="a" style="left:724px;top:565px;width:3px;height:1px;background:#006e00"></div><div class="a" style="left:738px;top:565px;width:3px;height:1px;background:#006e00"></div><div class="a" style="left:752px;top:565px;width:3px;height:1px;background:#006e00"></div><div class="a" style="left:762px;top:565px;width:3px;height:1px;background:#006e00"></div><div class="a" style="left:772px;top:565px;width:3px;height:1px;background:#006e00"></div><div class="rn" style="top:573px;color:#00f000">2B</div><div class="a" style="left:48px;top:577px;width:3px;height:1px;background:#006e00"></div><div class="a" style="left:58px;top:577px;width:3px;height:1px;background:#006e00"></div><div class="a" style="left:68px;top:577px;width:3px;height:1px;background:#006e00"></div><div class="a" style="left:82px;top:577px;width:3px;height:1px;background:#006e00"></div><div class="a" style="left:92px;top:577px;width:3px;height:1px;background:#006e00"></div><div class="a" style="left:106px;top:577px;width:3px;height:1px;background:#006e00"></div><div class="a" style="left:120px;top:577px;width:3px;height:1px;background:#006e00"></div><div class="a" style="left:130px;top:577px;width:3px;height:1px;background:#006e00"></div><div class="a" style="left:140px;top:577px;width:3px;height:1px;background:#006e00"></div><div class="a" style="left:154px;top:577px;width:3px;height:1px;background:#006e00"></div><div class="a" style="left:164px;top:577px;width:3px;height:1px;background:#006e00"></div><div class="a" style="left:174px;top:577px;width:3px;height:1px;background:#006e00"></div><div class="a" style="left:188px;top:577px;width:3px;height:1px;background:#006e00"></div><div class="a" style="left:198px;top:577px;width:3px;height:1px;background:#006e00"></div><div class="a" style="left:208px;top:577px;width:3px;height:1px;background:#006e00"></div><div class="a" style="left:222px;top:577px;width:3px;height:1px;background:#006e00"></div><div class="a" style="left:232px;top:577px;width:3px;height:1px;background:#006e00"></div><div class="a" style="left:242px;top:577px;width:3px;height:1px;background:#006e00"></div><div class="a" style="left:257px;top:577px;width:3px;height:1px;background:#006e00"></div><div class="a" style="left:267px;top:577px;width:3px;height:1px;background:#006e00"></div><div class="a" style="left:277px;top:577px;width:3px;height:1px;background:#006e00"></div><div class="a" style="left:291px;top:577px;width:3px;height:1px;background:#006e00"></div><div class="a" style="left:301px;top:577px;width:3px;height:1px;background:#006e00"></div><div class="a" style="left:315px;top:577px;width:3px;height:1px;background:#006e00"></div><div class="a" style="left:329px;top:577px;width:3px;height:1px;background:#006e00"></div><div class="a" style="left:339px;top:577px;width:3px;height:1px;background:#006e00"></div><div class="a" style="left:349px;top:577px;width:3px;height:1px;background:#006e00"></div><div class="a" style="left:363px;top:577px;width:3px;height:1px;background:#006e00"></div><div class="a" style="left:373px;top:577px;width:3px;height:1px;background:#006e00"></div><div class="a" style="left:383px;top:577px;width:3px;height:1px;background:#006e00"></div><div class="a" style="left:397px;top:577px;width:3px;height:1px;background:#006e00"></div><div class="a" style="left:407px;top:577px;width:3px;height:1px;background:#006e00"></div><div class="a" style="left:417px;top:577px;width:3px;height:1px;background:#006e00"></div><div class="a" style="left:431px;top:577px;width:3px;height:1px;background:#006e00"></div><div class="a" style="left:441px;top:577px;width:3px;height:1px;background:#006e00"></div><div class="a" style="left:451px;top:577px;width:3px;height:1px;background:#006e00"></div><div class="a" style="left:468px;top:576px;width:18px;height:3px;background:#00f000"></div><div class="a" style="left:500px;top:577px;width:3px;height:1px;background:#006e00"></div><div class="a" style="left:510px;top:577px;width:3px;height:1px;background:#006e00"></div><div class="a" style="left:524px;top:577px;width:3px;height:1px;background:#006e00"></div><div class="pc" style="left:534px;top:572px;color:#ff8080">G</div><div class="pc" style="left:544px;top:572px;color:#00f000">0</div><div class="pc" style="left:554px;top:572px;color:#00f000">2</div><div class="a" style="left:573px;top:577px;width:3px;height:1px;background:#006e00"></div><div class="a" style="left:583px;top:577px;width:3px;height:1px;background:#006e00"></div><div class="a" style="left:593px;top:577px;width:3px;height:1px;background:#006e00"></div><div class="a" style="left:607px;top:577px;width:3px;height:1px;background:#006e00"></div><div class="a" style="left:617px;top:577px;width:3px;height:1px;background:#006e00"></div><div class="a" style="left:631px;top:577px;width:3px;height:1px;background:#006e00"></div><div class="a" style="left:645px;top:577px;width:3px;height:1px;background:#006e00"></div><div class="a" style="left:655px;top:577px;width:3px;height:1px;background:#006e00"></div><div class="a" style="left:665px;top:577px;width:3px;height:1px;background:#006e00"></div><div class="a" style="left:680px;top:577px;width:3px;height:1px;background:#006e00"></div><div class="a" style="left:690px;top:577px;width:3px;height:1px;background:#006e00"></div><div class="a" style="left:700px;top:577px;width:3px;height:1px;background:#006e00"></div><div class="a" style="left:714px;top:577px;width:3px;height:1px;background:#006e00"></div><div class="a" style="left:724px;top:577px;width:3px;height:1px;background:#006e00"></div><div class="a" style="left:738px;top:577px;width:3px;height:1px;background:#006e00"></div><div class="a" style="left:752px;top:577px;width:3px;height:1px;background:#006e00"></div><div class="a" style="left:762px;top:577px;width:3px;height:1px;background:#006e00"></div><div class="a" style="left:772px;top:577px;width:3px;height:1px;background:#006e00"></div><div class="rn" style="top:585px;color:#f0f000">2C</div><div class="a" style="left:42px;top:584px;width:738px;height:12px;background:#0f0f00;border-top:1px solid #1c1b06"></div><div class="pc" style="left:44px;top:584px;color:#f0f000">E</div><div class="pc" style="left:52.5px;top:584px;color:#f0f000">-</div><div class="pc" style="left:64px;top:584px;color:#f0f000">5</div><div class="pc" style="left:78px;top:584px;color:#80ff80">0</div><div class="pc" style="left:88px;top:584px;color:#80ff80">2</div><div class="a" style="left:106px;top:589px;width:3px;height:1px;background:#827a18"></div><div class="a" style="left:120px;top:589px;width:3px;height:1px;background:#827a18"></div><div class="a" style="left:130px;top:589px;width:3px;height:1px;background:#827a18"></div><div class="a" style="left:140px;top:589px;width:3px;height:1px;background:#827a18"></div><div class="a" style="left:154px;top:589px;width:3px;height:1px;background:#827a18"></div><div class="a" style="left:164px;top:589px;width:3px;height:1px;background:#827a18"></div><div class="a" style="left:174px;top:589px;width:3px;height:1px;background:#827a18"></div><div class="a" style="left:188px;top:589px;width:3px;height:1px;background:#827a18"></div><div class="a" style="left:198px;top:589px;width:3px;height:1px;background:#827a18"></div><div class="a" style="left:208px;top:589px;width:3px;height:1px;background:#827a18"></div><div class="a" style="left:222px;top:589px;width:3px;height:1px;background:#827a18"></div><div class="a" style="left:232px;top:589px;width:3px;height:1px;background:#827a18"></div><div class="a" style="left:242px;top:589px;width:3px;height:1px;background:#827a18"></div><div class="pc" style="left:253px;top:584px;color:#f0f000">F</div><div class="pc" style="left:263px;top:584px;color:#f0f000">#</div><div class="pc" style="left:273px;top:584px;color:#f0f000">2</div><div class="pc" style="left:287px;top:584px;color:#80ff80">0</div><div class="pc" style="left:297px;top:584px;color:#80ff80">0</div><div class="pc" style="left:311px;top:584px;color:#8080ff">8</div><div class="pc" style="left:325px;top:584px;color:#ff8080">4</div><div class="pc" style="left:335px;top:584px;color:#f0f000">0</div><div class="pc" style="left:345px;top:584px;color:#f0f000">0</div><div class="a" style="left:363px;top:589px;width:3px;height:1px;background:#827a18"></div><div class="a" style="left:373px;top:589px;width:3px;height:1px;background:#827a18"></div><div class="a" style="left:383px;top:589px;width:3px;height:1px;background:#827a18"></div><div class="a" style="left:397px;top:589px;width:3px;height:1px;background:#827a18"></div><div class="a" style="left:407px;top:589px;width:3px;height:1px;background:#827a18"></div><div class="a" style="left:417px;top:589px;width:3px;height:1px;background:#827a18"></div><div class="a" style="left:431px;top:589px;width:3px;height:1px;background:#827a18"></div><div class="a" style="left:441px;top:589px;width:3px;height:1px;background:#827a18"></div><div class="a" style="left:451px;top:589px;width:3px;height:1px;background:#827a18"></div><div class="pc" style="left:462px;top:584px;color:#f0f000">C</div><div class="pc" style="left:472px;top:584px;color:#f0f000">#</div><div class="pc" style="left:482px;top:584px;color:#f0f000">3</div><div class="pc" style="left:496px;top:584px;color:#80ff80">0</div><div class="pc" style="left:506px;top:584px;color:#80ff80">0</div><div class="a" style="left:524px;top:589px;width:3px;height:1px;background:#827a18"></div><div class="a" style="left:538px;top:589px;width:3px;height:1px;background:#827a18"></div><div class="a" style="left:548px;top:589px;width:3px;height:1px;background:#827a18"></div><div class="a" style="left:558px;top:589px;width:3px;height:1px;background:#827a18"></div><div class="pc" style="left:569px;top:584px;color:#f0f000">D</div><div class="pc" style="left:577.5px;top:584px;color:#f0f000">-</div><div class="pc" style="left:589px;top:584px;color:#f0f000">#</div><div class="pc" style="left:603px;top:584px;color:#80ff80">0</div><div class="pc" style="left:613px;top:584px;color:#80ff80">0</div><div class="pc" style="left:627px;top:584px;color:#8080ff">8</div><div class="pc" style="left:641px;top:584px;color:#ff8080">A</div><div class="pc" style="left:651px;top:584px;color:#f0f000">0</div><div class="pc" style="left:661px;top:584px;color:#f0f000">A</div><div class="pc" style="left:676px;top:584px;color:#f0f000">C</div><div class="pc" style="left:684.5px;top:584px;color:#f0f000">-</div><div class="pc" style="left:696px;top:584px;color:#f0f000">3</div><div class="pc" style="left:710px;top:584px;color:#80ff80">0</div><div class="pc" style="left:720px;top:584px;color:#80ff80">1</div><div class="a" style="left:738px;top:589px;width:3px;height:1px;background:#827a18"></div><div class="pc" style="left:748px;top:584px;color:#ff8080">Z</div><div class="pc" style="left:758px;top:584px;color:#f0f000">0</div><div class="pc" style="left:768px;top:584px;color:#f0f000">0</div><div class="rn" style="top:597px;color:#00f000">2D</div><div class="a" style="left:48px;top:601px;width:3px;height:1px;background:#006e00"></div><div class="a" style="left:58px;top:601px;width:3px;height:1px;background:#006e00"></div><div class="a" style="left:68px;top:601px;width:3px;height:1px;background:#006e00"></div><div class="a" style="left:82px;top:601px;width:3px;height:1px;background:#006e00"></div><div class="a" style="left:92px;top:601px;width:3px;height:1px;background:#006e00"></div><div class="a" style="left:106px;top:601px;width:3px;height:1px;background:#006e00"></div><div class="a" style="left:120px;top:601px;width:3px;height:1px;background:#006e00"></div><div class="a" style="left:130px;top:601px;width:3px;height:1px;background:#006e00"></div><div class="a" style="left:140px;top:601px;width:3px;height:1px;background:#006e00"></div><div class="a" style="left:154px;top:601px;width:3px;height:1px;background:#006e00"></div><div class="a" style="left:164px;top:601px;width:3px;height:1px;background:#006e00"></div><div class="a" style="left:174px;top:601px;width:3px;height:1px;background:#006e00"></div><div class="a" style="left:188px;top:601px;width:3px;height:1px;background:#006e00"></div><div class="a" style="left:198px;top:601px;width:3px;height:1px;background:#006e00"></div><div class="a" style="left:208px;top:601px;width:3px;height:1px;background:#006e00"></div><div class="a" style="left:222px;top:601px;width:3px;height:1px;background:#006e00"></div><div class="a" style="left:232px;top:601px;width:3px;height:1px;background:#006e00"></div><div class="a" style="left:242px;top:601px;width:3px;height:1px;background:#006e00"></div><div class="a" style="left:257px;top:601px;width:3px;height:1px;background:#006e00"></div><div class="a" style="left:267px;top:601px;width:3px;height:1px;background:#006e00"></div><div class="a" style="left:277px;top:601px;width:3px;height:1px;background:#006e00"></div><div class="a" style="left:291px;top:601px;width:3px;height:1px;background:#006e00"></div><div class="a" style="left:301px;top:601px;width:3px;height:1px;background:#006e00"></div><div class="pc" style="left:311px;top:596px;color:#8080ff">2</div><div class="pc" style="left:325px;top:596px;color:#ff8080">G</div><div class="pc" style="left:335px;top:596px;color:#00f000">0</div><div class="pc" style="left:345px;top:596px;color:#00f000">2</div><div class="a" style="left:363px;top:601px;width:3px;height:1px;background:#006e00"></div><div class="a" style="left:373px;top:601px;width:3px;height:1px;background:#006e00"></div><div class="a" style="left:383px;top:601px;width:3px;height:1px;background:#006e00"></div><div class="a" style="left:397px;top:601px;width:3px;height:1px;background:#006e00"></div><div class="a" style="left:407px;top:601px;width:3px;height:1px;background:#006e00"></div><div class="a" style="left:417px;top:601px;width:3px;height:1px;background:#006e00"></div><div class="a" style="left:431px;top:601px;width:3px;height:1px;background:#006e00"></div><div class="a" style="left:441px;top:601px;width:3px;height:1px;background:#006e00"></div><div class="a" style="left:451px;top:601px;width:3px;height:1px;background:#006e00"></div><div class="a" style="left:468px;top:600px;width:18px;height:3px;background:#00f000"></div><div class="a" style="left:500px;top:601px;width:3px;height:1px;background:#006e00"></div><div class="a" style="left:510px;top:601px;width:3px;height:1px;background:#006e00"></div><div class="a" style="left:524px;top:601px;width:3px;height:1px;background:#006e00"></div><div class="pc" style="left:534px;top:596px;color:#ff8080">G</div><div class="pc" style="left:544px;top:596px;color:#00f000">0</div><div class="pc" style="left:554px;top:596px;color:#00f000">2</div><div class="a" style="left:573px;top:601px;width:3px;height:1px;background:#006e00"></div><div class="a" style="left:583px;top:601px;width:3px;height:1px;background:#006e00"></div><div class="a" style="left:593px;top:601px;width:3px;height:1px;background:#006e00"></div><div class="a" style="left:607px;top:601px;width:3px;height:1px;background:#006e00"></div><div class="a" style="left:617px;top:601px;width:3px;height:1px;background:#006e00"></div><div class="a" style="left:631px;top:601px;width:3px;height:1px;background:#006e00"></div><div class="a" style="left:645px;top:601px;width:3px;height:1px;background:#006e00"></div><div class="a" style="left:655px;top:601px;width:3px;height:1px;background:#006e00"></div><div class="a" style="left:665px;top:601px;width:3px;height:1px;background:#006e00"></div><div class="a" style="left:680px;top:601px;width:3px;height:1px;background:#006e00"></div><div class="a" style="left:690px;top:601px;width:3px;height:1px;background:#006e00"></div><div class="a" style="left:700px;top:601px;width:3px;height:1px;background:#006e00"></div><div class="a" style="left:714px;top:601px;width:3px;height:1px;background:#006e00"></div><div class="a" style="left:724px;top:601px;width:3px;height:1px;background:#006e00"></div><div class="a" style="left:738px;top:601px;width:3px;height:1px;background:#006e00"></div><div class="a" style="left:752px;top:601px;width:3px;height:1px;background:#006e00"></div><div class="a" style="left:762px;top:601px;width:3px;height:1px;background:#006e00"></div><div class="a" style="left:772px;top:601px;width:3px;height:1px;background:#006e00"></div><div class="rn" style="top:609px;color:#00f000">2E</div><div class="pc" style="left:44px;top:608px;color:#00f000">B</div><div class="pc" style="left:52.5px;top:608px;color:#00f000">-</div><div class="pc" style="left:64px;top:608px;color:#00f000">4</div><div class="pc" style="left:78px;top:608px;color:#80ff80">0</div><div class="pc" style="left:88px;top:608px;color:#80ff80">2</div><div class="a" style="left:106px;top:613px;width:3px;height:1px;background:#006e00"></div><div class="a" style="left:120px;top:613px;width:3px;height:1px;background:#006e00"></div><div class="a" style="left:130px;top:613px;width:3px;height:1px;background:#006e00"></div><div class="a" style="left:140px;top:613px;width:3px;height:1px;background:#006e00"></div><div class="a" style="left:154px;top:613px;width:3px;height:1px;background:#006e00"></div><div class="a" style="left:164px;top:613px;width:3px;height:1px;background:#006e00"></div><div class="a" style="left:174px;top:613px;width:3px;height:1px;background:#006e00"></div><div class="a" style="left:188px;top:613px;width:3px;height:1px;background:#006e00"></div><div class="a" style="left:198px;top:613px;width:3px;height:1px;background:#006e00"></div><div class="a" style="left:208px;top:613px;width:3px;height:1px;background:#006e00"></div><div class="a" style="left:222px;top:613px;width:3px;height:1px;background:#006e00"></div><div class="a" style="left:232px;top:613px;width:3px;height:1px;background:#006e00"></div><div class="a" style="left:242px;top:613px;width:3px;height:1px;background:#006e00"></div><div class="pc" style="left:253px;top:608px;color:#00f000">A</div><div class="pc" style="left:263px;top:608px;color:#00f000">#</div><div class="pc" style="left:273px;top:608px;color:#00f000">2</div><div class="pc" style="left:287px;top:608px;color:#80ff80">0</div><div class="pc" style="left:297px;top:608px;color:#80ff80">0</div><div class="pc" style="left:311px;top:608px;color:#8080ff">8</div><div class="a" style="left:329px;top:613px;width:3px;height:1px;background:#006e00"></div><div class="a" style="left:339px;top:613px;width:3px;height:1px;background:#006e00"></div><div class="a" style="left:349px;top:613px;width:3px;height:1px;background:#006e00"></div><div class="a" style="left:363px;top:613px;width:3px;height:1px;background:#006e00"></div><div class="a" style="left:373px;top:613px;width:3px;height:1px;background:#006e00"></div><div class="a" style="left:383px;top:613px;width:3px;height:1px;background:#006e00"></div><div class="a" style="left:397px;top:613px;width:3px;height:1px;background:#006e00"></div><div class="a" style="left:407px;top:613px;width:3px;height:1px;background:#006e00"></div><div class="a" style="left:417px;top:613px;width:3px;height:1px;background:#006e00"></div><div class="a" style="left:431px;top:613px;width:3px;height:1px;background:#006e00"></div><div class="a" style="left:441px;top:613px;width:3px;height:1px;background:#006e00"></div><div class="a" style="left:451px;top:613px;width:3px;height:1px;background:#006e00"></div><div class="pc" style="left:462px;top:608px;color:#00f000">E</div><div class="pc" style="left:470.5px;top:608px;color:#00f000">-</div><div class="pc" style="left:482px;top:608px;color:#00f000">3</div><div class="pc" style="left:496px;top:608px;color:#80ff80">0</div><div class="pc" style="left:506px;top:608px;color:#80ff80">0</div><div class="a" style="left:524px;top:613px;width:3px;height:1px;background:#006e00"></div><div class="a" style="left:538px;top:613px;width:3px;height:1px;background:#006e00"></div><div class="a" style="left:548px;top:613px;width:3px;height:1px;background:#006e00"></div><div class="a" style="left:558px;top:613px;width:3px;height:1px;background:#006e00"></div><div class="pc" style="left:569px;top:608px;color:#00f000">D</div><div class="pc" style="left:577.5px;top:608px;color:#00f000">-</div><div class="pc" style="left:589px;top:608px;color:#00f000">#</div><div class="pc" style="left:603px;top:608px;color:#80ff80">0</div><div class="pc" style="left:613px;top:608px;color:#80ff80">0</div><div class="pc" style="left:627px;top:608px;color:#8080ff">8</div><div class="a" style="left:645px;top:613px;width:3px;height:1px;background:#006e00"></div><div class="a" style="left:655px;top:613px;width:3px;height:1px;background:#006e00"></div><div class="a" style="left:665px;top:613px;width:3px;height:1px;background:#006e00"></div><div class="a" style="left:680px;top:613px;width:3px;height:1px;background:#006e00"></div><div class="a" style="left:690px;top:613px;width:3px;height:1px;background:#006e00"></div><div class="a" style="left:700px;top:613px;width:3px;height:1px;background:#006e00"></div><div class="a" style="left:714px;top:613px;width:3px;height:1px;background:#006e00"></div><div class="a" style="left:724px;top:613px;width:3px;height:1px;background:#006e00"></div><div class="a" style="left:738px;top:613px;width:3px;height:1px;background:#006e00"></div><div class="a" style="left:752px;top:613px;width:3px;height:1px;background:#006e00"></div><div class="a" style="left:762px;top:613px;width:3px;height:1px;background:#006e00"></div><div class="a" style="left:772px;top:613px;width:3px;height:1px;background:#006e00"></div><div class="rn" style="top:621px;color:#00f000">2F</div><div class="a" style="left:48px;top:625px;width:3px;height:1px;background:#006e00"></div><div class="a" style="left:58px;top:625px;width:3px;height:1px;background:#006e00"></div><div class="a" style="left:68px;top:625px;width:3px;height:1px;background:#006e00"></div><div class="a" style="left:82px;top:625px;width:3px;height:1px;background:#006e00"></div><div class="a" style="left:92px;top:625px;width:3px;height:1px;background:#006e00"></div><div class="a" style="left:106px;top:625px;width:3px;height:1px;background:#006e00"></div><div class="a" style="left:120px;top:625px;width:3px;height:1px;background:#006e00"></div><div class="a" style="left:130px;top:625px;width:3px;height:1px;background:#006e00"></div><div class="a" style="left:140px;top:625px;width:3px;height:1px;background:#006e00"></div><div class="a" style="left:154px;top:625px;width:3px;height:1px;background:#006e00"></div><div class="a" style="left:164px;top:625px;width:3px;height:1px;background:#006e00"></div><div class="a" style="left:174px;top:625px;width:3px;height:1px;background:#006e00"></div><div class="a" style="left:188px;top:625px;width:3px;height:1px;background:#006e00"></div><div class="a" style="left:198px;top:625px;width:3px;height:1px;background:#006e00"></div><div class="a" style="left:208px;top:625px;width:3px;height:1px;background:#006e00"></div><div class="a" style="left:222px;top:625px;width:3px;height:1px;background:#006e00"></div><div class="a" style="left:232px;top:625px;width:3px;height:1px;background:#006e00"></div><div class="a" style="left:242px;top:625px;width:3px;height:1px;background:#006e00"></div><div class="a" style="left:257px;top:625px;width:3px;height:1px;background:#006e00"></div><div class="a" style="left:267px;top:625px;width:3px;height:1px;background:#006e00"></div><div class="a" style="left:277px;top:625px;width:3px;height:1px;background:#006e00"></div><div class="a" style="left:291px;top:625px;width:3px;height:1px;background:#006e00"></div><div class="a" style="left:301px;top:625px;width:3px;height:1px;background:#006e00"></div><div class="pc" style="left:311px;top:620px;color:#8080ff">2</div><div class="pc" style="left:325px;top:620px;color:#ff8080">G</div><div class="pc" style="left:335px;top:620px;color:#00f000">0</div><div class="pc" style="left:345px;top:620px;color:#00f000">2</div><div class="a" style="left:363px;top:625px;width:3px;height:1px;background:#006e00"></div><div class="a" style="left:373px;top:625px;width:3px;height:1px;background:#006e00"></div><div class="a" style="left:383px;top:625px;width:3px;height:1px;background:#006e00"></div><div class="a" style="left:397px;top:625px;width:3px;height:1px;background:#006e00"></div><div class="a" style="left:407px;top:625px;width:3px;height:1px;background:#006e00"></div><div class="a" style="left:417px;top:625px;width:3px;height:1px;background:#006e00"></div><div class="a" style="left:431px;top:625px;width:3px;height:1px;background:#006e00"></div><div class="a" style="left:441px;top:625px;width:3px;height:1px;background:#006e00"></div><div class="a" style="left:451px;top:625px;width:3px;height:1px;background:#006e00"></div><div class="a" style="left:468px;top:624px;width:18px;height:3px;background:#00f000"></div><div class="a" style="left:500px;top:625px;width:3px;height:1px;background:#006e00"></div><div class="a" style="left:510px;top:625px;width:3px;height:1px;background:#006e00"></div><div class="a" style="left:524px;top:625px;width:3px;height:1px;background:#006e00"></div><div class="pc" style="left:534px;top:620px;color:#ff8080">G</div><div class="pc" style="left:544px;top:620px;color:#00f000">0</div><div class="pc" style="left:554px;top:620px;color:#00f000">2</div><div class="a" style="left:573px;top:625px;width:3px;height:1px;background:#006e00"></div><div class="a" style="left:583px;top:625px;width:3px;height:1px;background:#006e00"></div><div class="a" style="left:593px;top:625px;width:3px;height:1px;background:#006e00"></div><div class="a" style="left:607px;top:625px;width:3px;height:1px;background:#006e00"></div><div class="a" style="left:617px;top:625px;width:3px;height:1px;background:#006e00"></div><div class="a" style="left:631px;top:625px;width:3px;height:1px;background:#006e00"></div><div class="a" style="left:645px;top:625px;width:3px;height:1px;background:#006e00"></div><div class="a" style="left:655px;top:625px;width:3px;height:1px;background:#006e00"></div><div class="a" style="left:665px;top:625px;width:3px;height:1px;background:#006e00"></div><div class="a" style="left:680px;top:625px;width:3px;height:1px;background:#006e00"></div><div class="a" style="left:690px;top:625px;width:3px;height:1px;background:#006e00"></div><div class="a" style="left:700px;top:625px;width:3px;height:1px;background:#006e00"></div><div class="a" style="left:714px;top:625px;width:3px;height:1px;background:#006e00"></div><div class="a" style="left:724px;top:625px;width:3px;height:1px;background:#006e00"></div><div class="a" style="left:738px;top:625px;width:3px;height:1px;background:#006e00"></div><div class="a" style="left:752px;top:625px;width:3px;height:1px;background:#006e00"></div><div class="a" style="left:762px;top:625px;width:3px;height:1px;background:#006e00"></div><div class="a" style="left:772px;top:625px;width:3px;height:1px;background:#006e00"></div><div class="rn" style="top:633px;color:#ffff60">30</div><div class="a" style="left:42px;top:632px;width:738px;height:12px;background:#201e00;border-top:1px solid #302c08"></div><div class="pc" style="left:44px;top:632px;color:#ffff60">F</div><div class="pc" style="left:54px;top:632px;color:#ffff60">#</div><div class="pc" style="left:64px;top:632px;color:#ffff60">5</div><div class="pc" style="left:78px;top:632px;color:#80ff80">0</div><div class="pc" style="left:88px;top:632px;color:#80ff80">2</div><div class="a" style="left:106px;top:637px;width:3px;height:1px;background:#968e38"></div><div class="a" style="left:120px;top:637px;width:3px;height:1px;background:#968e38"></div><div class="a" style="left:130px;top:637px;width:3px;height:1px;background:#968e38"></div><div class="a" style="left:140px;top:637px;width:3px;height:1px;background:#968e38"></div><div class="a" style="left:154px;top:637px;width:3px;height:1px;background:#968e38"></div><div class="a" style="left:164px;top:637px;width:3px;height:1px;background:#968e38"></div><div class="a" style="left:174px;top:637px;width:3px;height:1px;background:#968e38"></div><div class="a" style="left:188px;top:637px;width:3px;height:1px;background:#968e38"></div><div class="a" style="left:198px;top:637px;width:3px;height:1px;background:#968e38"></div><div class="a" style="left:208px;top:637px;width:3px;height:1px;background:#968e38"></div><div class="a" style="left:222px;top:637px;width:3px;height:1px;background:#968e38"></div><div class="a" style="left:232px;top:637px;width:3px;height:1px;background:#968e38"></div><div class="a" style="left:242px;top:637px;width:3px;height:1px;background:#968e38"></div><div class="pc" style="left:253px;top:632px;color:#ffff60">C</div><div class="pc" style="left:263px;top:632px;color:#ffff60">#</div><div class="pc" style="left:273px;top:632px;color:#ffff60">3</div><div class="pc" style="left:287px;top:632px;color:#80ff80">0</div><div class="pc" style="left:297px;top:632px;color:#80ff80">0</div><div class="pc" style="left:311px;top:632px;color:#8080ff">8</div><div class="a" style="left:329px;top:637px;width:3px;height:1px;background:#968e38"></div><div class="a" style="left:339px;top:637px;width:3px;height:1px;background:#968e38"></div><div class="a" style="left:349px;top:637px;width:3px;height:1px;background:#968e38"></div><div class="a" style="left:363px;top:637px;width:3px;height:1px;background:#968e38"></div><div class="a" style="left:373px;top:637px;width:3px;height:1px;background:#968e38"></div><div class="a" style="left:383px;top:637px;width:3px;height:1px;background:#968e38"></div><div class="a" style="left:397px;top:637px;width:3px;height:1px;background:#968e38"></div><div class="a" style="left:407px;top:637px;width:3px;height:1px;background:#968e38"></div><div class="a" style="left:417px;top:637px;width:3px;height:1px;background:#968e38"></div><div class="a" style="left:431px;top:637px;width:3px;height:1px;background:#968e38"></div><div class="a" style="left:441px;top:637px;width:3px;height:1px;background:#968e38"></div><div class="a" style="left:451px;top:637px;width:3px;height:1px;background:#968e38"></div><div class="pc" style="left:462px;top:632px;color:#ffff60">F</div><div class="pc" style="left:472px;top:632px;color:#ffff60">#</div><div class="pc" style="left:482px;top:632px;color:#ffff60">3</div><div class="pc" style="left:496px;top:632px;color:#80ff80">0</div><div class="pc" style="left:506px;top:632px;color:#80ff80">0</div><div class="a" style="left:524px;top:637px;width:3px;height:1px;background:#968e38"></div><div class="a" style="left:538px;top:637px;width:3px;height:1px;background:#968e38"></div><div class="a" style="left:548px;top:637px;width:3px;height:1px;background:#968e38"></div><div class="a" style="left:558px;top:637px;width:3px;height:1px;background:#968e38"></div><div class="pc" style="left:569px;top:632px;color:#ffff60">D</div><div class="pc" style="left:577.5px;top:632px;color:#ffff60">-</div><div class="pc" style="left:589px;top:632px;color:#ffff60">#</div><div class="pc" style="left:603px;top:632px;color:#80ff80">0</div><div class="pc" style="left:613px;top:632px;color:#80ff80">0</div><div class="pc" style="left:627px;top:632px;color:#8080ff">8</div><div class="a" style="left:645px;top:637px;width:3px;height:1px;background:#968e38"></div><div class="a" style="left:655px;top:637px;width:3px;height:1px;background:#968e38"></div><div class="a" style="left:665px;top:637px;width:3px;height:1px;background:#968e38"></div><div class="pc" style="left:676px;top:632px;color:#ffff60">C</div><div class="pc" style="left:684.5px;top:632px;color:#ffff60">-</div><div class="pc" style="left:696px;top:632px;color:#ffff60">3</div><div class="pc" style="left:710px;top:632px;color:#80ff80">0</div><div class="pc" style="left:720px;top:632px;color:#80ff80">1</div><div class="a" style="left:738px;top:637px;width:3px;height:1px;background:#968e38"></div><div class="pc" style="left:748px;top:632px;color:#ff8080">Z</div><div class="pc" style="left:758px;top:632px;color:#ffff60">0</div><div class="pc" style="left:768px;top:632px;color:#ffff60">0</div><div class="rn" style="top:645px;color:#00f000">31</div><div class="a" style="left:42px;top:644px;width:738px;height:12px;background:linear-gradient(#36288e,#281e7c 45%,#1e165e)"></div><div class="a" style="left:44px;top:644px;width:30px;height:12px;background:linear-gradient(#8a8a8a,#6a6a6a);border-left:1px solid #c0c0c0"></div><div class="a" style="left:48px;top:649px;width:3px;height:1px;background:#006e00"></div><div class="a" style="left:58px;top:649px;width:3px;height:1px;background:#006e00"></div><div class="a" style="left:68px;top:649px;width:3px;height:1px;background:#006e00"></div><div class="a" style="left:82px;top:649px;width:3px;height:1px;background:#006e00"></div><div class="a" style="left:92px;top:649px;width:3px;height:1px;background:#006e00"></div><div class="a" style="left:106px;top:649px;width:3px;height:1px;background:#006e00"></div><div class="a" style="left:120px;top:649px;width:3px;height:1px;background:#006e00"></div><div class="a" style="left:130px;top:649px;width:3px;height:1px;background:#006e00"></div><div class="a" style="left:140px;top:649px;width:3px;height:1px;background:#006e00"></div><div class="a" style="left:154px;top:649px;width:3px;height:1px;background:#006e00"></div><div class="a" style="left:164px;top:649px;width:3px;height:1px;background:#006e00"></div><div class="a" style="left:174px;top:649px;width:3px;height:1px;background:#006e00"></div><div class="a" style="left:188px;top:649px;width:3px;height:1px;background:#006e00"></div><div class="a" style="left:198px;top:649px;width:3px;height:1px;background:#006e00"></div><div class="a" style="left:208px;top:649px;width:3px;height:1px;background:#006e00"></div><div class="a" style="left:222px;top:649px;width:3px;height:1px;background:#006e00"></div><div class="a" style="left:232px;top:649px;width:3px;height:1px;background:#006e00"></div><div class="a" style="left:242px;top:649px;width:3px;height:1px;background:#006e00"></div><div class="a" style="left:257px;top:649px;width:3px;height:1px;background:#006e00"></div><div class="a" style="left:267px;top:649px;width:3px;height:1px;background:#006e00"></div><div class="a" style="left:277px;top:649px;width:3px;height:1px;background:#006e00"></div><div class="a" style="left:291px;top:649px;width:3px;height:1px;background:#006e00"></div><div class="a" style="left:301px;top:649px;width:3px;height:1px;background:#006e00"></div><div class="pc" style="left:311px;top:644px;color:#8080ff">2</div><div class="pc" style="left:325px;top:644px;color:#ff8080">G</div><div class="pc" style="left:335px;top:644px;color:#00f000">0</div><div class="pc" style="left:345px;top:644px;color:#00f000">2</div><div class="a" style="left:363px;top:649px;width:3px;height:1px;background:#006e00"></div><div class="a" style="left:373px;top:649px;width:3px;height:1px;background:#006e00"></div><div class="a" style="left:383px;top:649px;width:3px;height:1px;background:#006e00"></div><div class="a" style="left:397px;top:649px;width:3px;height:1px;background:#006e00"></div><div class="a" style="left:407px;top:649px;width:3px;height:1px;background:#006e00"></div><div class="a" style="left:417px;top:649px;width:3px;height:1px;background:#006e00"></div><div class="a" style="left:431px;top:649px;width:3px;height:1px;background:#006e00"></div><div class="a" style="left:441px;top:649px;width:3px;height:1px;background:#006e00"></div><div class="a" style="left:451px;top:649px;width:3px;height:1px;background:#006e00"></div><div class="a" style="left:466px;top:649px;width:3px;height:1px;background:#006e00"></div><div class="a" style="left:476px;top:649px;width:3px;height:1px;background:#006e00"></div><div class="a" style="left:486px;top:649px;width:3px;height:1px;background:#006e00"></div><div class="a" style="left:500px;top:649px;width:3px;height:1px;background:#006e00"></div><div class="a" style="left:510px;top:649px;width:3px;height:1px;background:#006e00"></div><div class="a" style="left:524px;top:649px;width:3px;height:1px;background:#006e00"></div><div class="a" style="left:538px;top:649px;width:3px;height:1px;background:#006e00"></div><div class="a" style="left:548px;top:649px;width:3px;height:1px;background:#006e00"></div><div class="a" style="left:558px;top:649px;width:3px;height:1px;background:#006e00"></div><div class="pc" style="left:569px;top:644px;color:#00f000">0</div><div class="pc" style="left:577.5px;top:644px;color:#00f000">-</div><div class="pc" style="left:589px;top:644px;color:#00f000">#</div><div class="pc" style="left:603px;top:644px;color:#80ff80">0</div><div class="pc" style="left:613px;top:644px;color:#80ff80">0</div><div class="pc" style="left:627px;top:644px;color:#8080ff">8</div><div class="pc" style="left:641px;top:644px;color:#ff8080">A</div><div class="pc" style="left:651px;top:644px;color:#00f000">0</div><div class="pc" style="left:661px;top:644px;color:#00f000">C</div><div class="a" style="left:680px;top:649px;width:3px;height:1px;background:#006e00"></div><div class="a" style="left:690px;top:649px;width:3px;height:1px;background:#006e00"></div><div class="a" style="left:700px;top:649px;width:3px;height:1px;background:#006e00"></div><div class="a" style="left:714px;top:649px;width:3px;height:1px;background:#006e00"></div><div class="a" style="left:724px;top:649px;width:3px;height:1px;background:#006e00"></div><div class="a" style="left:738px;top:649px;width:3px;height:1px;background:#006e00"></div><div class="a" style="left:752px;top:649px;width:3px;height:1px;background:#006e00"></div><div class="a" style="left:762px;top:649px;width:3px;height:1px;background:#006e00"></div><div class="a" style="left:772px;top:649px;width:3px;height:1px;background:#006e00"></div><div class="rn" style="top:657px;color:#00f000">32</div><div class="pc" style="left:44px;top:656px;color:#00f000">E</div><div class="pc" style="left:52.5px;top:656px;color:#00f000">-</div><div class="pc" style="left:64px;top:656px;color:#00f000">5</div><div class="pc" style="left:78px;top:656px;color:#80ff80">0</div><div class="pc" style="left:88px;top:656px;color:#80ff80">2</div><div class="a" style="left:106px;top:661px;width:3px;height:1px;background:#006e00"></div><div class="a" style="left:120px;top:661px;width:3px;height:1px;background:#006e00"></div><div class="a" style="left:130px;top:661px;width:3px;height:1px;background:#006e00"></div><div class="a" style="left:140px;top:661px;width:3px;height:1px;background:#006e00"></div><div class="a" style="left:154px;top:661px;width:3px;height:1px;background:#006e00"></div><div class="a" style="left:164px;top:661px;width:3px;height:1px;background:#006e00"></div><div class="a" style="left:174px;top:661px;width:3px;height:1px;background:#006e00"></div><div class="a" style="left:188px;top:661px;width:3px;height:1px;background:#006e00"></div><div class="a" style="left:198px;top:661px;width:3px;height:1px;background:#006e00"></div><div class="a" style="left:208px;top:661px;width:3px;height:1px;background:#006e00"></div><div class="a" style="left:222px;top:661px;width:3px;height:1px;background:#006e00"></div><div class="a" style="left:232px;top:661px;width:3px;height:1px;background:#006e00"></div><div class="a" style="left:242px;top:661px;width:3px;height:1px;background:#006e00"></div><div class="a" style="left:257px;top:661px;width:3px;height:1px;background:#006e00"></div><div class="a" style="left:267px;top:661px;width:3px;height:1px;background:#006e00"></div><div class="a" style="left:277px;top:661px;width:3px;height:1px;background:#006e00"></div><div class="a" style="left:291px;top:661px;width:3px;height:1px;background:#006e00"></div><div class="a" style="left:301px;top:661px;width:3px;height:1px;background:#006e00"></div><div class="a" style="left:315px;top:661px;width:3px;height:1px;background:#006e00"></div><div class="a" style="left:329px;top:661px;width:3px;height:1px;background:#006e00"></div><div class="a" style="left:339px;top:661px;width:3px;height:1px;background:#006e00"></div><div class="a" style="left:349px;top:661px;width:3px;height:1px;background:#006e00"></div><div class="a" style="left:363px;top:661px;width:3px;height:1px;background:#006e00"></div><div class="a" style="left:373px;top:661px;width:3px;height:1px;background:#006e00"></div><div class="a" style="left:383px;top:661px;width:3px;height:1px;background:#006e00"></div><div class="a" style="left:397px;top:661px;width:3px;height:1px;background:#006e00"></div><div class="a" style="left:407px;top:661px;width:3px;height:1px;background:#006e00"></div><div class="a" style="left:417px;top:661px;width:3px;height:1px;background:#006e00"></div><div class="a" style="left:431px;top:661px;width:3px;height:1px;background:#006e00"></div><div class="a" style="left:441px;top:661px;width:3px;height:1px;background:#006e00"></div><div class="a" style="left:451px;top:661px;width:3px;height:1px;background:#006e00"></div><div class="a" style="left:468px;top:660px;width:18px;height:3px;background:#00f000"></div><div class="a" style="left:500px;top:661px;width:3px;height:1px;background:#006e00"></div><div class="a" style="left:510px;top:661px;width:3px;height:1px;background:#006e00"></div><div class="a" style="left:524px;top:661px;width:3px;height:1px;background:#006e00"></div><div class="a" style="left:538px;top:661px;width:3px;height:1px;background:#006e00"></div><div class="a" style="left:548px;top:661px;width:3px;height:1px;background:#006e00"></div><div class="a" style="left:558px;top:661px;width:3px;height:1px;background:#006e00"></div><div class="a" style="left:573px;top:661px;width:3px;height:1px;background:#006e00"></div><div class="a" style="left:583px;top:661px;width:3px;height:1px;background:#006e00"></div><div class="a" style="left:593px;top:661px;width:3px;height:1px;background:#006e00"></div><div class="a" style="left:607px;top:661px;width:3px;height:1px;background:#006e00"></div><div class="a" style="left:617px;top:661px;width:3px;height:1px;background:#006e00"></div><div class="a" style="left:631px;top:661px;width:3px;height:1px;background:#006e00"></div><div class="a" style="left:645px;top:661px;width:3px;height:1px;background:#006e00"></div><div class="a" style="left:655px;top:661px;width:3px;height:1px;background:#006e00"></div><div class="a" style="left:665px;top:661px;width:3px;height:1px;background:#006e00"></div><div class="pc" style="left:676px;top:656px;color:#00f000">C</div><div class="pc" style="left:684.5px;top:656px;color:#00f000">-</div><div class="pc" style="left:696px;top:656px;color:#00f000">3</div><div class="pc" style="left:710px;top:656px;color:#80ff80">0</div><div class="pc" style="left:720px;top:656px;color:#80ff80">1</div><div class="a" style="left:738px;top:661px;width:3px;height:1px;background:#006e00"></div><div class="pc" style="left:748px;top:656px;color:#ff8080">Z</div><div class="pc" style="left:758px;top:656px;color:#00f000">0</div><div class="pc" style="left:768px;top:656px;color:#00f000">0</div><div class="rn" style="top:669px;color:#00f000">33</div><div class="a" style="left:48px;top:673px;width:3px;height:1px;background:#006e00"></div><div class="a" style="left:58px;top:673px;width:3px;height:1px;background:#006e00"></div><div class="a" style="left:68px;top:673px;width:3px;height:1px;background:#006e00"></div><div class="a" style="left:82px;top:673px;width:3px;height:1px;background:#006e00"></div><div class="a" style="left:92px;top:673px;width:3px;height:1px;background:#006e00"></div><div class="a" style="left:106px;top:673px;width:3px;height:1px;background:#006e00"></div><div class="a" style="left:120px;top:673px;width:3px;height:1px;background:#006e00"></div><div class="a" style="left:130px;top:673px;width:3px;height:1px;background:#006e00"></div><div class="a" style="left:140px;top:673px;width:3px;height:1px;background:#006e00"></div><div class="a" style="left:154px;top:673px;width:3px;height:1px;background:#006e00"></div><div class="a" style="left:164px;top:673px;width:3px;height:1px;background:#006e00"></div><div class="a" style="left:174px;top:673px;width:3px;height:1px;background:#006e00"></div><div class="a" style="left:188px;top:673px;width:3px;height:1px;background:#006e00"></div><div class="a" style="left:198px;top:673px;width:3px;height:1px;background:#006e00"></div><div class="a" style="left:208px;top:673px;width:3px;height:1px;background:#006e00"></div><div class="a" style="left:222px;top:673px;width:3px;height:1px;background:#006e00"></div><div class="a" style="left:232px;top:673px;width:3px;height:1px;background:#006e00"></div><div class="a" style="left:242px;top:673px;width:3px;height:1px;background:#006e00"></div><div class="a" style="left:257px;top:673px;width:3px;height:1px;background:#006e00"></div><div class="a" style="left:267px;top:673px;width:3px;height:1px;background:#006e00"></div><div class="a" style="left:277px;top:673px;width:3px;height:1px;background:#006e00"></div><div class="a" style="left:291px;top:673px;width:3px;height:1px;background:#006e00"></div><div class="a" style="left:301px;top:673px;width:3px;height:1px;background:#006e00"></div><div class="a" style="left:315px;top:673px;width:3px;height:1px;background:#006e00"></div><div class="a" style="left:329px;top:673px;width:3px;height:1px;background:#006e00"></div><div class="a" style="left:339px;top:673px;width:3px;height:1px;background:#006e00"></div><div class="a" style="left:349px;top:673px;width:3px;height:1px;background:#006e00"></div><div class="a" style="left:363px;top:673px;width:3px;height:1px;background:#006e00"></div><div class="a" style="left:373px;top:673px;width:3px;height:1px;background:#006e00"></div><div class="a" style="left:383px;top:673px;width:3px;height:1px;background:#006e00"></div><div class="a" style="left:397px;top:673px;width:3px;height:1px;background:#006e00"></div><div class="a" style="left:407px;top:673px;width:3px;height:1px;background:#006e00"></div><div class="a" style="left:417px;top:673px;width:3px;height:1px;background:#006e00"></div><div class="a" style="left:431px;top:673px;width:3px;height:1px;background:#006e00"></div><div class="a" style="left:441px;top:673px;width:3px;height:1px;background:#006e00"></div><div class="a" style="left:451px;top:673px;width:3px;height:1px;background:#006e00"></div><div class="a" style="left:466px;top:673px;width:3px;height:1px;background:#006e00"></div><div class="a" style="left:476px;top:673px;width:3px;height:1px;background:#006e00"></div><div class="a" style="left:486px;top:673px;width:3px;height:1px;background:#006e00"></div><div class="a" style="left:500px;top:673px;width:3px;height:1px;background:#006e00"></div><div class="a" style="left:510px;top:673px;width:3px;height:1px;background:#006e00"></div><div class="a" style="left:524px;top:673px;width:3px;height:1px;background:#006e00"></div><div class="a" style="left:538px;top:673px;width:3px;height:1px;background:#006e00"></div><div class="a" style="left:548px;top:673px;width:3px;height:1px;background:#006e00"></div><div class="a" style="left:558px;top:673px;width:3px;height:1px;background:#006e00"></div><div class="pc" style="left:569px;top:668px;color:#00f000">0</div><div class="pc" style="left:577.5px;top:668px;color:#00f000">-</div><div class="pc" style="left:589px;top:668px;color:#00f000">#</div><div class="pc" style="left:603px;top:668px;color:#80ff80">0</div><div class="pc" style="left:613px;top:668px;color:#80ff80">0</div><div class="pc" style="left:627px;top:668px;color:#8080ff">8</div><div class="pc" style="left:641px;top:668px;color:#ff8080">A</div><div class="pc" style="left:651px;top:668px;color:#00f000">0</div><div class="pc" style="left:661px;top:668px;color:#00f000">C</div><div class="a" style="left:680px;top:673px;width:3px;height:1px;background:#006e00"></div><div class="a" style="left:690px;top:673px;width:3px;height:1px;background:#006e00"></div><div class="a" style="left:700px;top:673px;width:3px;height:1px;background:#006e00"></div><div class="a" style="left:714px;top:673px;width:3px;height:1px;background:#006e00"></div><div class="a" style="left:724px;top:673px;width:3px;height:1px;background:#006e00"></div><div class="a" style="left:738px;top:673px;width:3px;height:1px;background:#006e00"></div><div class="a" style="left:752px;top:673px;width:3px;height:1px;background:#006e00"></div><div class="a" style="left:762px;top:673px;width:3px;height:1px;background:#006e00"></div><div class="a" style="left:772px;top:673px;width:3px;height:1px;background:#006e00"></div><div class="rn" style="top:681px;color:#f0f000">34</div><div class="a" style="left:42px;top:680px;width:738px;height:12px;background:#0f0f00;border-top:1px solid #1c1b06"></div><div class="pc" style="left:44px;top:680px;color:#f0f000">F</div><div class="pc" style="left:54px;top:680px;color:#f0f000">#</div><div class="pc" style="left:64px;top:680px;color:#f0f000">5</div><div class="pc" style="left:78px;top:680px;color:#80ff80">0</div><div class="pc" style="left:88px;top:680px;color:#80ff80">2</div><div class="a" style="left:106px;top:685px;width:3px;height:1px;background:#827a18"></div><div class="a" style="left:120px;top:685px;width:3px;height:1px;background:#827a18"></div><div class="a" style="left:130px;top:685px;width:3px;height:1px;background:#827a18"></div><div class="a" style="left:140px;top:685px;width:3px;height:1px;background:#827a18"></div><div class="a" style="left:154px;top:685px;width:3px;height:1px;background:#827a18"></div><div class="a" style="left:164px;top:685px;width:3px;height:1px;background:#827a18"></div><div class="a" style="left:174px;top:685px;width:3px;height:1px;background:#827a18"></div><div class="a" style="left:188px;top:685px;width:3px;height:1px;background:#827a18"></div><div class="a" style="left:198px;top:685px;width:3px;height:1px;background:#827a18"></div><div class="a" style="left:208px;top:685px;width:3px;height:1px;background:#827a18"></div><div class="a" style="left:222px;top:685px;width:3px;height:1px;background:#827a18"></div><div class="a" style="left:232px;top:685px;width:3px;height:1px;background:#827a18"></div><div class="a" style="left:242px;top:685px;width:3px;height:1px;background:#827a18"></div><div class="pc" style="left:253px;top:680px;color:#f0f000">F</div><div class="pc" style="left:263px;top:680px;color:#f0f000">#</div><div class="pc" style="left:273px;top:680px;color:#f0f000">3</div><div class="pc" style="left:287px;top:680px;color:#80ff80">0</div><div class="pc" style="left:297px;top:680px;color:#80ff80">0</div><div class="pc" style="left:311px;top:680px;color:#8080ff">8</div><div class="a" style="left:329px;top:685px;width:3px;height:1px;background:#827a18"></div><div class="a" style="left:339px;top:685px;width:3px;height:1px;background:#827a18"></div><div class="a" style="left:349px;top:685px;width:3px;height:1px;background:#827a18"></div><div class="a" style="left:363px;top:685px;width:3px;height:1px;background:#827a18"></div><div class="a" style="left:373px;top:685px;width:3px;height:1px;background:#827a18"></div><div class="a" style="left:383px;top:685px;width:3px;height:1px;background:#827a18"></div><div class="a" style="left:397px;top:685px;width:3px;height:1px;background:#827a18"></div><div class="a" style="left:407px;top:685px;width:3px;height:1px;background:#827a18"></div><div class="a" style="left:417px;top:685px;width:3px;height:1px;background:#827a18"></div><div class="a" style="left:431px;top:685px;width:3px;height:1px;background:#827a18"></div><div class="a" style="left:441px;top:685px;width:3px;height:1px;background:#827a18"></div><div class="a" style="left:451px;top:685px;width:3px;height:1px;background:#827a18"></div><div class="pc" style="left:462px;top:680px;color:#f0f000">F</div><div class="pc" style="left:472px;top:680px;color:#f0f000">#</div><div class="pc" style="left:482px;top:680px;color:#f0f000">3</div><div class="pc" style="left:496px;top:680px;color:#80ff80">0</div><div class="pc" style="left:506px;top:680px;color:#80ff80">0</div><div class="a" style="left:524px;top:685px;width:3px;height:1px;background:#827a18"></div><div class="a" style="left:538px;top:685px;width:3px;height:1px;background:#827a18"></div><div class="a" style="left:548px;top:685px;width:3px;height:1px;background:#827a18"></div><div class="a" style="left:558px;top:685px;width:3px;height:1px;background:#827a18"></div><div class="pc" style="left:569px;top:680px;color:#f0f000">7</div><div class="pc" style="left:577.5px;top:680px;color:#f0f000">-</div><div class="pc" style="left:589px;top:680px;color:#f0f000">#</div><div class="pc" style="left:603px;top:680px;color:#80ff80">0</div><div class="pc" style="left:613px;top:680px;color:#80ff80">0</div><div class="pc" style="left:627px;top:680px;color:#8080ff">A</div><div class="pc" style="left:641px;top:680px;color:#ff8080">A</div><div class="pc" style="left:651px;top:680px;color:#f0f000">0</div><div class="pc" style="left:661px;top:680px;color:#f0f000">7</div><div class="pc" style="left:676px;top:680px;color:#f0f000">C</div><div class="pc" style="left:686px;top:680px;color:#f0f000">#</div><div class="pc" style="left:696px;top:680px;color:#f0f000">3</div><div class="pc" style="left:710px;top:680px;color:#80ff80">0</div><div class="pc" style="left:720px;top:680px;color:#80ff80">1</div><div class="a" style="left:738px;top:685px;width:3px;height:1px;background:#827a18"></div><div class="pc" style="left:748px;top:680px;color:#ff8080">Z</div><div class="pc" style="left:758px;top:680px;color:#f0f000">0</div><div class="pc" style="left:768px;top:680px;color:#f0f000">0</div><div class="rn" style="top:693px;color:#00f000">35</div><div class="a" style="left:48px;top:697px;width:3px;height:1px;background:#006e00"></div><div class="a" style="left:58px;top:697px;width:3px;height:1px;background:#006e00"></div><div class="a" style="left:68px;top:697px;width:3px;height:1px;background:#006e00"></div><div class="a" style="left:82px;top:697px;width:3px;height:1px;background:#006e00"></div><div class="a" style="left:92px;top:697px;width:3px;height:1px;background:#006e00"></div><div class="a" style="left:106px;top:697px;width:3px;height:1px;background:#006e00"></div><div class="a" style="left:120px;top:697px;width:3px;height:1px;background:#006e00"></div><div class="a" style="left:130px;top:697px;width:3px;height:1px;background:#006e00"></div><div class="a" style="left:140px;top:697px;width:3px;height:1px;background:#006e00"></div><div class="a" style="left:154px;top:697px;width:3px;height:1px;background:#006e00"></div><div class="a" style="left:164px;top:697px;width:3px;height:1px;background:#006e00"></div><div class="a" style="left:174px;top:697px;width:3px;height:1px;background:#006e00"></div><div class="a" style="left:188px;top:697px;width:3px;height:1px;background:#006e00"></div><div class="a" style="left:198px;top:697px;width:3px;height:1px;background:#006e00"></div><div class="a" style="left:208px;top:697px;width:3px;height:1px;background:#006e00"></div><div class="a" style="left:222px;top:697px;width:3px;height:1px;background:#006e00"></div><div class="a" style="left:232px;top:697px;width:3px;height:1px;background:#006e00"></div><div class="a" style="left:242px;top:697px;width:3px;height:1px;background:#006e00"></div><div class="a" style="left:257px;top:697px;width:3px;height:1px;background:#006e00"></div><div class="a" style="left:267px;top:697px;width:3px;height:1px;background:#006e00"></div><div class="a" style="left:277px;top:697px;width:3px;height:1px;background:#006e00"></div><div class="a" style="left:291px;top:697px;width:3px;height:1px;background:#006e00"></div><div class="a" style="left:301px;top:697px;width:3px;height:1px;background:#006e00"></div><div class="a" style="left:315px;top:697px;width:3px;height:1px;background:#006e00"></div><div class="pc" style="left:325px;top:692px;color:#ff8080">4</div><div class="pc" style="left:335px;top:692px;color:#00f000">6</div><div class="pc" style="left:345px;top:692px;color:#00f000">2</div><div class="a" style="left:363px;top:697px;width:3px;height:1px;background:#006e00"></div><div class="a" style="left:373px;top:697px;width:3px;height:1px;background:#006e00"></div><div class="a" style="left:383px;top:697px;width:3px;height:1px;background:#006e00"></div><div class="a" style="left:397px;top:697px;width:3px;height:1px;background:#006e00"></div><div class="a" style="left:407px;top:697px;width:3px;height:1px;background:#006e00"></div><div class="a" style="left:417px;top:697px;width:3px;height:1px;background:#006e00"></div><div class="a" style="left:431px;top:697px;width:3px;height:1px;background:#006e00"></div><div class="a" style="left:441px;top:697px;width:3px;height:1px;background:#006e00"></div><div class="a" style="left:451px;top:697px;width:3px;height:1px;background:#006e00"></div><div class="a" style="left:466px;top:697px;width:3px;height:1px;background:#006e00"></div><div class="a" style="left:476px;top:697px;width:3px;height:1px;background:#006e00"></div><div class="a" style="left:486px;top:697px;width:3px;height:1px;background:#006e00"></div><div class="a" style="left:500px;top:697px;width:3px;height:1px;background:#006e00"></div><div class="a" style="left:510px;top:697px;width:3px;height:1px;background:#006e00"></div><div class="a" style="left:524px;top:697px;width:3px;height:1px;background:#006e00"></div><div class="a" style="left:538px;top:697px;width:3px;height:1px;background:#006e00"></div><div class="a" style="left:548px;top:697px;width:3px;height:1px;background:#006e00"></div><div class="a" style="left:558px;top:697px;width:3px;height:1px;background:#006e00"></div><div class="a" style="left:573px;top:697px;width:3px;height:1px;background:#006e00"></div><div class="a" style="left:583px;top:697px;width:3px;height:1px;background:#006e00"></div><div class="a" style="left:593px;top:697px;width:3px;height:1px;background:#006e00"></div><div class="a" style="left:607px;top:697px;width:3px;height:1px;background:#006e00"></div><div class="a" style="left:617px;top:697px;width:3px;height:1px;background:#006e00"></div><div class="a" style="left:631px;top:697px;width:3px;height:1px;background:#006e00"></div><div class="a" style="left:645px;top:697px;width:3px;height:1px;background:#006e00"></div><div class="a" style="left:655px;top:697px;width:3px;height:1px;background:#006e00"></div><div class="a" style="left:665px;top:697px;width:3px;height:1px;background:#006e00"></div><div class="a" style="left:680px;top:697px;width:3px;height:1px;background:#006e00"></div><div class="a" style="left:690px;top:697px;width:3px;height:1px;background:#006e00"></div><div class="a" style="left:700px;top:697px;width:3px;height:1px;background:#006e00"></div><div class="a" style="left:714px;top:697px;width:3px;height:1px;background:#006e00"></div><div class="a" style="left:724px;top:697px;width:3px;height:1px;background:#006e00"></div><div class="a" style="left:738px;top:697px;width:3px;height:1px;background:#006e00"></div><div class="a" style="left:752px;top:697px;width:3px;height:1px;background:#006e00"></div><div class="a" style="left:762px;top:697px;width:3px;height:1px;background:#006e00"></div><div class="a" style="left:772px;top:697px;width:3px;height:1px;background:#006e00"></div><div class="rn" style="top:705px;color:#00f000">36</div><div class="a" style="left:48px;top:709px;width:3px;height:1px;background:#006e00"></div><div class="a" style="left:58px;top:709px;width:3px;height:1px;background:#006e00"></div><div class="a" style="left:68px;top:709px;width:3px;height:1px;background:#006e00"></div><div class="a" style="left:82px;top:709px;width:3px;height:1px;background:#006e00"></div><div class="a" style="left:92px;top:709px;width:3px;height:1px;background:#006e00"></div><div class="a" style="left:106px;top:709px;width:3px;height:1px;background:#006e00"></div><div class="pc" style="left:116px;top:704px;color:#ff8080">4</div><div class="pc" style="left:126px;top:704px;color:#00f000">7</div><div class="pc" style="left:136px;top:704px;color:#00f000">2</div><div class="pc" style="left:150px;top:704px;color:#ff8080">A</div><div class="pc" style="left:160px;top:704px;color:#00f000">0</div><div class="pc" style="left:170px;top:704px;color:#00f000">2</div><div class="a" style="left:188px;top:709px;width:3px;height:1px;background:#006e00"></div><div class="a" style="left:198px;top:709px;width:3px;height:1px;background:#006e00"></div><div class="a" style="left:208px;top:709px;width:3px;height:1px;background:#006e00"></div><div class="a" style="left:222px;top:709px;width:3px;height:1px;background:#006e00"></div><div class="a" style="left:232px;top:709px;width:3px;height:1px;background:#006e00"></div><div class="a" style="left:242px;top:709px;width:3px;height:1px;background:#006e00"></div><div class="a" style="left:257px;top:709px;width:3px;height:1px;background:#006e00"></div><div class="a" style="left:267px;top:709px;width:3px;height:1px;background:#006e00"></div><div class="a" style="left:277px;top:709px;width:3px;height:1px;background:#006e00"></div><div class="a" style="left:291px;top:709px;width:3px;height:1px;background:#006e00"></div><div class="a" style="left:301px;top:709px;width:3px;height:1px;background:#006e00"></div><div class="a" style="left:315px;top:709px;width:3px;height:1px;background:#006e00"></div><div class="a" style="left:329px;top:709px;width:3px;height:1px;background:#006e00"></div><div class="a" style="left:339px;top:709px;width:3px;height:1px;background:#006e00"></div><div class="a" style="left:349px;top:709px;width:3px;height:1px;background:#006e00"></div><div class="a" style="left:363px;top:709px;width:3px;height:1px;background:#006e00"></div><div class="a" style="left:373px;top:709px;width:3px;height:1px;background:#006e00"></div><div class="a" style="left:383px;top:709px;width:3px;height:1px;background:#006e00"></div><div class="a" style="left:397px;top:709px;width:3px;height:1px;background:#006e00"></div><div class="a" style="left:407px;top:709px;width:3px;height:1px;background:#006e00"></div><div class="a" style="left:417px;top:709px;width:3px;height:1px;background:#006e00"></div><div class="a" style="left:431px;top:709px;width:3px;height:1px;background:#006e00"></div><div class="a" style="left:441px;top:709px;width:3px;height:1px;background:#006e00"></div><div class="a" style="left:451px;top:709px;width:3px;height:1px;background:#006e00"></div><div class="a" style="left:466px;top:709px;width:3px;height:1px;background:#006e00"></div><div class="a" style="left:476px;top:709px;width:3px;height:1px;background:#006e00"></div><div class="a" style="left:486px;top:709px;width:3px;height:1px;background:#006e00"></div><div class="a" style="left:500px;top:709px;width:3px;height:1px;background:#006e00"></div><div class="a" style="left:510px;top:709px;width:3px;height:1px;background:#006e00"></div><div class="a" style="left:524px;top:709px;width:3px;height:1px;background:#006e00"></div><div class="a" style="left:538px;top:709px;width:3px;height:1px;background:#006e00"></div><div class="a" style="left:548px;top:709px;width:3px;height:1px;background:#006e00"></div><div class="a" style="left:558px;top:709px;width:3px;height:1px;background:#006e00"></div><div class="a" style="left:573px;top:709px;width:3px;height:1px;background:#006e00"></div><div class="a" style="left:583px;top:709px;width:3px;height:1px;background:#006e00"></div><div class="a" style="left:593px;top:709px;width:3px;height:1px;background:#006e00"></div><div class="a" style="left:607px;top:709px;width:3px;height:1px;background:#006e00"></div><div class="a" style="left:617px;top:709px;width:3px;height:1px;background:#006e00"></div><div class="a" style="left:631px;top:709px;width:3px;height:1px;background:#006e00"></div><div class="a" style="left:645px;top:709px;width:3px;height:1px;background:#006e00"></div><div class="a" style="left:655px;top:709px;width:3px;height:1px;background:#006e00"></div><div class="a" style="left:665px;top:709px;width:3px;height:1px;background:#006e00"></div><div class="a" style="left:680px;top:709px;width:3px;height:1px;background:#006e00"></div><div class="a" style="left:690px;top:709px;width:3px;height:1px;background:#006e00"></div><div class="a" style="left:700px;top:709px;width:3px;height:1px;background:#006e00"></div><div class="a" style="left:714px;top:709px;width:3px;height:1px;background:#006e00"></div><div class="a" style="left:724px;top:709px;width:3px;height:1px;background:#006e00"></div><div class="a" style="left:738px;top:709px;width:3px;height:1px;background:#006e00"></div><div class="a" style="left:752px;top:709px;width:3px;height:1px;background:#006e00"></div><div class="a" style="left:762px;top:709px;width:3px;height:1px;background:#006e00"></div><div class="a" style="left:772px;top:709px;width:3px;height:1px;background:#006e00"></div><div class="rn" style="top:717px;color:#00f000">37</div><div class="a" style="left:48px;top:721px;width:3px;height:1px;background:#006e00"></div><div class="a" style="left:58px;top:721px;width:3px;height:1px;background:#006e00"></div><div class="a" style="left:68px;top:721px;width:3px;height:1px;background:#006e00"></div><div class="a" style="left:82px;top:721px;width:3px;height:1px;background:#006e00"></div><div class="a" style="left:92px;top:721px;width:3px;height:1px;background:#006e00"></div><div class="a" style="left:106px;top:721px;width:3px;height:1px;background:#006e00"></div><div class="a" style="left:120px;top:721px;width:3px;height:1px;background:#006e00"></div><div class="a" style="left:130px;top:721px;width:3px;height:1px;background:#006e00"></div><div class="a" style="left:140px;top:721px;width:3px;height:1px;background:#006e00"></div><div class="a" style="left:154px;top:721px;width:3px;height:1px;background:#006e00"></div><div class="a" style="left:164px;top:721px;width:3px;height:1px;background:#006e00"></div><div class="a" style="left:174px;top:721px;width:3px;height:1px;background:#006e00"></div><div class="a" style="left:188px;top:721px;width:3px;height:1px;background:#006e00"></div><div class="a" style="left:198px;top:721px;width:3px;height:1px;background:#006e00"></div><div class="a" style="left:208px;top:721px;width:3px;height:1px;background:#006e00"></div><div class="a" style="left:222px;top:721px;width:3px;height:1px;background:#006e00"></div><div class="a" style="left:232px;top:721px;width:3px;height:1px;background:#006e00"></div><div class="a" style="left:242px;top:721px;width:3px;height:1px;background:#006e00"></div><div class="a" style="left:257px;top:721px;width:3px;height:1px;background:#006e00"></div><div class="a" style="left:267px;top:721px;width:3px;height:1px;background:#006e00"></div><div class="a" style="left:277px;top:721px;width:3px;height:1px;background:#006e00"></div><div class="a" style="left:291px;top:721px;width:3px;height:1px;background:#006e00"></div><div class="a" style="left:301px;top:721px;width:3px;height:1px;background:#006e00"></div><div class="pc" style="left:311px;top:716px;color:#8080ff">2</div><div class="pc" style="left:325px;top:716px;color:#ff8080">G</div><div class="pc" style="left:335px;top:716px;color:#00f000">0</div><div class="pc" style="left:345px;top:716px;color:#00f000">2</div><div class="a" style="left:363px;top:721px;width:3px;height:1px;background:#006e00"></div><div class="a" style="left:373px;top:721px;width:3px;height:1px;background:#006e00"></div><div class="a" style="left:383px;top:721px;width:3px;height:1px;background:#006e00"></div><div class="a" style="left:397px;top:721px;width:3px;height:1px;background:#006e00"></div><div class="a" style="left:407px;top:721px;width:3px;height:1px;background:#006e00"></div><div class="a" style="left:417px;top:721px;width:3px;height:1px;background:#006e00"></div><div class="a" style="left:431px;top:721px;width:3px;height:1px;background:#006e00"></div><div class="a" style="left:441px;top:721px;width:3px;height:1px;background:#006e00"></div><div class="a" style="left:451px;top:721px;width:3px;height:1px;background:#006e00"></div><div class="a" style="left:468px;top:720px;width:18px;height:3px;background:#00f000"></div><div class="a" style="left:500px;top:721px;width:3px;height:1px;background:#006e00"></div><div class="a" style="left:510px;top:721px;width:3px;height:1px;background:#006e00"></div><div class="a" style="left:524px;top:721px;width:3px;height:1px;background:#006e00"></div><div class="pc" style="left:534px;top:716px;color:#ff8080">G</div><div class="pc" style="left:544px;top:716px;color:#00f000">0</div><div class="pc" style="left:554px;top:716px;color:#00f000">2</div><div class="a" style="left:573px;top:721px;width:3px;height:1px;background:#006e00"></div><div class="a" style="left:583px;top:721px;width:3px;height:1px;background:#006e00"></div><div class="a" style="left:593px;top:721px;width:3px;height:1px;background:#006e00"></div><div class="a" style="left:607px;top:721px;width:3px;height:1px;background:#006e00"></div><div class="a" style="left:617px;top:721px;width:3px;height:1px;background:#006e00"></div><div class="a" style="left:631px;top:721px;width:3px;height:1px;background:#006e00"></div><div class="a" style="left:645px;top:721px;width:3px;height:1px;background:#006e00"></div><div class="a" style="left:655px;top:721px;width:3px;height:1px;background:#006e00"></div><div class="a" style="left:665px;top:721px;width:3px;height:1px;background:#006e00"></div><div class="a" style="left:680px;top:721px;width:3px;height:1px;background:#006e00"></div><div class="a" style="left:690px;top:721px;width:3px;height:1px;background:#006e00"></div><div class="a" style="left:700px;top:721px;width:3px;height:1px;background:#006e00"></div><div class="a" style="left:714px;top:721px;width:3px;height:1px;background:#006e00"></div><div class="a" style="left:724px;top:721px;width:3px;height:1px;background:#006e00"></div><div class="a" style="left:738px;top:721px;width:3px;height:1px;background:#006e00"></div><div class="a" style="left:752px;top:721px;width:3px;height:1px;background:#006e00"></div><div class="a" style="left:762px;top:721px;width:3px;height:1px;background:#006e00"></div><div class="a" style="left:772px;top:721px;width:3px;height:1px;background:#006e00"></div><div class="rn" style="top:729px;color:#f0f000">38</div><div class="a" style="left:42px;top:728px;width:738px;height:12px;background:#0f0f00;border-top:1px solid #1c1b06"></div><div class="a" style="left:48px;top:733px;width:3px;height:1px;background:#827a18"></div><div class="a" style="left:58px;top:733px;width:3px;height:1px;background:#827a18"></div><div class="a" style="left:68px;top:733px;width:3px;height:1px;background:#827a18"></div><div class="a" style="left:82px;top:733px;width:3px;height:1px;background:#827a18"></div><div class="a" style="left:92px;top:733px;width:3px;height:1px;background:#827a18"></div><div class="a" style="left:106px;top:733px;width:3px;height:1px;background:#827a18"></div><div class="a" style="left:120px;top:733px;width:3px;height:1px;background:#827a18"></div><div class="a" style="left:130px;top:733px;width:3px;height:1px;background:#827a18"></div><div class="a" style="left:140px;top:733px;width:3px;height:1px;background:#827a18"></div><div class="a" style="left:154px;top:733px;width:3px;height:1px;background:#827a18"></div><div class="a" style="left:164px;top:733px;width:3px;height:1px;background:#827a18"></div><div class="a" style="left:174px;top:733px;width:3px;height:1px;background:#827a18"></div><div class="a" style="left:188px;top:733px;width:3px;height:1px;background:#827a18"></div><div class="a" style="left:198px;top:733px;width:3px;height:1px;background:#827a18"></div><div class="a" style="left:208px;top:733px;width:3px;height:1px;background:#827a18"></div><div class="a" style="left:222px;top:733px;width:3px;height:1px;background:#827a18"></div><div class="a" style="left:232px;top:733px;width:3px;height:1px;background:#827a18"></div><div class="a" style="left:242px;top:733px;width:3px;height:1px;background:#827a18"></div><div class="pc" style="left:253px;top:728px;color:#f0f000">F</div><div class="pc" style="left:263px;top:728px;color:#f0f000">#</div><div class="pc" style="left:273px;top:728px;color:#f0f000">3</div><div class="pc" style="left:287px;top:728px;color:#80ff80">0</div><div class="pc" style="left:297px;top:728px;color:#80ff80">0</div><div class="pc" style="left:311px;top:728px;color:#8080ff">8</div><div class="pc" style="left:325px;top:728px;color:#ff8080">4</div><div class="pc" style="left:335px;top:728px;color:#f0f000">0</div><div class="pc" style="left:345px;top:728px;color:#f0f000">0</div><div class="a" style="left:363px;top:733px;width:3px;height:1px;background:#827a18"></div><div class="a" style="left:373px;top:733px;width:3px;height:1px;background:#827a18"></div><div class="a" style="left:383px;top:733px;width:3px;height:1px;background:#827a18"></div><div class="a" style="left:397px;top:733px;width:3px;height:1px;background:#827a18"></div><div class="a" style="left:407px;top:733px;width:3px;height:1px;background:#827a18"></div><div class="a" style="left:417px;top:733px;width:3px;height:1px;background:#827a18"></div><div class="a" style="left:431px;top:733px;width:3px;height:1px;background:#827a18"></div><div class="a" style="left:441px;top:733px;width:3px;height:1px;background:#827a18"></div><div class="a" style="left:451px;top:733px;width:3px;height:1px;background:#827a18"></div><div class="pc" style="left:462px;top:728px;color:#f0f000">E</div><div class="pc" style="left:470.5px;top:728px;color:#f0f000">-</div><div class="pc" style="left:482px;top:728px;color:#f0f000">3</div><div class="pc" style="left:496px;top:728px;color:#80ff80">0</div><div class="pc" style="left:506px;top:728px;color:#80ff80">0</div><div class="a" style="left:524px;top:733px;width:3px;height:1px;background:#827a18"></div><div class="a" style="left:538px;top:733px;width:3px;height:1px;background:#827a18"></div><div class="a" style="left:548px;top:733px;width:3px;height:1px;background:#827a18"></div><div class="a" style="left:558px;top:733px;width:3px;height:1px;background:#827a18"></div><div class="pc" style="left:569px;top:728px;color:#f0f000">D</div><div class="pc" style="left:577.5px;top:728px;color:#f0f000">-</div><div class="pc" style="left:589px;top:728px;color:#f0f000">#</div><div class="pc" style="left:603px;top:728px;color:#80ff80">0</div><div class="pc" style="left:613px;top:728px;color:#80ff80">0</div><div class="pc" style="left:627px;top:728px;color:#8080ff">8</div><div class="pc" style="left:641px;top:728px;color:#ff8080">A</div><div class="pc" style="left:651px;top:728px;color:#f0f000">0</div><div class="pc" style="left:661px;top:728px;color:#f0f000">A</div><div class="pc" style="left:676px;top:728px;color:#f0f000">C</div><div class="pc" style="left:684.5px;top:728px;color:#f0f000">-</div><div class="pc" style="left:696px;top:728px;color:#f0f000">3</div><div class="pc" style="left:710px;top:728px;color:#80ff80">0</div><div class="pc" style="left:720px;top:728px;color:#80ff80">1</div><div class="a" style="left:738px;top:733px;width:3px;height:1px;background:#827a18"></div><div class="pc" style="left:748px;top:728px;color:#ff8080">Z</div><div class="pc" style="left:758px;top:728px;color:#f0f000">0</div><div class="pc" style="left:768px;top:728px;color:#f0f000">0</div><div class="rn" style="top:741px;color:#00f000">39</div><div class="a" style="left:48px;top:745px;width:3px;height:1px;background:#006e00"></div><div class="a" style="left:58px;top:745px;width:3px;height:1px;background:#006e00"></div><div class="a" style="left:68px;top:745px;width:3px;height:1px;background:#006e00"></div><div class="a" style="left:82px;top:745px;width:3px;height:1px;background:#006e00"></div><div class="a" style="left:92px;top:745px;width:3px;height:1px;background:#006e00"></div><div class="a" style="left:106px;top:745px;width:3px;height:1px;background:#006e00"></div><div class="a" style="left:120px;top:745px;width:3px;height:1px;background:#006e00"></div><div class="a" style="left:130px;top:745px;width:3px;height:1px;background:#006e00"></div><div class="a" style="left:140px;top:745px;width:3px;height:1px;background:#006e00"></div><div class="a" style="left:154px;top:745px;width:3px;height:1px;background:#006e00"></div><div class="a" style="left:164px;top:745px;width:3px;height:1px;background:#006e00"></div><div class="a" style="left:174px;top:745px;width:3px;height:1px;background:#006e00"></div><div class="a" style="left:188px;top:745px;width:3px;height:1px;background:#006e00"></div><div class="a" style="left:198px;top:745px;width:3px;height:1px;background:#006e00"></div><div class="a" style="left:208px;top:745px;width:3px;height:1px;background:#006e00"></div><div class="a" style="left:222px;top:745px;width:3px;height:1px;background:#006e00"></div><div class="a" style="left:232px;top:745px;width:3px;height:1px;background:#006e00"></div><div class="a" style="left:242px;top:745px;width:3px;height:1px;background:#006e00"></div><div class="a" style="left:257px;top:745px;width:3px;height:1px;background:#006e00"></div><div class="a" style="left:267px;top:745px;width:3px;height:1px;background:#006e00"></div><div class="a" style="left:277px;top:745px;width:3px;height:1px;background:#006e00"></div><div class="a" style="left:291px;top:745px;width:3px;height:1px;background:#006e00"></div><div class="a" style="left:301px;top:745px;width:3px;height:1px;background:#006e00"></div><div class="pc" style="left:311px;top:740px;color:#8080ff">2</div><div class="pc" style="left:325px;top:740px;color:#ff8080">G</div><div class="pc" style="left:335px;top:740px;color:#00f000">0</div><div class="pc" style="left:345px;top:740px;color:#00f000">2</div><div class="a" style="left:363px;top:745px;width:3px;height:1px;background:#006e00"></div><div class="a" style="left:373px;top:745px;width:3px;height:1px;background:#006e00"></div><div class="a" style="left:383px;top:745px;width:3px;height:1px;background:#006e00"></div><div class="a" style="left:397px;top:745px;width:3px;height:1px;background:#006e00"></div><div class="a" style="left:407px;top:745px;width:3px;height:1px;background:#006e00"></div><div class="a" style="left:417px;top:745px;width:3px;height:1px;background:#006e00"></div><div class="a" style="left:431px;top:745px;width:3px;height:1px;background:#006e00"></div><div class="a" style="left:441px;top:745px;width:3px;height:1px;background:#006e00"></div><div class="a" style="left:451px;top:745px;width:3px;height:1px;background:#006e00"></div><div class="a" style="left:466px;top:745px;width:3px;height:1px;background:#006e00"></div><div class="a" style="left:476px;top:745px;width:3px;height:1px;background:#006e00"></div><div class="a" style="left:486px;top:745px;width:3px;height:1px;background:#006e00"></div><div class="a" style="left:500px;top:745px;width:3px;height:1px;background:#006e00"></div><div class="a" style="left:510px;top:745px;width:3px;height:1px;background:#006e00"></div><div class="a" style="left:524px;top:745px;width:3px;height:1px;background:#006e00"></div><div class="a" style="left:538px;top:745px;width:3px;height:1px;background:#006e00"></div><div class="a" style="left:548px;top:745px;width:3px;height:1px;background:#006e00"></div><div class="a" style="left:558px;top:745px;width:3px;height:1px;background:#006e00"></div><div class="pc" style="left:569px;top:740px;color:#00f000">0</div><div class="pc" style="left:577.5px;top:740px;color:#00f000">-</div><div class="pc" style="left:589px;top:740px;color:#00f000">#</div><div class="pc" style="left:603px;top:740px;color:#80ff80">0</div><div class="pc" style="left:613px;top:740px;color:#80ff80">0</div><div class="pc" style="left:627px;top:740px;color:#8080ff">8</div><div class="pc" style="left:641px;top:740px;color:#ff8080">A</div><div class="pc" style="left:651px;top:740px;color:#00f000">0</div><div class="pc" style="left:661px;top:740px;color:#00f000">C</div><div class="a" style="left:680px;top:745px;width:3px;height:1px;background:#006e00"></div><div class="a" style="left:690px;top:745px;width:3px;height:1px;background:#006e00"></div><div class="a" style="left:700px;top:745px;width:3px;height:1px;background:#006e00"></div><div class="a" style="left:714px;top:745px;width:3px;height:1px;background:#006e00"></div><div class="a" style="left:724px;top:745px;width:3px;height:1px;background:#006e00"></div><div class="a" style="left:738px;top:745px;width:3px;height:1px;background:#006e00"></div><div class="a" style="left:752px;top:745px;width:3px;height:1px;background:#006e00"></div><div class="a" style="left:762px;top:745px;width:3px;height:1px;background:#006e00"></div><div class="a" style="left:772px;top:745px;width:3px;height:1px;background:#006e00"></div><div class="rn" style="top:753px;color:#00f000">3A</div><div class="a" style="left:48px;top:757px;width:3px;height:1px;background:#006e00"></div><div class="a" style="left:58px;top:757px;width:3px;height:1px;background:#006e00"></div><div class="a" style="left:68px;top:757px;width:3px;height:1px;background:#006e00"></div><div class="a" style="left:82px;top:757px;width:3px;height:1px;background:#006e00"></div><div class="a" style="left:92px;top:757px;width:3px;height:1px;background:#006e00"></div><div class="a" style="left:106px;top:757px;width:3px;height:1px;background:#006e00"></div><div class="a" style="left:120px;top:757px;width:3px;height:1px;background:#006e00"></div><div class="a" style="left:130px;top:757px;width:3px;height:1px;background:#006e00"></div><div class="a" style="left:140px;top:757px;width:3px;height:1px;background:#006e00"></div><div class="a" style="left:154px;top:757px;width:3px;height:1px;background:#006e00"></div><div class="a" style="left:164px;top:757px;width:3px;height:1px;background:#006e00"></div><div class="a" style="left:174px;top:757px;width:3px;height:1px;background:#006e00"></div><div class="a" style="left:188px;top:757px;width:3px;height:1px;background:#006e00"></div><div class="a" style="left:198px;top:757px;width:3px;height:1px;background:#006e00"></div><div class="a" style="left:208px;top:757px;width:3px;height:1px;background:#006e00"></div><div class="a" style="left:222px;top:757px;width:3px;height:1px;background:#006e00"></div><div class="a" style="left:232px;top:757px;width:3px;height:1px;background:#006e00"></div><div class="a" style="left:242px;top:757px;width:3px;height:1px;background:#006e00"></div><div class="pc" style="left:253px;top:752px;color:#00f000">A</div><div class="pc" style="left:261.5px;top:752px;color:#00f000">-</div><div class="pc" style="left:273px;top:752px;color:#00f000">3</div><div class="pc" style="left:287px;top:752px;color:#80ff80">0</div><div class="pc" style="left:297px;top:752px;color:#80ff80">0</div><div class="pc" style="left:311px;top:752px;color:#8080ff">8</div><div class="a" style="left:329px;top:757px;width:3px;height:1px;background:#006e00"></div><div class="a" style="left:339px;top:757px;width:3px;height:1px;background:#006e00"></div><div class="a" style="left:349px;top:757px;width:3px;height:1px;background:#006e00"></div><div class="a" style="left:363px;top:757px;width:3px;height:1px;background:#006e00"></div><div class="a" style="left:373px;top:757px;width:3px;height:1px;background:#006e00"></div><div class="a" style="left:383px;top:757px;width:3px;height:1px;background:#006e00"></div><div class="a" style="left:397px;top:757px;width:3px;height:1px;background:#006e00"></div><div class="a" style="left:407px;top:757px;width:3px;height:1px;background:#006e00"></div><div class="a" style="left:417px;top:757px;width:3px;height:1px;background:#006e00"></div><div class="a" style="left:431px;top:757px;width:3px;height:1px;background:#006e00"></div><div class="a" style="left:441px;top:757px;width:3px;height:1px;background:#006e00"></div><div class="a" style="left:451px;top:757px;width:3px;height:1px;background:#006e00"></div><div class="a" style="left:466px;top:757px;width:3px;height:1px;background:#006e00"></div><div class="a" style="left:476px;top:757px;width:3px;height:1px;background:#006e00"></div><div class="a" style="left:486px;top:757px;width:3px;height:1px;background:#006e00"></div><div class="a" style="left:500px;top:757px;width:3px;height:1px;background:#006e00"></div><div class="a" style="left:510px;top:757px;width:3px;height:1px;background:#006e00"></div><div class="a" style="left:524px;top:757px;width:3px;height:1px;background:#006e00"></div><div class="a" style="left:538px;top:757px;width:3px;height:1px;background:#006e00"></div><div class="a" style="left:548px;top:757px;width:3px;height:1px;background:#006e00"></div><div class="a" style="left:558px;top:757px;width:3px;height:1px;background:#006e00"></div><div class="a" style="left:573px;top:757px;width:3px;height:1px;background:#006e00"></div><div class="a" style="left:583px;top:757px;width:3px;height:1px;background:#006e00"></div><div class="a" style="left:593px;top:757px;width:3px;height:1px;background:#006e00"></div><div class="a" style="left:607px;top:757px;width:3px;height:1px;background:#006e00"></div><div class="a" style="left:617px;top:757px;width:3px;height:1px;background:#006e00"></div><div class="a" style="left:631px;top:757px;width:3px;height:1px;background:#006e00"></div><div class="a" style="left:645px;top:757px;width:3px;height:1px;background:#006e00"></div><div class="a" style="left:655px;top:757px;width:3px;height:1px;background:#006e00"></div><div class="a" style="left:665px;top:757px;width:3px;height:1px;background:#006e00"></div><div class="pc" style="left:676px;top:752px;color:#00f000">C</div><div class="pc" style="left:684.5px;top:752px;color:#00f000">-</div><div class="pc" style="left:696px;top:752px;color:#00f000">3</div><div class="pc" style="left:710px;top:752px;color:#80ff80">0</div><div class="pc" style="left:720px;top:752px;color:#80ff80">1</div><div class="a" style="left:738px;top:757px;width:3px;height:1px;background:#006e00"></div><div class="pc" style="left:748px;top:752px;color:#ff8080">Z</div><div class="pc" style="left:758px;top:752px;color:#00f000">0</div><div class="pc" style="left:768px;top:752px;color:#00f000">0</div><div class="rn" style="top:765px;color:#00f000">3B</div><div class="a" style="left:48px;top:769px;width:3px;height:1px;background:#006e00"></div><div class="a" style="left:58px;top:769px;width:3px;height:1px;background:#006e00"></div><div class="a" style="left:68px;top:769px;width:3px;height:1px;background:#006e00"></div><div class="a" style="left:82px;top:769px;width:3px;height:1px;background:#006e00"></div><div class="a" style="left:92px;top:769px;width:3px;height:1px;background:#006e00"></div><div class="a" style="left:106px;top:769px;width:3px;height:1px;background:#006e00"></div><div class="a" style="left:120px;top:769px;width:3px;height:1px;background:#006e00"></div><div class="a" style="left:130px;top:769px;width:3px;height:1px;background:#006e00"></div><div class="a" style="left:140px;top:769px;width:3px;height:1px;background:#006e00"></div><div class="a" style="left:154px;top:769px;width:3px;height:1px;background:#006e00"></div><div class="a" style="left:164px;top:769px;width:3px;height:1px;background:#006e00"></div><div class="a" style="left:174px;top:769px;width:3px;height:1px;background:#006e00"></div><div class="a" style="left:188px;top:769px;width:3px;height:1px;background:#006e00"></div><div class="a" style="left:198px;top:769px;width:3px;height:1px;background:#006e00"></div><div class="a" style="left:208px;top:769px;width:3px;height:1px;background:#006e00"></div><div class="a" style="left:222px;top:769px;width:3px;height:1px;background:#006e00"></div><div class="a" style="left:232px;top:769px;width:3px;height:1px;background:#006e00"></div><div class="a" style="left:242px;top:769px;width:3px;height:1px;background:#006e00"></div><div class="a" style="left:257px;top:769px;width:3px;height:1px;background:#006e00"></div><div class="a" style="left:267px;top:769px;width:3px;height:1px;background:#006e00"></div><div class="a" style="left:277px;top:769px;width:3px;height:1px;background:#006e00"></div><div class="a" style="left:291px;top:769px;width:3px;height:1px;background:#006e00"></div><div class="a" style="left:301px;top:769px;width:3px;height:1px;background:#006e00"></div><div class="pc" style="left:311px;top:764px;color:#8080ff">2</div><div class="pc" style="left:325px;top:764px;color:#ff8080">G</div><div class="pc" style="left:335px;top:764px;color:#00f000">0</div><div class="pc" style="left:345px;top:764px;color:#00f000">2</div><div class="a" style="left:363px;top:769px;width:3px;height:1px;background:#006e00"></div><div class="a" style="left:373px;top:769px;width:3px;height:1px;background:#006e00"></div><div class="a" style="left:383px;top:769px;width:3px;height:1px;background:#006e00"></div><div class="a" style="left:397px;top:769px;width:3px;height:1px;background:#006e00"></div><div class="a" style="left:407px;top:769px;width:3px;height:1px;background:#006e00"></div><div class="a" style="left:417px;top:769px;width:3px;height:1px;background:#006e00"></div><div class="a" style="left:431px;top:769px;width:3px;height:1px;background:#006e00"></div><div class="a" style="left:441px;top:769px;width:3px;height:1px;background:#006e00"></div><div class="a" style="left:451px;top:769px;width:3px;height:1px;background:#006e00"></div><div class="a" style="left:468px;top:768px;width:18px;height:3px;background:#00f000"></div><div class="a" style="left:500px;top:769px;width:3px;height:1px;background:#006e00"></div><div class="a" style="left:510px;top:769px;width:3px;height:1px;background:#006e00"></div><div class="a" style="left:524px;top:769px;width:3px;height:1px;background:#006e00"></div><div class="pc" style="left:534px;top:764px;color:#ff8080">G</div><div class="pc" style="left:544px;top:764px;color:#00f000">0</div><div class="pc" style="left:554px;top:764px;color:#00f000">2</div><div class="pc" style="left:569px;top:764px;color:#00f000">0</div><div class="pc" style="left:577.5px;top:764px;color:#00f000">-</div><div class="pc" style="left:589px;top:764px;color:#00f000">#</div><div class="pc" style="left:603px;top:764px;color:#80ff80">0</div><div class="pc" style="left:613px;top:764px;color:#80ff80">0</div><div class="pc" style="left:627px;top:764px;color:#8080ff">8</div><div class="pc" style="left:641px;top:764px;color:#ff8080">A</div><div class="pc" style="left:651px;top:764px;color:#00f000">0</div><div class="pc" style="left:661px;top:764px;color:#00f000">C</div><div class="a" style="left:680px;top:769px;width:3px;height:1px;background:#006e00"></div><div class="a" style="left:690px;top:769px;width:3px;height:1px;background:#006e00"></div><div class="a" style="left:700px;top:769px;width:3px;height:1px;background:#006e00"></div><div class="a" style="left:714px;top:769px;width:3px;height:1px;background:#006e00"></div><div class="a" style="left:724px;top:769px;width:3px;height:1px;background:#006e00"></div><div class="a" style="left:738px;top:769px;width:3px;height:1px;background:#006e00"></div><div class="a" style="left:752px;top:769px;width:3px;height:1px;background:#006e00"></div><div class="a" style="left:762px;top:769px;width:3px;height:1px;background:#006e00"></div><div class="a" style="left:772px;top:769px;width:3px;height:1px;background:#006e00"></div><div class="rn" style="top:777px;color:#f0f000">3C</div><div class="a" style="left:42px;top:776px;width:738px;height:12px;background:#0f0f00;border-top:1px solid #1c1b06"></div><div class="a" style="left:48px;top:781px;width:3px;height:1px;background:#827a18"></div><div class="a" style="left:58px;top:781px;width:3px;height:1px;background:#827a18"></div><div class="a" style="left:68px;top:781px;width:3px;height:1px;background:#827a18"></div><div class="a" style="left:82px;top:781px;width:3px;height:1px;background:#827a18"></div><div class="a" style="left:92px;top:781px;width:3px;height:1px;background:#827a18"></div><div class="a" style="left:106px;top:781px;width:3px;height:1px;background:#827a18"></div><div class="a" style="left:120px;top:781px;width:3px;height:1px;background:#827a18"></div><div class="a" style="left:130px;top:781px;width:3px;height:1px;background:#827a18"></div><div class="a" style="left:140px;top:781px;width:3px;height:1px;background:#827a18"></div><div class="a" style="left:154px;top:781px;width:3px;height:1px;background:#827a18"></div><div class="a" style="left:164px;top:781px;width:3px;height:1px;background:#827a18"></div><div class="a" style="left:174px;top:781px;width:3px;height:1px;background:#827a18"></div><div class="a" style="left:188px;top:781px;width:3px;height:1px;background:#827a18"></div><div class="a" style="left:198px;top:781px;width:3px;height:1px;background:#827a18"></div><div class="a" style="left:208px;top:781px;width:3px;height:1px;background:#827a18"></div><div class="a" style="left:222px;top:781px;width:3px;height:1px;background:#827a18"></div><div class="a" style="left:232px;top:781px;width:3px;height:1px;background:#827a18"></div><div class="a" style="left:242px;top:781px;width:3px;height:1px;background:#827a18"></div><div class="pc" style="left:253px;top:776px;color:#f0f000">F</div><div class="pc" style="left:263px;top:776px;color:#f0f000">#</div><div class="pc" style="left:273px;top:776px;color:#f0f000">3</div><div class="pc" style="left:287px;top:776px;color:#80ff80">0</div><div class="pc" style="left:297px;top:776px;color:#80ff80">0</div><div class="pc" style="left:311px;top:776px;color:#8080ff">8</div><div class="a" style="left:329px;top:781px;width:3px;height:1px;background:#827a18"></div><div class="a" style="left:339px;top:781px;width:3px;height:1px;background:#827a18"></div><div class="a" style="left:349px;top:781px;width:3px;height:1px;background:#827a18"></div><div class="a" style="left:363px;top:781px;width:3px;height:1px;background:#827a18"></div><div class="a" style="left:373px;top:781px;width:3px;height:1px;background:#827a18"></div><div class="a" style="left:383px;top:781px;width:3px;height:1px;background:#827a18"></div><div class="a" style="left:397px;top:781px;width:3px;height:1px;background:#827a18"></div><div class="a" style="left:407px;top:781px;width:3px;height:1px;background:#827a18"></div><div class="a" style="left:417px;top:781px;width:3px;height:1px;background:#827a18"></div><div class="a" style="left:431px;top:781px;width:3px;height:1px;background:#827a18"></div><div class="a" style="left:441px;top:781px;width:3px;height:1px;background:#827a18"></div><div class="a" style="left:451px;top:781px;width:3px;height:1px;background:#827a18"></div><div class="pc" style="left:462px;top:776px;color:#f0f000">D</div><div class="pc" style="left:470.5px;top:776px;color:#f0f000">-</div><div class="pc" style="left:482px;top:776px;color:#f0f000">3</div><div class="pc" style="left:496px;top:776px;color:#80ff80">0</div><div class="pc" style="left:506px;top:776px;color:#80ff80">0</div><div class="a" style="left:524px;top:781px;width:3px;height:1px;background:#827a18"></div><div class="a" style="left:538px;top:781px;width:3px;height:1px;background:#827a18"></div><div class="a" style="left:548px;top:781px;width:3px;height:1px;background:#827a18"></div><div class="a" style="left:558px;top:781px;width:3px;height:1px;background:#827a18"></div><div class="pc" style="left:569px;top:776px;color:#f0f000">7</div><div class="pc" style="left:577.5px;top:776px;color:#f0f000">-</div><div class="pc" style="left:589px;top:776px;color:#f0f000">#</div><div class="pc" style="left:603px;top:776px;color:#80ff80">0</div><div class="pc" style="left:613px;top:776px;color:#80ff80">0</div><div class="pc" style="left:627px;top:776px;color:#8080ff">A</div><div class="pc" style="left:641px;top:776px;color:#ff8080">A</div><div class="pc" style="left:651px;top:776px;color:#f0f000">0</div><div class="pc" style="left:661px;top:776px;color:#f0f000">7</div><div class="pc" style="left:676px;top:776px;color:#f0f000">C</div><div class="pc" style="left:686px;top:776px;color:#f0f000">#</div><div class="pc" style="left:696px;top:776px;color:#f0f000">3</div><div class="pc" style="left:710px;top:776px;color:#80ff80">0</div><div class="pc" style="left:720px;top:776px;color:#80ff80">1</div><div class="a" style="left:738px;top:781px;width:3px;height:1px;background:#827a18"></div><div class="pc" style="left:748px;top:776px;color:#ff8080">Z</div><div class="pc" style="left:758px;top:776px;color:#f0f000">0</div><div class="pc" style="left:768px;top:776px;color:#f0f000">0</div><div class="rn" style="top:789px;color:#00f000">3D</div><div class="a" style="left:48px;top:793px;width:3px;height:1px;background:#006e00"></div><div class="a" style="left:58px;top:793px;width:3px;height:1px;background:#006e00"></div><div class="a" style="left:68px;top:793px;width:3px;height:1px;background:#006e00"></div><div class="a" style="left:82px;top:793px;width:3px;height:1px;background:#006e00"></div><div class="a" style="left:92px;top:793px;width:3px;height:1px;background:#006e00"></div><div class="a" style="left:106px;top:793px;width:3px;height:1px;background:#006e00"></div><div class="a" style="left:120px;top:793px;width:3px;height:1px;background:#006e00"></div><div class="a" style="left:130px;top:793px;width:3px;height:1px;background:#006e00"></div><div class="a" style="left:140px;top:793px;width:3px;height:1px;background:#006e00"></div><div class="a" style="left:154px;top:793px;width:3px;height:1px;background:#006e00"></div><div class="a" style="left:164px;top:793px;width:3px;height:1px;background:#006e00"></div><div class="a" style="left:174px;top:793px;width:3px;height:1px;background:#006e00"></div><div class="a" style="left:188px;top:793px;width:3px;height:1px;background:#006e00"></div><div class="a" style="left:198px;top:793px;width:3px;height:1px;background:#006e00"></div><div class="a" style="left:208px;top:793px;width:3px;height:1px;background:#006e00"></div><div class="a" style="left:222px;top:793px;width:3px;height:1px;background:#006e00"></div><div class="a" style="left:232px;top:793px;width:3px;height:1px;background:#006e00"></div><div class="a" style="left:242px;top:793px;width:3px;height:1px;background:#006e00"></div><div class="a" style="left:257px;top:793px;width:3px;height:1px;background:#006e00"></div><div class="a" style="left:267px;top:793px;width:3px;height:1px;background:#006e00"></div><div class="a" style="left:277px;top:793px;width:3px;height:1px;background:#006e00"></div><div class="a" style="left:291px;top:793px;width:3px;height:1px;background:#006e00"></div><div class="a" style="left:301px;top:793px;width:3px;height:1px;background:#006e00"></div><div class="a" style="left:315px;top:793px;width:3px;height:1px;background:#006e00"></div><div class="pc" style="left:325px;top:788px;color:#ff8080">4</div><div class="pc" style="left:335px;top:788px;color:#00f000">6</div><div class="pc" style="left:345px;top:788px;color:#00f000">2</div><div class="a" style="left:363px;top:793px;width:3px;height:1px;background:#006e00"></div><div class="a" style="left:373px;top:793px;width:3px;height:1px;background:#006e00"></div><div class="a" style="left:383px;top:793px;width:3px;height:1px;background:#006e00"></div><div class="a" style="left:397px;top:793px;width:3px;height:1px;background:#006e00"></div><div class="a" style="left:407px;top:793px;width:3px;height:1px;background:#006e00"></div><div class="a" style="left:417px;top:793px;width:3px;height:1px;background:#006e00"></div><div class="a" style="left:431px;top:793px;width:3px;height:1px;background:#006e00"></div><div class="a" style="left:441px;top:793px;width:3px;height:1px;background:#006e00"></div><div class="a" style="left:451px;top:793px;width:3px;height:1px;background:#006e00"></div><div class="a" style="left:466px;top:793px;width:3px;height:1px;background:#006e00"></div><div class="a" style="left:476px;top:793px;width:3px;height:1px;background:#006e00"></div><div class="a" style="left:486px;top:793px;width:3px;height:1px;background:#006e00"></div><div class="a" style="left:500px;top:793px;width:3px;height:1px;background:#006e00"></div><div class="a" style="left:510px;top:793px;width:3px;height:1px;background:#006e00"></div><div class="a" style="left:524px;top:793px;width:3px;height:1px;background:#006e00"></div><div class="a" style="left:538px;top:793px;width:3px;height:1px;background:#006e00"></div><div class="a" style="left:548px;top:793px;width:3px;height:1px;background:#006e00"></div><div class="a" style="left:558px;top:793px;width:3px;height:1px;background:#006e00"></div><div class="a" style="left:573px;top:793px;width:3px;height:1px;background:#006e00"></div><div class="a" style="left:583px;top:793px;width:3px;height:1px;background:#006e00"></div><div class="a" style="left:593px;top:793px;width:3px;height:1px;background:#006e00"></div><div class="a" style="left:607px;top:793px;width:3px;height:1px;background:#006e00"></div><div class="a" style="left:617px;top:793px;width:3px;height:1px;background:#006e00"></div><div class="a" style="left:631px;top:793px;width:3px;height:1px;background:#006e00"></div><div class="a" style="left:645px;top:793px;width:3px;height:1px;background:#006e00"></div><div class="a" style="left:655px;top:793px;width:3px;height:1px;background:#006e00"></div><div class="a" style="left:665px;top:793px;width:3px;height:1px;background:#006e00"></div><div class="a" style="left:680px;top:793px;width:3px;height:1px;background:#006e00"></div><div class="a" style="left:690px;top:793px;width:3px;height:1px;background:#006e00"></div><div class="a" style="left:700px;top:793px;width:3px;height:1px;background:#006e00"></div><div class="a" style="left:714px;top:793px;width:3px;height:1px;background:#006e00"></div><div class="a" style="left:724px;top:793px;width:3px;height:1px;background:#006e00"></div><div class="a" style="left:738px;top:793px;width:3px;height:1px;background:#006e00"></div><div class="a" style="left:752px;top:793px;width:3px;height:1px;background:#006e00"></div><div class="a" style="left:762px;top:793px;width:3px;height:1px;background:#006e00"></div><div class="a" style="left:772px;top:793px;width:3px;height:1px;background:#006e00"></div><div class="rn" style="top:801px;color:#00f000">3E</div><div class="a" style="left:48px;top:805px;width:3px;height:1px;background:#006e00"></div><div class="a" style="left:58px;top:805px;width:3px;height:1px;background:#006e00"></div><div class="a" style="left:68px;top:805px;width:3px;height:1px;background:#006e00"></div><div class="a" style="left:82px;top:805px;width:3px;height:1px;background:#006e00"></div><div class="a" style="left:92px;top:805px;width:3px;height:1px;background:#006e00"></div><div class="a" style="left:106px;top:805px;width:3px;height:1px;background:#006e00"></div><div class="a" style="left:120px;top:805px;width:3px;height:1px;background:#006e00"></div><div class="a" style="left:130px;top:805px;width:3px;height:1px;background:#006e00"></div><div class="a" style="left:140px;top:805px;width:3px;height:1px;background:#006e00"></div><div class="a" style="left:154px;top:805px;width:3px;height:1px;background:#006e00"></div><div class="a" style="left:164px;top:805px;width:3px;height:1px;background:#006e00"></div><div class="a" style="left:174px;top:805px;width:3px;height:1px;background:#006e00"></div><div class="a" style="left:188px;top:805px;width:3px;height:1px;background:#006e00"></div><div class="a" style="left:198px;top:805px;width:3px;height:1px;background:#006e00"></div><div class="a" style="left:208px;top:805px;width:3px;height:1px;background:#006e00"></div><div class="a" style="left:222px;top:805px;width:3px;height:1px;background:#006e00"></div><div class="a" style="left:232px;top:805px;width:3px;height:1px;background:#006e00"></div><div class="a" style="left:242px;top:805px;width:3px;height:1px;background:#006e00"></div><div class="a" style="left:257px;top:805px;width:3px;height:1px;background:#006e00"></div><div class="a" style="left:267px;top:805px;width:3px;height:1px;background:#006e00"></div><div class="a" style="left:277px;top:805px;width:3px;height:1px;background:#006e00"></div><div class="a" style="left:291px;top:805px;width:3px;height:1px;background:#006e00"></div><div class="a" style="left:301px;top:805px;width:3px;height:1px;background:#006e00"></div><div class="a" style="left:315px;top:805px;width:3px;height:1px;background:#006e00"></div><div class="a" style="left:329px;top:805px;width:3px;height:1px;background:#006e00"></div><div class="a" style="left:339px;top:805px;width:3px;height:1px;background:#006e00"></div><div class="a" style="left:349px;top:805px;width:3px;height:1px;background:#006e00"></div><div class="a" style="left:363px;top:805px;width:3px;height:1px;background:#006e00"></div><div class="a" style="left:373px;top:805px;width:3px;height:1px;background:#006e00"></div><div class="a" style="left:383px;top:805px;width:3px;height:1px;background:#006e00"></div><div class="a" style="left:397px;top:805px;width:3px;height:1px;background:#006e00"></div><div class="a" style="left:407px;top:805px;width:3px;height:1px;background:#006e00"></div><div class="a" style="left:417px;top:805px;width:3px;height:1px;background:#006e00"></div><div class="a" style="left:431px;top:805px;width:3px;height:1px;background:#006e00"></div><div class="a" style="left:441px;top:805px;width:3px;height:1px;background:#006e00"></div><div class="a" style="left:451px;top:805px;width:3px;height:1px;background:#006e00"></div><div class="a" style="left:466px;top:805px;width:3px;height:1px;background:#006e00"></div><div class="a" style="left:476px;top:805px;width:3px;height:1px;background:#006e00"></div><div class="a" style="left:486px;top:805px;width:3px;height:1px;background:#006e00"></div><div class="a" style="left:500px;top:805px;width:3px;height:1px;background:#006e00"></div><div class="a" style="left:510px;top:805px;width:3px;height:1px;background:#006e00"></div><div class="a" style="left:524px;top:805px;width:3px;height:1px;background:#006e00"></div><div class="a" style="left:538px;top:805px;width:3px;height:1px;background:#006e00"></div><div class="a" style="left:548px;top:805px;width:3px;height:1px;background:#006e00"></div><div class="a" style="left:558px;top:805px;width:3px;height:1px;background:#006e00"></div><div class="a" style="left:573px;top:805px;width:3px;height:1px;background:#006e00"></div><div class="a" style="left:583px;top:805px;width:3px;height:1px;background:#006e00"></div><div class="a" style="left:593px;top:805px;width:3px;height:1px;background:#006e00"></div><div class="a" style="left:607px;top:805px;width:3px;height:1px;background:#006e00"></div><div class="a" style="left:617px;top:805px;width:3px;height:1px;background:#006e00"></div><div class="a" style="left:631px;top:805px;width:3px;height:1px;background:#006e00"></div><div class="a" style="left:645px;top:805px;width:3px;height:1px;background:#006e00"></div><div class="a" style="left:655px;top:805px;width:3px;height:1px;background:#006e00"></div><div class="a" style="left:665px;top:805px;width:3px;height:1px;background:#006e00"></div><div class="a" style="left:680px;top:805px;width:3px;height:1px;background:#006e00"></div><div class="a" style="left:690px;top:805px;width:3px;height:1px;background:#006e00"></div><div class="a" style="left:700px;top:805px;width:3px;height:1px;background:#006e00"></div><div class="a" style="left:714px;top:805px;width:3px;height:1px;background:#006e00"></div><div class="a" style="left:724px;top:805px;width:3px;height:1px;background:#006e00"></div><div class="a" style="left:738px;top:805px;width:3px;height:1px;background:#006e00"></div><div class="a" style="left:752px;top:805px;width:3px;height:1px;background:#006e00"></div><div class="a" style="left:762px;top:805px;width:3px;height:1px;background:#006e00"></div><div class="a" style="left:772px;top:805px;width:3px;height:1px;background:#006e00"></div><div class="rn" style="top:813px;color:#00f000">3F</div><div class="a" style="left:48px;top:817px;width:3px;height:1px;background:#006e00"></div><div class="a" style="left:58px;top:817px;width:3px;height:1px;background:#006e00"></div><div class="a" style="left:68px;top:817px;width:3px;height:1px;background:#006e00"></div><div class="a" style="left:82px;top:817px;width:3px;height:1px;background:#006e00"></div><div class="a" style="left:92px;top:817px;width:3px;height:1px;background:#006e00"></div><div class="a" style="left:106px;top:817px;width:3px;height:1px;background:#006e00"></div><div class="a" style="left:120px;top:817px;width:3px;height:1px;background:#006e00"></div><div class="a" style="left:130px;top:817px;width:3px;height:1px;background:#006e00"></div><div class="a" style="left:140px;top:817px;width:3px;height:1px;background:#006e00"></div><div class="a" style="left:154px;top:817px;width:3px;height:1px;background:#006e00"></div><div class="a" style="left:164px;top:817px;width:3px;height:1px;background:#006e00"></div><div class="a" style="left:174px;top:817px;width:3px;height:1px;background:#006e00"></div><div class="a" style="left:188px;top:817px;width:3px;height:1px;background:#006e00"></div><div class="a" style="left:198px;top:817px;width:3px;height:1px;background:#006e00"></div><div class="a" style="left:208px;top:817px;width:3px;height:1px;background:#006e00"></div><div class="a" style="left:222px;top:817px;width:3px;height:1px;background:#006e00"></div><div class="a" style="left:232px;top:817px;width:3px;height:1px;background:#006e00"></div><div class="a" style="left:242px;top:817px;width:3px;height:1px;background:#006e00"></div><div class="a" style="left:257px;top:817px;width:3px;height:1px;background:#006e00"></div><div class="a" style="left:267px;top:817px;width:3px;height:1px;background:#006e00"></div><div class="a" style="left:277px;top:817px;width:3px;height:1px;background:#006e00"></div><div class="a" style="left:291px;top:817px;width:3px;height:1px;background:#006e00"></div><div class="a" style="left:301px;top:817px;width:3px;height:1px;background:#006e00"></div><div class="a" style="left:315px;top:817px;width:3px;height:1px;background:#006e00"></div><div class="a" style="left:329px;top:817px;width:3px;height:1px;background:#006e00"></div><div class="a" style="left:339px;top:817px;width:3px;height:1px;background:#006e00"></div><div class="a" style="left:349px;top:817px;width:3px;height:1px;background:#006e00"></div><div class="a" style="left:363px;top:817px;width:3px;height:1px;background:#006e00"></div><div class="a" style="left:373px;top:817px;width:3px;height:1px;background:#006e00"></div><div class="a" style="left:383px;top:817px;width:3px;height:1px;background:#006e00"></div><div class="a" style="left:397px;top:817px;width:3px;height:1px;background:#006e00"></div><div class="a" style="left:407px;top:817px;width:3px;height:1px;background:#006e00"></div><div class="a" style="left:417px;top:817px;width:3px;height:1px;background:#006e00"></div><div class="a" style="left:431px;top:817px;width:3px;height:1px;background:#006e00"></div><div class="a" style="left:441px;top:817px;width:3px;height:1px;background:#006e00"></div><div class="a" style="left:451px;top:817px;width:3px;height:1px;background:#006e00"></div><div class="a" style="left:468px;top:816px;width:18px;height:3px;background:#00f000"></div><div class="a" style="left:500px;top:817px;width:3px;height:1px;background:#006e00"></div><div class="a" style="left:510px;top:817px;width:3px;height:1px;background:#006e00"></div><div class="a" style="left:524px;top:817px;width:3px;height:1px;background:#006e00"></div><div class="pc" style="left:534px;top:812px;color:#ff8080">G</div><div class="pc" style="left:544px;top:812px;color:#00f000">0</div><div class="pc" style="left:554px;top:812px;color:#00f000">2</div><div class="a" style="left:573px;top:817px;width:3px;height:1px;background:#006e00"></div><div class="a" style="left:583px;top:817px;width:3px;height:1px;background:#006e00"></div><div class="a" style="left:593px;top:817px;width:3px;height:1px;background:#006e00"></div><div class="a" style="left:607px;top:817px;width:3px;height:1px;background:#006e00"></div><div class="a" style="left:617px;top:817px;width:3px;height:1px;background:#006e00"></div><div class="a" style="left:631px;top:817px;width:3px;height:1px;background:#006e00"></div><div class="a" style="left:645px;top:817px;width:3px;height:1px;background:#006e00"></div><div class="a" style="left:655px;top:817px;width:3px;height:1px;background:#006e00"></div><div class="a" style="left:665px;top:817px;width:3px;height:1px;background:#006e00"></div><div class="a" style="left:680px;top:817px;width:3px;height:1px;background:#006e00"></div><div class="a" style="left:690px;top:817px;width:3px;height:1px;background:#006e00"></div><div class="a" style="left:700px;top:817px;width:3px;height:1px;background:#006e00"></div><div class="a" style="left:714px;top:817px;width:3px;height:1px;background:#006e00"></div><div class="a" style="left:724px;top:817px;width:3px;height:1px;background:#006e00"></div><div class="a" style="left:738px;top:817px;width:3px;height:1px;background:#006e00"></div><div class="a" style="left:752px;top:817px;width:3px;height:1px;background:#006e00"></div><div class="a" style="left:762px;top:817px;width:3px;height:1px;background:#006e00"></div><div class="a" style="left:772px;top:817px;width:3px;height:1px;background:#006e00"></div><div class="rn" style="top:825px;color:#ffff60">00</div><div class="a" style="left:42px;top:824px;width:738px;height:12px;background:#141300;border-top:1px solid #1e1c06"></div><div class="pc" style="left:44px;top:824px;color:#8c8c34">F</div><div class="pc" style="left:54px;top:824px;color:#8c8c34">#</div><div class="pc" style="left:64px;top:824px;color:#8c8c34">5</div><div class="pc" style="left:78px;top:824px;color:#468c46">0</div><div class="pc" style="left:88px;top:824px;color:#468c46">3</div><div class="pc" style="left:102px;top:824px;color:#46468c">B</div><div class="pc" style="left:116px;top:824px;color:#8c4646">A</div><div class="pc" style="left:126px;top:824px;color:#8c8c34">0</div><div class="pc" style="left:136px;top:824px;color:#8c8c34">0</div><div class="pc" style="left:150px;top:824px;color:#8c4646">4</div><div class="pc" style="left:160px;top:824px;color:#8c8c34">0</div><div class="pc" style="left:170px;top:824px;color:#8c8c34">0</div><div class="a" style="left:188px;top:829px;width:3px;height:1px;background:#5d5822"></div><div class="a" style="left:198px;top:829px;width:3px;height:1px;background:#5d5822"></div><div class="a" style="left:208px;top:829px;width:3px;height:1px;background:#5d5822"></div><div class="a" style="left:222px;top:829px;width:3px;height:1px;background:#5d5822"></div><div class="a" style="left:232px;top:829px;width:3px;height:1px;background:#5d5822"></div><div class="a" style="left:242px;top:829px;width:3px;height:1px;background:#5d5822"></div><div class="pc" style="left:253px;top:824px;color:#8c8c34">B</div><div class="pc" style="left:261.5px;top:824px;color:#8c8c34">-</div><div class="pc" style="left:273px;top:824px;color:#8c8c34">2</div><div class="pc" style="left:287px;top:824px;color:#468c46">0</div><div class="pc" style="left:297px;top:824px;color:#468c46">0</div><div class="pc" style="left:311px;top:824px;color:#46468c">8</div><div class="pc" style="left:325px;top:824px;color:#8c4646">V</div><div class="pc" style="left:335px;top:824px;color:#8c8c34">0</div><div class="pc" style="left:345px;top:824px;color:#8c8c34">1</div><div class="pc" style="left:359px;top:824px;color:#8c4646">4</div><div class="pc" style="left:369px;top:824px;color:#8c8c34">0</div><div class="pc" style="left:379px;top:824px;color:#8c8c34">0</div><div class="pc" style="left:393px;top:824px;color:#8c4646">A</div><div class="pc" style="left:403px;top:824px;color:#8c8c34">0</div><div class="pc" style="left:413px;top:824px;color:#8c8c34">0</div><div class="pc" style="left:427px;top:824px;color:#8c4646">P</div><div class="pc" style="left:437px;top:824px;color:#8c8c34">8</div><div class="pc" style="left:447px;top:824px;color:#8c8c34">0</div><div class="pc" style="left:462px;top:824px;color:#8c8c34">B</div><div class="pc" style="left:470.5px;top:824px;color:#8c8c34">-</div><div class="pc" style="left:482px;top:824px;color:#8c8c34">2</div><div class="pc" style="left:496px;top:824px;color:#468c46">0</div><div class="pc" style="left:506px;top:824px;color:#468c46">0</div><div class="a" style="left:524px;top:829px;width:3px;height:1px;background:#5d5822"></div><div class="a" style="left:538px;top:829px;width:3px;height:1px;background:#5d5822"></div><div class="a" style="left:548px;top:829px;width:3px;height:1px;background:#5d5822"></div><div class="a" style="left:558px;top:829px;width:3px;height:1px;background:#5d5822"></div><div class="pc" style="left:569px;top:824px;color:#8c8c34">D</div><div class="pc" style="left:577.5px;top:824px;color:#8c8c34">-</div><div class="pc" style="left:589px;top:824px;color:#8c8c34">#</div><div class="pc" style="left:603px;top:824px;color:#468c46">0</div><div class="pc" style="left:613px;top:824px;color:#468c46">0</div><div class="pc" style="left:627px;top:824px;color:#46468c">8</div><div class="pc" style="left:641px;top:824px;color:#8c4646">A</div><div class="pc" style="left:651px;top:824px;color:#8c8c34">0</div><div class="pc" style="left:661px;top:824px;color:#8c8c34">A</div><div class="pc" style="left:676px;top:824px;color:#8c8c34">C</div><div class="pc" style="left:684.5px;top:824px;color:#8c8c34">-</div><div class="pc" style="left:696px;top:824px;color:#8c8c34">3</div><div class="pc" style="left:710px;top:824px;color:#468c46">0</div><div class="pc" style="left:720px;top:824px;color:#468c46">1</div><div class="a" style="left:738px;top:829px;width:3px;height:1px;background:#5d5822"></div><div class="pc" style="left:748px;top:824px;color:#8c4646">Z</div><div class="pc" style="left:758px;top:824px;color:#8c8c34">0</div><div class="pc" style="left:768px;top:824px;color:#8c8c34">0</div><div class="rn" style="top:837px;color:#00f000">01</div><div class="a" style="left:48px;top:841px;width:3px;height:1px;background:#004400"></div><div class="a" style="left:58px;top:841px;width:3px;height:1px;background:#004400"></div><div class="a" style="left:68px;top:841px;width:3px;height:1px;background:#004400"></div><div class="a" style="left:82px;top:841px;width:3px;height:1px;background:#004400"></div><div class="a" style="left:92px;top:841px;width:3px;height:1px;background:#004400"></div><div class="a" style="left:106px;top:841px;width:3px;height:1px;background:#004400"></div><div class="a" style="left:120px;top:841px;width:3px;height:1px;background:#004400"></div><div class="a" style="left:130px;top:841px;width:3px;height:1px;background:#004400"></div><div class="a" style="left:140px;top:841px;width:3px;height:1px;background:#004400"></div><div class="a" style="left:154px;top:841px;width:3px;height:1px;background:#004400"></div><div class="a" style="left:164px;top:841px;width:3px;height:1px;background:#004400"></div><div class="a" style="left:174px;top:841px;width:3px;height:1px;background:#004400"></div><div class="a" style="left:188px;top:841px;width:3px;height:1px;background:#004400"></div><div class="a" style="left:198px;top:841px;width:3px;height:1px;background:#004400"></div><div class="a" style="left:208px;top:841px;width:3px;height:1px;background:#004400"></div><div class="a" style="left:222px;top:841px;width:3px;height:1px;background:#004400"></div><div class="a" style="left:232px;top:841px;width:3px;height:1px;background:#004400"></div><div class="a" style="left:242px;top:841px;width:3px;height:1px;background:#004400"></div><div class="a" style="left:257px;top:841px;width:3px;height:1px;background:#004400"></div><div class="a" style="left:267px;top:841px;width:3px;height:1px;background:#004400"></div><div class="a" style="left:277px;top:841px;width:3px;height:1px;background:#004400"></div><div class="a" style="left:291px;top:841px;width:3px;height:1px;background:#004400"></div><div class="a" style="left:301px;top:841px;width:3px;height:1px;background:#004400"></div><div class="pc" style="left:311px;top:836px;color:#46468c">2</div><div class="pc" style="left:325px;top:836px;color:#8c4646">G</div><div class="pc" style="left:335px;top:836px;color:#008400">0</div><div class="pc" style="left:345px;top:836px;color:#008400">2</div><div class="a" style="left:363px;top:841px;width:3px;height:1px;background:#004400"></div><div class="a" style="left:373px;top:841px;width:3px;height:1px;background:#004400"></div><div class="a" style="left:383px;top:841px;width:3px;height:1px;background:#004400"></div><div class="a" style="left:397px;top:841px;width:3px;height:1px;background:#004400"></div><div class="a" style="left:407px;top:841px;width:3px;height:1px;background:#004400"></div><div class="a" style="left:417px;top:841px;width:3px;height:1px;background:#004400"></div><div class="a" style="left:431px;top:841px;width:3px;height:1px;background:#004400"></div><div class="a" style="left:441px;top:841px;width:3px;height:1px;background:#004400"></div><div class="a" style="left:451px;top:841px;width:3px;height:1px;background:#004400"></div><div class="a" style="left:468px;top:840px;width:18px;height:3px;background:#008400"></div><div class="a" style="left:500px;top:841px;width:3px;height:1px;background:#004400"></div><div class="a" style="left:510px;top:841px;width:3px;height:1px;background:#004400"></div><div class="a" style="left:524px;top:841px;width:3px;height:1px;background:#004400"></div><div class="pc" style="left:534px;top:836px;color:#8c4646">G</div><div class="pc" style="left:544px;top:836px;color:#008400">0</div><div class="pc" style="left:554px;top:836px;color:#008400">2</div><div class="a" style="left:573px;top:841px;width:3px;height:1px;background:#004400"></div><div class="a" style="left:583px;top:841px;width:3px;height:1px;background:#004400"></div><div class="a" style="left:593px;top:841px;width:3px;height:1px;background:#004400"></div><div class="a" style="left:607px;top:841px;width:3px;height:1px;background:#004400"></div><div class="a" style="left:617px;top:841px;width:3px;height:1px;background:#004400"></div><div class="a" style="left:631px;top:841px;width:3px;height:1px;background:#004400"></div><div class="a" style="left:645px;top:841px;width:3px;height:1px;background:#004400"></div><div class="a" style="left:655px;top:841px;width:3px;height:1px;background:#004400"></div><div class="a" style="left:665px;top:841px;width:3px;height:1px;background:#004400"></div><div class="a" style="left:680px;top:841px;width:3px;height:1px;background:#004400"></div><div class="a" style="left:690px;top:841px;width:3px;height:1px;background:#004400"></div><div class="a" style="left:700px;top:841px;width:3px;height:1px;background:#004400"></div><div class="a" style="left:714px;top:841px;width:3px;height:1px;background:#004400"></div><div class="a" style="left:724px;top:841px;width:3px;height:1px;background:#004400"></div><div class="a" style="left:738px;top:841px;width:3px;height:1px;background:#004400"></div><div class="a" style="left:752px;top:841px;width:3px;height:1px;background:#004400"></div><div class="a" style="left:762px;top:841px;width:3px;height:1px;background:#004400"></div><div class="a" style="left:772px;top:841px;width:3px;height:1px;background:#004400"></div><div class="rn" style="top:849px;color:#00f000">02</div><div class="a" style="left:48px;top:853px;width:3px;height:1px;background:#004400"></div><div class="a" style="left:58px;top:853px;width:3px;height:1px;background:#004400"></div><div class="a" style="left:68px;top:853px;width:3px;height:1px;background:#004400"></div><div class="a" style="left:82px;top:853px;width:3px;height:1px;background:#004400"></div><div class="a" style="left:92px;top:853px;width:3px;height:1px;background:#004400"></div><div class="a" style="left:106px;top:853px;width:3px;height:1px;background:#004400"></div><div class="pc" style="left:116px;top:848px;color:#8c4646">4</div><div class="pc" style="left:126px;top:848px;color:#008400">7</div><div class="pc" style="left:136px;top:848px;color:#008400">2</div><div class="pc" style="left:150px;top:848px;color:#8c4646">A</div><div class="pc" style="left:160px;top:848px;color:#008400">0</div><div class="pc" style="left:170px;top:848px;color:#008400">2</div><div class="a" style="left:188px;top:853px;width:3px;height:1px;background:#004400"></div><div class="a" style="left:198px;top:853px;width:3px;height:1px;background:#004400"></div><div class="a" style="left:208px;top:853px;width:3px;height:1px;background:#004400"></div><div class="a" style="left:222px;top:853px;width:3px;height:1px;background:#004400"></div><div class="a" style="left:232px;top:853px;width:3px;height:1px;background:#004400"></div><div class="a" style="left:242px;top:853px;width:3px;height:1px;background:#004400"></div><div class="pc" style="left:253px;top:848px;color:#008400">D</div><div class="pc" style="left:261.5px;top:848px;color:#008400">-</div><div class="pc" style="left:273px;top:848px;color:#008400">3</div><div class="pc" style="left:287px;top:848px;color:#468c46">0</div><div class="pc" style="left:297px;top:848px;color:#468c46">0</div><div class="pc" style="left:311px;top:848px;color:#46468c">8</div><div class="a" style="left:329px;top:853px;width:3px;height:1px;background:#004400"></div><div class="a" style="left:339px;top:853px;width:3px;height:1px;background:#004400"></div><div class="a" style="left:349px;top:853px;width:3px;height:1px;background:#004400"></div><div class="a" style="left:363px;top:853px;width:3px;height:1px;background:#004400"></div><div class="a" style="left:373px;top:853px;width:3px;height:1px;background:#004400"></div><div class="a" style="left:383px;top:853px;width:3px;height:1px;background:#004400"></div><div class="a" style="left:397px;top:853px;width:3px;height:1px;background:#004400"></div><div class="a" style="left:407px;top:853px;width:3px;height:1px;background:#004400"></div><div class="a" style="left:417px;top:853px;width:3px;height:1px;background:#004400"></div><div class="a" style="left:431px;top:853px;width:3px;height:1px;background:#004400"></div><div class="a" style="left:441px;top:853px;width:3px;height:1px;background:#004400"></div><div class="a" style="left:451px;top:853px;width:3px;height:1px;background:#004400"></div><div class="pc" style="left:462px;top:848px;color:#008400">B</div><div class="pc" style="left:470.5px;top:848px;color:#008400">-</div><div class="pc" style="left:482px;top:848px;color:#008400">2</div><div class="pc" style="left:496px;top:848px;color:#468c46">0</div><div class="pc" style="left:506px;top:848px;color:#468c46">0</div><div class="a" style="left:524px;top:853px;width:3px;height:1px;background:#004400"></div><div class="a" style="left:538px;top:853px;width:3px;height:1px;background:#004400"></div><div class="a" style="left:548px;top:853px;width:3px;height:1px;background:#004400"></div><div class="a" style="left:558px;top:853px;width:3px;height:1px;background:#004400"></div><div class="a" style="left:573px;top:853px;width:3px;height:1px;background:#004400"></div><div class="a" style="left:583px;top:853px;width:3px;height:1px;background:#004400"></div><div class="a" style="left:593px;top:853px;width:3px;height:1px;background:#004400"></div><div class="a" style="left:607px;top:853px;width:3px;height:1px;background:#004400"></div><div class="a" style="left:617px;top:853px;width:3px;height:1px;background:#004400"></div><div class="a" style="left:631px;top:853px;width:3px;height:1px;background:#004400"></div><div class="a" style="left:645px;top:853px;width:3px;height:1px;background:#004400"></div><div class="a" style="left:655px;top:853px;width:3px;height:1px;background:#004400"></div><div class="a" style="left:665px;top:853px;width:3px;height:1px;background:#004400"></div><div class="a" style="left:680px;top:853px;width:3px;height:1px;background:#004400"></div><div class="a" style="left:690px;top:853px;width:3px;height:1px;background:#004400"></div><div class="a" style="left:700px;top:853px;width:3px;height:1px;background:#004400"></div><div class="a" style="left:714px;top:853px;width:3px;height:1px;background:#004400"></div><div class="a" style="left:724px;top:853px;width:3px;height:1px;background:#004400"></div><div class="a" style="left:738px;top:853px;width:3px;height:1px;background:#004400"></div><div class="a" style="left:752px;top:853px;width:3px;height:1px;background:#004400"></div><div class="a" style="left:762px;top:853px;width:3px;height:1px;background:#004400"></div><div class="a" style="left:772px;top:853px;width:3px;height:1px;background:#004400"></div><div class="rn" style="top:861px;color:#00f000">03</div><div class="a" style="left:48px;top:865px;width:3px;height:1px;background:#004400"></div><div class="a" style="left:58px;top:865px;width:3px;height:1px;background:#004400"></div><div class="a" style="left:68px;top:865px;width:3px;height:1px;background:#004400"></div><div class="a" style="left:82px;top:865px;width:3px;height:1px;background:#004400"></div><div class="a" style="left:92px;top:865px;width:3px;height:1px;background:#004400"></div><div class="a" style="left:106px;top:865px;width:3px;height:1px;background:#004400"></div><div class="a" style="left:120px;top:865px;width:3px;height:1px;background:#004400"></div><div class="a" style="left:130px;top:865px;width:3px;height:1px;background:#004400"></div><div class="a" style="left:140px;top:865px;width:3px;height:1px;background:#004400"></div><div class="a" style="left:154px;top:865px;width:3px;height:1px;background:#004400"></div><div class="a" style="left:164px;top:865px;width:3px;height:1px;background:#004400"></div><div class="a" style="left:174px;top:865px;width:3px;height:1px;background:#004400"></div><div class="a" style="left:188px;top:865px;width:3px;height:1px;background:#004400"></div><div class="a" style="left:198px;top:865px;width:3px;height:1px;background:#004400"></div><div class="a" style="left:208px;top:865px;width:3px;height:1px;background:#004400"></div><div class="a" style="left:222px;top:865px;width:3px;height:1px;background:#004400"></div><div class="a" style="left:232px;top:865px;width:3px;height:1px;background:#004400"></div><div class="a" style="left:242px;top:865px;width:3px;height:1px;background:#004400"></div><div class="a" style="left:257px;top:865px;width:3px;height:1px;background:#004400"></div><div class="a" style="left:267px;top:865px;width:3px;height:1px;background:#004400"></div><div class="a" style="left:277px;top:865px;width:3px;height:1px;background:#004400"></div><div class="a" style="left:291px;top:865px;width:3px;height:1px;background:#004400"></div><div class="a" style="left:301px;top:865px;width:3px;height:1px;background:#004400"></div><div class="pc" style="left:311px;top:860px;color:#46468c">2</div><div class="pc" style="left:325px;top:860px;color:#8c4646">G</div><div class="pc" style="left:335px;top:860px;color:#008400">0</div><div class="pc" style="left:345px;top:860px;color:#008400">2</div><div class="a" style="left:363px;top:865px;width:3px;height:1px;background:#004400"></div><div class="a" style="left:373px;top:865px;width:3px;height:1px;background:#004400"></div><div class="a" style="left:383px;top:865px;width:3px;height:1px;background:#004400"></div><div class="a" style="left:397px;top:865px;width:3px;height:1px;background:#004400"></div><div class="a" style="left:407px;top:865px;width:3px;height:1px;background:#004400"></div><div class="a" style="left:417px;top:865px;width:3px;height:1px;background:#004400"></div><div class="a" style="left:431px;top:865px;width:3px;height:1px;background:#004400"></div><div class="a" style="left:441px;top:865px;width:3px;height:1px;background:#004400"></div><div class="a" style="left:451px;top:865px;width:3px;height:1px;background:#004400"></div><div class="a" style="left:468px;top:864px;width:18px;height:3px;background:#008400"></div><div class="a" style="left:500px;top:865px;width:3px;height:1px;background:#004400"></div><div class="a" style="left:510px;top:865px;width:3px;height:1px;background:#004400"></div><div class="a" style="left:524px;top:865px;width:3px;height:1px;background:#004400"></div><div class="pc" style="left:534px;top:860px;color:#8c4646">G</div><div class="pc" style="left:544px;top:860px;color:#008400">0</div><div class="pc" style="left:554px;top:860px;color:#008400">2</div><div class="a" style="left:573px;top:865px;width:3px;height:1px;background:#004400"></div><div class="a" style="left:583px;top:865px;width:3px;height:1px;background:#004400"></div><div class="a" style="left:593px;top:865px;width:3px;height:1px;background:#004400"></div><div class="a" style="left:607px;top:865px;width:3px;height:1px;background:#004400"></div><div class="a" style="left:617px;top:865px;width:3px;height:1px;background:#004400"></div><div class="a" style="left:631px;top:865px;width:3px;height:1px;background:#004400"></div><div class="a" style="left:645px;top:865px;width:3px;height:1px;background:#004400"></div><div class="a" style="left:655px;top:865px;width:3px;height:1px;background:#004400"></div><div class="a" style="left:665px;top:865px;width:3px;height:1px;background:#004400"></div><div class="a" style="left:680px;top:865px;width:3px;height:1px;background:#004400"></div><div class="a" style="left:690px;top:865px;width:3px;height:1px;background:#004400"></div><div class="a" style="left:700px;top:865px;width:3px;height:1px;background:#004400"></div><div class="a" style="left:714px;top:865px;width:3px;height:1px;background:#004400"></div><div class="a" style="left:724px;top:865px;width:3px;height:1px;background:#004400"></div><div class="a" style="left:738px;top:865px;width:3px;height:1px;background:#004400"></div><div class="a" style="left:752px;top:865px;width:3px;height:1px;background:#004400"></div><div class="a" style="left:762px;top:865px;width:3px;height:1px;background:#004400"></div><div class="a" style="left:772px;top:865px;width:3px;height:1px;background:#004400"></div><div class="rn" style="top:873px;color:#f0f000">04</div><div class="a" style="left:42px;top:872px;width:738px;height:12px;background:#0a0a00;border-top:1px solid #121104"></div><div class="a" style="left:48px;top:877px;width:3px;height:1px;background:#504b0e"></div><div class="a" style="left:58px;top:877px;width:3px;height:1px;background:#504b0e"></div><div class="a" style="left:68px;top:877px;width:3px;height:1px;background:#504b0e"></div><div class="a" style="left:82px;top:877px;width:3px;height:1px;background:#504b0e"></div><div class="a" style="left:92px;top:877px;width:3px;height:1px;background:#504b0e"></div><div class="a" style="left:106px;top:877px;width:3px;height:1px;background:#504b0e"></div><div class="a" style="left:120px;top:877px;width:3px;height:1px;background:#504b0e"></div><div class="a" style="left:130px;top:877px;width:3px;height:1px;background:#504b0e"></div><div class="a" style="left:140px;top:877px;width:3px;height:1px;background:#504b0e"></div><div class="a" style="left:154px;top:877px;width:3px;height:1px;background:#504b0e"></div><div class="a" style="left:164px;top:877px;width:3px;height:1px;background:#504b0e"></div><div class="a" style="left:174px;top:877px;width:3px;height:1px;background:#504b0e"></div><div class="a" style="left:188px;top:877px;width:3px;height:1px;background:#504b0e"></div><div class="a" style="left:198px;top:877px;width:3px;height:1px;background:#504b0e"></div><div class="a" style="left:208px;top:877px;width:3px;height:1px;background:#504b0e"></div><div class="a" style="left:222px;top:877px;width:3px;height:1px;background:#504b0e"></div><div class="a" style="left:232px;top:877px;width:3px;height:1px;background:#504b0e"></div><div class="a" style="left:242px;top:877px;width:3px;height:1px;background:#504b0e"></div><div class="pc" style="left:253px;top:872px;color:#848400">B</div><div class="pc" style="left:261.5px;top:872px;color:#848400">-</div><div class="pc" style="left:273px;top:872px;color:#848400">2</div><div class="pc" style="left:287px;top:872px;color:#468c46">0</div><div class="pc" style="left:297px;top:872px;color:#468c46">0</div><div class="pc" style="left:311px;top:872px;color:#46468c">8</div><div class="a" style="left:329px;top:877px;width:3px;height:1px;background:#504b0e"></div><div class="a" style="left:339px;top:877px;width:3px;height:1px;background:#504b0e"></div><div class="a" style="left:349px;top:877px;width:3px;height:1px;background:#504b0e"></div><div class="a" style="left:363px;top:877px;width:3px;height:1px;background:#504b0e"></div><div class="a" style="left:373px;top:877px;width:3px;height:1px;background:#504b0e"></div><div class="a" style="left:383px;top:877px;width:3px;height:1px;background:#504b0e"></div><div class="a" style="left:397px;top:877px;width:3px;height:1px;background:#504b0e"></div><div class="a" style="left:407px;top:877px;width:3px;height:1px;background:#504b0e"></div><div class="a" style="left:417px;top:877px;width:3px;height:1px;background:#504b0e"></div><div class="a" style="left:431px;top:877px;width:3px;height:1px;background:#504b0e"></div><div class="a" style="left:441px;top:877px;width:3px;height:1px;background:#504b0e"></div><div class="a" style="left:451px;top:877px;width:3px;height:1px;background:#504b0e"></div><div class="pc" style="left:462px;top:872px;color:#848400">B</div><div class="pc" style="left:470.5px;top:872px;color:#848400">-</div><div class="pc" style="left:482px;top:872px;color:#848400">2</div><div class="pc" style="left:496px;top:872px;color:#468c46">0</div><div class="pc" style="left:506px;top:872px;color:#468c46">0</div><div class="a" style="left:524px;top:877px;width:3px;height:1px;background:#504b0e"></div><div class="a" style="left:538px;top:877px;width:3px;height:1px;background:#504b0e"></div><div class="a" style="left:548px;top:877px;width:3px;height:1px;background:#504b0e"></div><div class="a" style="left:558px;top:877px;width:3px;height:1px;background:#504b0e"></div><div class="a" style="left:573px;top:877px;width:3px;height:1px;background:#504b0e"></div><div class="a" style="left:583px;top:877px;width:3px;height:1px;background:#504b0e"></div><div class="a" style="left:593px;top:877px;width:3px;height:1px;background:#504b0e"></div><div class="a" style="left:607px;top:877px;width:3px;height:1px;background:#504b0e"></div><div class="a" style="left:617px;top:877px;width:3px;height:1px;background:#504b0e"></div><div class="a" style="left:631px;top:877px;width:3px;height:1px;background:#504b0e"></div><div class="a" style="left:645px;top:877px;width:3px;height:1px;background:#504b0e"></div><div class="a" style="left:655px;top:877px;width:3px;height:1px;background:#504b0e"></div><div class="a" style="left:665px;top:877px;width:3px;height:1px;background:#504b0e"></div><div class="a" style="left:680px;top:877px;width:3px;height:1px;background:#504b0e"></div><div class="a" style="left:690px;top:877px;width:3px;height:1px;background:#504b0e"></div><div class="a" style="left:700px;top:877px;width:3px;height:1px;background:#504b0e"></div><div class="a" style="left:714px;top:877px;width:3px;height:1px;background:#504b0e"></div><div class="a" style="left:724px;top:877px;width:3px;height:1px;background:#504b0e"></div><div class="a" style="left:738px;top:877px;width:3px;height:1px;background:#504b0e"></div><div class="a" style="left:752px;top:877px;width:3px;height:1px;background:#504b0e"></div><div class="a" style="left:762px;top:877px;width:3px;height:1px;background:#504b0e"></div><div class="a" style="left:772px;top:877px;width:3px;height:1px;background:#504b0e"></div><div class="rn" style="top:885px;color:#00f000">05</div><div class="a" style="left:48px;top:889px;width:3px;height:1px;background:#004400"></div><div class="a" style="left:58px;top:889px;width:3px;height:1px;background:#004400"></div><div class="a" style="left:68px;top:889px;width:3px;height:1px;background:#004400"></div><div class="a" style="left:82px;top:889px;width:3px;height:1px;background:#004400"></div><div class="a" style="left:92px;top:889px;width:3px;height:1px;background:#004400"></div><div class="a" style="left:106px;top:889px;width:3px;height:1px;background:#004400"></div><div class="a" style="left:120px;top:889px;width:3px;height:1px;background:#004400"></div><div class="a" style="left:130px;top:889px;width:3px;height:1px;background:#004400"></div><div class="a" style="left:140px;top:889px;width:3px;height:1px;background:#004400"></div><div class="a" style="left:154px;top:889px;width:3px;height:1px;background:#004400"></div><div class="a" style="left:164px;top:889px;width:3px;height:1px;background:#004400"></div><div class="a" style="left:174px;top:889px;width:3px;height:1px;background:#004400"></div><div class="a" style="left:188px;top:889px;width:3px;height:1px;background:#004400"></div><div class="a" style="left:198px;top:889px;width:3px;height:1px;background:#004400"></div><div class="a" style="left:208px;top:889px;width:3px;height:1px;background:#004400"></div><div class="a" style="left:222px;top:889px;width:3px;height:1px;background:#004400"></div><div class="a" style="left:232px;top:889px;width:3px;height:1px;background:#004400"></div><div class="a" style="left:242px;top:889px;width:3px;height:1px;background:#004400"></div><div class="a" style="left:257px;top:889px;width:3px;height:1px;background:#004400"></div><div class="a" style="left:267px;top:889px;width:3px;height:1px;background:#004400"></div><div class="a" style="left:277px;top:889px;width:3px;height:1px;background:#004400"></div><div class="a" style="left:291px;top:889px;width:3px;height:1px;background:#004400"></div><div class="a" style="left:301px;top:889px;width:3px;height:1px;background:#004400"></div><div class="pc" style="left:311px;top:884px;color:#46468c">2</div><div class="pc" style="left:325px;top:884px;color:#8c4646">G</div><div class="pc" style="left:335px;top:884px;color:#008400">0</div><div class="pc" style="left:345px;top:884px;color:#008400">2</div><div class="a" style="left:363px;top:889px;width:3px;height:1px;background:#004400"></div><div class="a" style="left:373px;top:889px;width:3px;height:1px;background:#004400"></div><div class="a" style="left:383px;top:889px;width:3px;height:1px;background:#004400"></div><div class="a" style="left:397px;top:889px;width:3px;height:1px;background:#004400"></div><div class="a" style="left:407px;top:889px;width:3px;height:1px;background:#004400"></div><div class="a" style="left:417px;top:889px;width:3px;height:1px;background:#004400"></div><div class="a" style="left:431px;top:889px;width:3px;height:1px;background:#004400"></div><div class="a" style="left:441px;top:889px;width:3px;height:1px;background:#004400"></div><div class="a" style="left:451px;top:889px;width:3px;height:1px;background:#004400"></div><div class="a" style="left:468px;top:888px;width:18px;height:3px;background:#008400"></div><div class="a" style="left:500px;top:889px;width:3px;height:1px;background:#004400"></div><div class="a" style="left:510px;top:889px;width:3px;height:1px;background:#004400"></div><div class="a" style="left:524px;top:889px;width:3px;height:1px;background:#004400"></div><div class="pc" style="left:534px;top:884px;color:#8c4646">G</div><div class="pc" style="left:544px;top:884px;color:#008400">0</div><div class="pc" style="left:554px;top:884px;color:#008400">2</div><div class="a" style="left:573px;top:889px;width:3px;height:1px;background:#004400"></div><div class="a" style="left:583px;top:889px;width:3px;height:1px;background:#004400"></div><div class="a" style="left:593px;top:889px;width:3px;height:1px;background:#004400"></div><div class="a" style="left:607px;top:889px;width:3px;height:1px;background:#004400"></div><div class="a" style="left:617px;top:889px;width:3px;height:1px;background:#004400"></div><div class="a" style="left:631px;top:889px;width:3px;height:1px;background:#004400"></div><div class="a" style="left:645px;top:889px;width:3px;height:1px;background:#004400"></div><div class="a" style="left:655px;top:889px;width:3px;height:1px;background:#004400"></div><div class="a" style="left:665px;top:889px;width:3px;height:1px;background:#004400"></div><div class="a" style="left:680px;top:889px;width:3px;height:1px;background:#004400"></div><div class="a" style="left:690px;top:889px;width:3px;height:1px;background:#004400"></div><div class="a" style="left:700px;top:889px;width:3px;height:1px;background:#004400"></div><div class="a" style="left:714px;top:889px;width:3px;height:1px;background:#004400"></div><div class="a" style="left:724px;top:889px;width:3px;height:1px;background:#004400"></div><div class="a" style="left:738px;top:889px;width:3px;height:1px;background:#004400"></div><div class="a" style="left:752px;top:889px;width:3px;height:1px;background:#004400"></div><div class="a" style="left:762px;top:889px;width:3px;height:1px;background:#004400"></div><div class="a" style="left:772px;top:889px;width:3px;height:1px;background:#004400"></div><div class="rn" style="top:897px;color:#00f000">06</div><div class="pc" style="left:44px;top:896px;color:#008400">F</div><div class="pc" style="left:54px;top:896px;color:#008400">#</div><div class="pc" style="left:64px;top:896px;color:#008400">3</div><div class="pc" style="left:78px;top:896px;color:#468c46">0</div><div class="pc" style="left:88px;top:896px;color:#468c46">0</div><div class="pc" style="left:102px;top:896px;color:#46468c">A</div><div class="pc" style="left:116px;top:896px;color:#8c4646">V</div><div class="pc" style="left:126px;top:896px;color:#008400">0</div><div class="pc" style="left:136px;top:896px;color:#008400">1</div><div class="pc" style="left:150px;top:896px;color:#8c4646">A</div><div class="pc" style="left:160px;top:896px;color:#008400">0</div><div class="pc" style="left:170px;top:896px;color:#008400">6</div><div class="pc" style="left:184px;top:896px;color:#8c4646">4</div><div class="pc" style="left:194px;top:896px;color:#008400">0</div><div class="pc" style="left:204px;top:896px;color:#008400">0</div><div class="pc" style="left:218px;top:896px;color:#8c4646">P</div><div class="pc" style="left:228px;top:896px;color:#008400">7</div><div class="pc" style="left:238px;top:896px;color:#008400">E</div><div class="a" style="left:257px;top:901px;width:3px;height:1px;background:#004400"></div><div class="a" style="left:267px;top:901px;width:3px;height:1px;background:#004400"></div><div class="a" style="left:277px;top:901px;width:3px;height:1px;background:#004400"></div><div class="a" style="left:291px;top:901px;width:3px;height:1px;background:#004400"></div><div class="a" style="left:301px;top:901px;width:3px;height:1px;background:#004400"></div><div class="a" style="left:315px;top:901px;width:3px;height:1px;background:#004400"></div><div class="a" style="left:329px;top:901px;width:3px;height:1px;background:#004400"></div><div class="a" style="left:339px;top:901px;width:3px;height:1px;background:#004400"></div><div class="a" style="left:349px;top:901px;width:3px;height:1px;background:#004400"></div><div class="a" style="left:363px;top:901px;width:3px;height:1px;background:#004400"></div><div class="a" style="left:373px;top:901px;width:3px;height:1px;background:#004400"></div><div class="a" style="left:383px;top:901px;width:3px;height:1px;background:#004400"></div><div class="a" style="left:397px;top:901px;width:3px;height:1px;background:#004400"></div><div class="a" style="left:407px;top:901px;width:3px;height:1px;background:#004400"></div><div class="a" style="left:417px;top:901px;width:3px;height:1px;background:#004400"></div><div class="a" style="left:431px;top:901px;width:3px;height:1px;background:#004400"></div><div class="a" style="left:441px;top:901px;width:3px;height:1px;background:#004400"></div><div class="a" style="left:451px;top:901px;width:3px;height:1px;background:#004400"></div><div class="a" style="left:466px;top:901px;width:3px;height:1px;background:#004400"></div><div class="a" style="left:476px;top:901px;width:3px;height:1px;background:#004400"></div><div class="a" style="left:486px;top:901px;width:3px;height:1px;background:#004400"></div><div class="a" style="left:500px;top:901px;width:3px;height:1px;background:#004400"></div><div class="a" style="left:510px;top:901px;width:3px;height:1px;background:#004400"></div><div class="a" style="left:524px;top:901px;width:3px;height:1px;background:#004400"></div><div class="a" style="left:538px;top:901px;width:3px;height:1px;background:#004400"></div><div class="a" style="left:548px;top:901px;width:3px;height:1px;background:#004400"></div><div class="a" style="left:558px;top:901px;width:3px;height:1px;background:#004400"></div><div class="pc" style="left:569px;top:896px;color:#008400">D</div><div class="pc" style="left:577.5px;top:896px;color:#008400">-</div><div class="pc" style="left:589px;top:896px;color:#008400">#</div><div class="pc" style="left:603px;top:896px;color:#468c46">0</div><div class="pc" style="left:613px;top:896px;color:#468c46">0</div><div class="pc" style="left:627px;top:896px;color:#46468c">8</div><div class="a" style="left:645px;top:901px;width:3px;height:1px;background:#004400"></div><div class="a" style="left:655px;top:901px;width:3px;height:1px;background:#004400"></div><div class="a" style="left:665px;top:901px;width:3px;height:1px;background:#004400"></div><div class="a" style="left:680px;top:901px;width:3px;height:1px;background:#004400"></div><div class="a" style="left:690px;top:901px;width:3px;height:1px;background:#004400"></div><div class="a" style="left:700px;top:901px;width:3px;height:1px;background:#004400"></div><div class="a" style="left:714px;top:901px;width:3px;height:1px;background:#004400"></div><div class="a" style="left:724px;top:901px;width:3px;height:1px;background:#004400"></div><div class="a" style="left:738px;top:901px;width:3px;height:1px;background:#004400"></div><div class="a" style="left:752px;top:901px;width:3px;height:1px;background:#004400"></div><div class="a" style="left:762px;top:901px;width:3px;height:1px;background:#004400"></div><div class="a" style="left:772px;top:901px;width:3px;height:1px;background:#004400"></div><div class="rn" style="top:909px;color:#00f000">07</div><div class="a" style="left:48px;top:913px;width:3px;height:1px;background:#004400"></div><div class="a" style="left:58px;top:913px;width:3px;height:1px;background:#004400"></div><div class="a" style="left:68px;top:913px;width:3px;height:1px;background:#004400"></div><div class="a" style="left:82px;top:913px;width:3px;height:1px;background:#004400"></div><div class="a" style="left:92px;top:913px;width:3px;height:1px;background:#004400"></div><div class="a" style="left:106px;top:913px;width:3px;height:1px;background:#004400"></div><div class="a" style="left:120px;top:913px;width:3px;height:1px;background:#004400"></div><div class="a" style="left:130px;top:913px;width:3px;height:1px;background:#004400"></div><div class="a" style="left:140px;top:913px;width:3px;height:1px;background:#004400"></div><div class="a" style="left:154px;top:913px;width:3px;height:1px;background:#004400"></div><div class="a" style="left:164px;top:913px;width:3px;height:1px;background:#004400"></div><div class="a" style="left:174px;top:913px;width:3px;height:1px;background:#004400"></div><div class="a" style="left:188px;top:913px;width:3px;height:1px;background:#004400"></div><div class="a" style="left:198px;top:913px;width:3px;height:1px;background:#004400"></div><div class="a" style="left:208px;top:913px;width:3px;height:1px;background:#004400"></div><div class="a" style="left:222px;top:913px;width:3px;height:1px;background:#004400"></div><div class="a" style="left:232px;top:913px;width:3px;height:1px;background:#004400"></div><div class="a" style="left:242px;top:913px;width:3px;height:1px;background:#004400"></div><div class="a" style="left:257px;top:913px;width:3px;height:1px;background:#004400"></div><div class="a" style="left:267px;top:913px;width:3px;height:1px;background:#004400"></div><div class="a" style="left:277px;top:913px;width:3px;height:1px;background:#004400"></div><div class="a" style="left:291px;top:913px;width:3px;height:1px;background:#004400"></div><div class="a" style="left:301px;top:913px;width:3px;height:1px;background:#004400"></div><div class="a" style="left:315px;top:913px;width:3px;height:1px;background:#004400"></div><div class="a" style="left:329px;top:913px;width:3px;height:1px;background:#004400"></div><div class="a" style="left:339px;top:913px;width:3px;height:1px;background:#004400"></div><div class="a" style="left:349px;top:913px;width:3px;height:1px;background:#004400"></div><div class="a" style="left:363px;top:913px;width:3px;height:1px;background:#004400"></div><div class="a" style="left:373px;top:913px;width:3px;height:1px;background:#004400"></div><div class="a" style="left:383px;top:913px;width:3px;height:1px;background:#004400"></div><div class="a" style="left:397px;top:913px;width:3px;height:1px;background:#004400"></div><div class="a" style="left:407px;top:913px;width:3px;height:1px;background:#004400"></div><div class="a" style="left:417px;top:913px;width:3px;height:1px;background:#004400"></div><div class="a" style="left:431px;top:913px;width:3px;height:1px;background:#004400"></div><div class="a" style="left:441px;top:913px;width:3px;height:1px;background:#004400"></div><div class="a" style="left:451px;top:913px;width:3px;height:1px;background:#004400"></div><div class="a" style="left:466px;top:913px;width:3px;height:1px;background:#004400"></div><div class="a" style="left:476px;top:913px;width:3px;height:1px;background:#004400"></div><div class="a" style="left:486px;top:913px;width:3px;height:1px;background:#004400"></div><div class="a" style="left:500px;top:913px;width:3px;height:1px;background:#004400"></div><div class="a" style="left:510px;top:913px;width:3px;height:1px;background:#004400"></div><div class="a" style="left:524px;top:913px;width:3px;height:1px;background:#004400"></div><div class="a" style="left:538px;top:913px;width:3px;height:1px;background:#004400"></div><div class="a" style="left:548px;top:913px;width:3px;height:1px;background:#004400"></div><div class="a" style="left:558px;top:913px;width:3px;height:1px;background:#004400"></div><div class="a" style="left:573px;top:913px;width:3px;height:1px;background:#004400"></div><div class="a" style="left:583px;top:913px;width:3px;height:1px;background:#004400"></div><div class="a" style="left:593px;top:913px;width:3px;height:1px;background:#004400"></div><div class="a" style="left:607px;top:913px;width:3px;height:1px;background:#004400"></div><div class="a" style="left:617px;top:913px;width:3px;height:1px;background:#004400"></div><div class="a" style="left:631px;top:913px;width:3px;height:1px;background:#004400"></div><div class="a" style="left:645px;top:913px;width:3px;height:1px;background:#004400"></div><div class="a" style="left:655px;top:913px;width:3px;height:1px;background:#004400"></div><div class="a" style="left:665px;top:913px;width:3px;height:1px;background:#004400"></div><div class="a" style="left:680px;top:913px;width:3px;height:1px;background:#004400"></div><div class="a" style="left:690px;top:913px;width:3px;height:1px;background:#004400"></div><div class="a" style="left:700px;top:913px;width:3px;height:1px;background:#004400"></div><div class="a" style="left:714px;top:913px;width:3px;height:1px;background:#004400"></div><div class="a" style="left:724px;top:913px;width:3px;height:1px;background:#004400"></div><div class="a" style="left:738px;top:913px;width:3px;height:1px;background:#004400"></div><div class="a" style="left:752px;top:913px;width:3px;height:1px;background:#004400"></div><div class="a" style="left:762px;top:913px;width:3px;height:1px;background:#004400"></div><div class="a" style="left:772px;top:913px;width:3px;height:1px;background:#004400"></div><div class="rn" style="top:921px;color:#f0f000">08</div><div class="a" style="left:42px;top:920px;width:738px;height:12px;background:#0a0a00;border-top:1px solid #121104"></div><div class="a" style="left:48px;top:925px;width:3px;height:1px;background:#504b0e"></div><div class="a" style="left:58px;top:925px;width:3px;height:1px;background:#504b0e"></div><div class="a" style="left:68px;top:925px;width:3px;height:1px;background:#504b0e"></div><div class="a" style="left:82px;top:925px;width:3px;height:1px;background:#504b0e"></div><div class="a" style="left:92px;top:925px;width:3px;height:1px;background:#504b0e"></div><div class="a" style="left:106px;top:925px;width:3px;height:1px;background:#504b0e"></div><div class="a" style="left:120px;top:925px;width:3px;height:1px;background:#504b0e"></div><div class="a" style="left:130px;top:925px;width:3px;height:1px;background:#504b0e"></div><div class="a" style="left:140px;top:925px;width:3px;height:1px;background:#504b0e"></div><div class="a" style="left:154px;top:925px;width:3px;height:1px;background:#504b0e"></div><div class="a" style="left:164px;top:925px;width:3px;height:1px;background:#504b0e"></div><div class="a" style="left:174px;top:925px;width:3px;height:1px;background:#504b0e"></div><div class="a" style="left:188px;top:925px;width:3px;height:1px;background:#504b0e"></div><div class="a" style="left:198px;top:925px;width:3px;height:1px;background:#504b0e"></div><div class="a" style="left:208px;top:925px;width:3px;height:1px;background:#504b0e"></div><div class="a" style="left:222px;top:925px;width:3px;height:1px;background:#504b0e"></div><div class="a" style="left:232px;top:925px;width:3px;height:1px;background:#504b0e"></div><div class="a" style="left:242px;top:925px;width:3px;height:1px;background:#504b0e"></div><div class="pc" style="left:253px;top:920px;color:#848400">F</div><div class="pc" style="left:261.5px;top:920px;color:#848400">-</div><div class="pc" style="left:273px;top:920px;color:#848400">3</div><div class="pc" style="left:287px;top:920px;color:#468c46">0</div><div class="pc" style="left:297px;top:920px;color:#468c46">0</div><div class="pc" style="left:311px;top:920px;color:#46468c">8</div><div class="pc" style="left:325px;top:920px;color:#8c4646">Q</div><div class="pc" style="left:335px;top:920px;color:#848400">1</div><div class="pc" style="left:345px;top:920px;color:#848400">1</div><div class="a" style="left:363px;top:925px;width:3px;height:1px;background:#504b0e"></div><div class="a" style="left:373px;top:925px;width:3px;height:1px;background:#504b0e"></div><div class="a" style="left:383px;top:925px;width:3px;height:1px;background:#504b0e"></div><div class="a" style="left:397px;top:925px;width:3px;height:1px;background:#504b0e"></div><div class="a" style="left:407px;top:925px;width:3px;height:1px;background:#504b0e"></div><div class="a" style="left:417px;top:925px;width:3px;height:1px;background:#504b0e"></div><div class="a" style="left:431px;top:925px;width:3px;height:1px;background:#504b0e"></div><div class="a" style="left:441px;top:925px;width:3px;height:1px;background:#504b0e"></div><div class="a" style="left:451px;top:925px;width:3px;height:1px;background:#504b0e"></div><div class="pc" style="left:462px;top:920px;color:#848400">B</div><div class="pc" style="left:470.5px;top:920px;color:#848400">-</div><div class="pc" style="left:482px;top:920px;color:#848400">2</div><div class="pc" style="left:496px;top:920px;color:#468c46">0</div><div class="pc" style="left:506px;top:920px;color:#468c46">0</div><div class="a" style="left:524px;top:925px;width:3px;height:1px;background:#504b0e"></div><div class="a" style="left:538px;top:925px;width:3px;height:1px;background:#504b0e"></div><div class="a" style="left:548px;top:925px;width:3px;height:1px;background:#504b0e"></div><div class="a" style="left:558px;top:925px;width:3px;height:1px;background:#504b0e"></div><div class="pc" style="left:569px;top:920px;color:#848400">7</div><div class="pc" style="left:577.5px;top:920px;color:#848400">-</div><div class="pc" style="left:589px;top:920px;color:#848400">#</div><div class="pc" style="left:603px;top:920px;color:#468c46">0</div><div class="pc" style="left:613px;top:920px;color:#468c46">0</div><div class="pc" style="left:627px;top:920px;color:#46468c">A</div><div class="pc" style="left:641px;top:920px;color:#8c4646">A</div><div class="pc" style="left:651px;top:920px;color:#848400">0</div><div class="pc" style="left:661px;top:920px;color:#848400">7</div><div class="pc" style="left:676px;top:920px;color:#848400">C</div><div class="pc" style="left:686px;top:920px;color:#848400">#</div><div class="pc" style="left:696px;top:920px;color:#848400">3</div><div class="pc" style="left:710px;top:920px;color:#468c46">0</div><div class="pc" style="left:720px;top:920px;color:#468c46">1</div><div class="a" style="left:738px;top:925px;width:3px;height:1px;background:#504b0e"></div><div class="pc" style="left:748px;top:920px;color:#8c4646">Z</div><div class="pc" style="left:758px;top:920px;color:#848400">0</div><div class="pc" style="left:768px;top:920px;color:#848400">0</div><div class="rn" style="top:933px;color:#00f000">09</div><div class="a" style="left:48px;top:937px;width:3px;height:1px;background:#004400"></div><div class="a" style="left:58px;top:937px;width:3px;height:1px;background:#004400"></div><div class="a" style="left:68px;top:937px;width:3px;height:1px;background:#004400"></div><div class="a" style="left:82px;top:937px;width:3px;height:1px;background:#004400"></div><div class="a" style="left:92px;top:937px;width:3px;height:1px;background:#004400"></div><div class="a" style="left:106px;top:937px;width:3px;height:1px;background:#004400"></div><div class="a" style="left:120px;top:937px;width:3px;height:1px;background:#004400"></div><div class="a" style="left:130px;top:937px;width:3px;height:1px;background:#004400"></div><div class="a" style="left:140px;top:937px;width:3px;height:1px;background:#004400"></div><div class="a" style="left:154px;top:937px;width:3px;height:1px;background:#004400"></div><div class="a" style="left:164px;top:937px;width:3px;height:1px;background:#004400"></div><div class="a" style="left:174px;top:937px;width:3px;height:1px;background:#004400"></div><div class="a" style="left:188px;top:937px;width:3px;height:1px;background:#004400"></div><div class="a" style="left:198px;top:937px;width:3px;height:1px;background:#004400"></div><div class="a" style="left:208px;top:937px;width:3px;height:1px;background:#004400"></div><div class="a" style="left:222px;top:937px;width:3px;height:1px;background:#004400"></div><div class="a" style="left:232px;top:937px;width:3px;height:1px;background:#004400"></div><div class="a" style="left:242px;top:937px;width:3px;height:1px;background:#004400"></div><div class="a" style="left:257px;top:937px;width:3px;height:1px;background:#004400"></div><div class="a" style="left:267px;top:937px;width:3px;height:1px;background:#004400"></div><div class="a" style="left:277px;top:937px;width:3px;height:1px;background:#004400"></div><div class="a" style="left:291px;top:937px;width:3px;height:1px;background:#004400"></div><div class="a" style="left:301px;top:937px;width:3px;height:1px;background:#004400"></div><div class="a" style="left:315px;top:937px;width:3px;height:1px;background:#004400"></div><div class="pc" style="left:325px;top:932px;color:#8c4646">4</div><div class="pc" style="left:335px;top:932px;color:#008400">6</div><div class="pc" style="left:345px;top:932px;color:#008400">2</div><div class="a" style="left:363px;top:937px;width:3px;height:1px;background:#004400"></div><div class="a" style="left:373px;top:937px;width:3px;height:1px;background:#004400"></div><div class="a" style="left:383px;top:937px;width:3px;height:1px;background:#004400"></div><div class="a" style="left:397px;top:937px;width:3px;height:1px;background:#004400"></div><div class="a" style="left:407px;top:937px;width:3px;height:1px;background:#004400"></div><div class="a" style="left:417px;top:937px;width:3px;height:1px;background:#004400"></div><div class="a" style="left:431px;top:937px;width:3px;height:1px;background:#004400"></div><div class="a" style="left:441px;top:937px;width:3px;height:1px;background:#004400"></div><div class="a" style="left:451px;top:937px;width:3px;height:1px;background:#004400"></div><div class="a" style="left:466px;top:937px;width:3px;height:1px;background:#004400"></div><div class="a" style="left:476px;top:937px;width:3px;height:1px;background:#004400"></div><div class="a" style="left:486px;top:937px;width:3px;height:1px;background:#004400"></div><div class="a" style="left:500px;top:937px;width:3px;height:1px;background:#004400"></div><div class="a" style="left:510px;top:937px;width:3px;height:1px;background:#004400"></div><div class="a" style="left:524px;top:937px;width:3px;height:1px;background:#004400"></div><div class="a" style="left:538px;top:937px;width:3px;height:1px;background:#004400"></div><div class="a" style="left:548px;top:937px;width:3px;height:1px;background:#004400"></div><div class="a" style="left:558px;top:937px;width:3px;height:1px;background:#004400"></div><div class="a" style="left:573px;top:937px;width:3px;height:1px;background:#004400"></div><div class="a" style="left:583px;top:937px;width:3px;height:1px;background:#004400"></div><div class="a" style="left:593px;top:937px;width:3px;height:1px;background:#004400"></div><div class="a" style="left:607px;top:937px;width:3px;height:1px;background:#004400"></div><div class="a" style="left:617px;top:937px;width:3px;height:1px;background:#004400"></div><div class="a" style="left:631px;top:937px;width:3px;height:1px;background:#004400"></div><div class="a" style="left:645px;top:937px;width:3px;height:1px;background:#004400"></div><div class="a" style="left:655px;top:937px;width:3px;height:1px;background:#004400"></div><div class="a" style="left:665px;top:937px;width:3px;height:1px;background:#004400"></div><div class="a" style="left:680px;top:937px;width:3px;height:1px;background:#004400"></div><div class="a" style="left:690px;top:937px;width:3px;height:1px;background:#004400"></div><div class="a" style="left:700px;top:937px;width:3px;height:1px;background:#004400"></div><div class="a" style="left:714px;top:937px;width:3px;height:1px;background:#004400"></div><div class="a" style="left:724px;top:937px;width:3px;height:1px;background:#004400"></div><div class="a" style="left:738px;top:937px;width:3px;height:1px;background:#004400"></div><div class="a" style="left:752px;top:937px;width:3px;height:1px;background:#004400"></div><div class="a" style="left:762px;top:937px;width:3px;height:1px;background:#004400"></div><div class="a" style="left:772px;top:937px;width:3px;height:1px;background:#004400"></div><div class="rn" style="top:945px;color:#00f000">0A</div><div class="a" style="left:48px;top:949px;width:3px;height:1px;background:#004400"></div><div class="a" style="left:58px;top:949px;width:3px;height:1px;background:#004400"></div><div class="a" style="left:68px;top:949px;width:3px;height:1px;background:#004400"></div><div class="a" style="left:82px;top:949px;width:3px;height:1px;background:#004400"></div><div class="a" style="left:92px;top:949px;width:3px;height:1px;background:#004400"></div><div class="a" style="left:106px;top:949px;width:3px;height:1px;background:#004400"></div><div class="a" style="left:120px;top:949px;width:3px;height:1px;background:#004400"></div><div class="a" style="left:130px;top:949px;width:3px;height:1px;background:#004400"></div><div class="a" style="left:140px;top:949px;width:3px;height:1px;background:#004400"></div><div class="a" style="left:154px;top:949px;width:3px;height:1px;background:#004400"></div><div class="a" style="left:164px;top:949px;width:3px;height:1px;background:#004400"></div><div class="a" style="left:174px;top:949px;width:3px;height:1px;background:#004400"></div><div class="a" style="left:188px;top:949px;width:3px;height:1px;background:#004400"></div><div class="a" style="left:198px;top:949px;width:3px;height:1px;background:#004400"></div><div class="a" style="left:208px;top:949px;width:3px;height:1px;background:#004400"></div><div class="a" style="left:222px;top:949px;width:3px;height:1px;background:#004400"></div><div class="a" style="left:232px;top:949px;width:3px;height:1px;background:#004400"></div><div class="a" style="left:242px;top:949px;width:3px;height:1px;background:#004400"></div><div class="a" style="left:257px;top:949px;width:3px;height:1px;background:#004400"></div><div class="a" style="left:267px;top:949px;width:3px;height:1px;background:#004400"></div><div class="a" style="left:277px;top:949px;width:3px;height:1px;background:#004400"></div><div class="a" style="left:291px;top:949px;width:3px;height:1px;background:#004400"></div><div class="a" style="left:301px;top:949px;width:3px;height:1px;background:#004400"></div><div class="a" style="left:315px;top:949px;width:3px;height:1px;background:#004400"></div><div class="a" style="left:329px;top:949px;width:3px;height:1px;background:#004400"></div><div class="a" style="left:339px;top:949px;width:3px;height:1px;background:#004400"></div><div class="a" style="left:349px;top:949px;width:3px;height:1px;background:#004400"></div><div class="a" style="left:363px;top:949px;width:3px;height:1px;background:#004400"></div><div class="a" style="left:373px;top:949px;width:3px;height:1px;background:#004400"></div><div class="a" style="left:383px;top:949px;width:3px;height:1px;background:#004400"></div><div class="a" style="left:397px;top:949px;width:3px;height:1px;background:#004400"></div><div class="a" style="left:407px;top:949px;width:3px;height:1px;background:#004400"></div><div class="a" style="left:417px;top:949px;width:3px;height:1px;background:#004400"></div><div class="a" style="left:431px;top:949px;width:3px;height:1px;background:#004400"></div><div class="a" style="left:441px;top:949px;width:3px;height:1px;background:#004400"></div><div class="a" style="left:451px;top:949px;width:3px;height:1px;background:#004400"></div><div class="a" style="left:466px;top:949px;width:3px;height:1px;background:#004400"></div><div class="a" style="left:476px;top:949px;width:3px;height:1px;background:#004400"></div><div class="a" style="left:486px;top:949px;width:3px;height:1px;background:#004400"></div><div class="a" style="left:500px;top:949px;width:3px;height:1px;background:#004400"></div><div class="a" style="left:510px;top:949px;width:3px;height:1px;background:#004400"></div><div class="a" style="left:524px;top:949px;width:3px;height:1px;background:#004400"></div><div class="a" style="left:538px;top:949px;width:3px;height:1px;background:#004400"></div><div class="a" style="left:548px;top:949px;width:3px;height:1px;background:#004400"></div><div class="a" style="left:558px;top:949px;width:3px;height:1px;background:#004400"></div><div class="a" style="left:573px;top:949px;width:3px;height:1px;background:#004400"></div><div class="a" style="left:583px;top:949px;width:3px;height:1px;background:#004400"></div><div class="a" style="left:593px;top:949px;width:3px;height:1px;background:#004400"></div><div class="a" style="left:607px;top:949px;width:3px;height:1px;background:#004400"></div><div class="a" style="left:617px;top:949px;width:3px;height:1px;background:#004400"></div><div class="a" style="left:631px;top:949px;width:3px;height:1px;background:#004400"></div><div class="a" style="left:645px;top:949px;width:3px;height:1px;background:#004400"></div><div class="a" style="left:655px;top:949px;width:3px;height:1px;background:#004400"></div><div class="a" style="left:665px;top:949px;width:3px;height:1px;background:#004400"></div><div class="a" style="left:680px;top:949px;width:3px;height:1px;background:#004400"></div><div class="a" style="left:690px;top:949px;width:3px;height:1px;background:#004400"></div><div class="a" style="left:700px;top:949px;width:3px;height:1px;background:#004400"></div><div class="a" style="left:714px;top:949px;width:3px;height:1px;background:#004400"></div><div class="a" style="left:724px;top:949px;width:3px;height:1px;background:#004400"></div><div class="a" style="left:738px;top:949px;width:3px;height:1px;background:#004400"></div><div class="a" style="left:752px;top:949px;width:3px;height:1px;background:#004400"></div><div class="a" style="left:762px;top:949px;width:3px;height:1px;background:#004400"></div><div class="a" style="left:772px;top:949px;width:3px;height:1px;background:#004400"></div><div class="rn" style="top:957px;color:#00f000">0B</div><div class="a" style="left:48px;top:961px;width:3px;height:1px;background:#004400"></div><div class="a" style="left:58px;top:961px;width:3px;height:1px;background:#004400"></div><div class="a" style="left:68px;top:961px;width:3px;height:1px;background:#004400"></div><div class="a" style="left:82px;top:961px;width:3px;height:1px;background:#004400"></div><div class="a" style="left:92px;top:961px;width:3px;height:1px;background:#004400"></div><div class="a" style="left:106px;top:961px;width:3px;height:1px;background:#004400"></div><div class="a" style="left:120px;top:961px;width:3px;height:1px;background:#004400"></div><div class="a" style="left:130px;top:961px;width:3px;height:1px;background:#004400"></div><div class="a" style="left:140px;top:961px;width:3px;height:1px;background:#004400"></div><div class="a" style="left:154px;top:961px;width:3px;height:1px;background:#004400"></div><div class="a" style="left:164px;top:961px;width:3px;height:1px;background:#004400"></div><div class="a" style="left:174px;top:961px;width:3px;height:1px;background:#004400"></div><div class="a" style="left:188px;top:961px;width:3px;height:1px;background:#004400"></div><div class="a" style="left:198px;top:961px;width:3px;height:1px;background:#004400"></div><div class="a" style="left:208px;top:961px;width:3px;height:1px;background:#004400"></div><div class="a" style="left:222px;top:961px;width:3px;height:1px;background:#004400"></div><div class="a" style="left:232px;top:961px;width:3px;height:1px;background:#004400"></div><div class="a" style="left:242px;top:961px;width:3px;height:1px;background:#004400"></div><div class="a" style="left:257px;top:961px;width:3px;height:1px;background:#004400"></div><div class="a" style="left:267px;top:961px;width:3px;height:1px;background:#004400"></div><div class="a" style="left:277px;top:961px;width:3px;height:1px;background:#004400"></div><div class="a" style="left:291px;top:961px;width:3px;height:1px;background:#004400"></div><div class="a" style="left:301px;top:961px;width:3px;height:1px;background:#004400"></div><div class="a" style="left:315px;top:961px;width:3px;height:1px;background:#004400"></div><div class="a" style="left:329px;top:961px;width:3px;height:1px;background:#004400"></div><div class="a" style="left:339px;top:961px;width:3px;height:1px;background:#004400"></div><div class="a" style="left:349px;top:961px;width:3px;height:1px;background:#004400"></div><div class="a" style="left:363px;top:961px;width:3px;height:1px;background:#004400"></div><div class="a" style="left:373px;top:961px;width:3px;height:1px;background:#004400"></div><div class="a" style="left:383px;top:961px;width:3px;height:1px;background:#004400"></div><div class="a" style="left:397px;top:961px;width:3px;height:1px;background:#004400"></div><div class="a" style="left:407px;top:961px;width:3px;height:1px;background:#004400"></div><div class="a" style="left:417px;top:961px;width:3px;height:1px;background:#004400"></div><div class="a" style="left:431px;top:961px;width:3px;height:1px;background:#004400"></div><div class="a" style="left:441px;top:961px;width:3px;height:1px;background:#004400"></div><div class="a" style="left:451px;top:961px;width:3px;height:1px;background:#004400"></div><div class="a" style="left:468px;top:960px;width:18px;height:3px;background:#008400"></div><div class="a" style="left:500px;top:961px;width:3px;height:1px;background:#004400"></div><div class="a" style="left:510px;top:961px;width:3px;height:1px;background:#004400"></div><div class="a" style="left:524px;top:961px;width:3px;height:1px;background:#004400"></div><div class="pc" style="left:534px;top:956px;color:#8c4646">G</div><div class="pc" style="left:544px;top:956px;color:#008400">0</div><div class="pc" style="left:554px;top:956px;color:#008400">2</div><div class="a" style="left:573px;top:961px;width:3px;height:1px;background:#004400"></div><div class="a" style="left:583px;top:961px;width:3px;height:1px;background:#004400"></div><div class="a" style="left:593px;top:961px;width:3px;height:1px;background:#004400"></div><div class="a" style="left:607px;top:961px;width:3px;height:1px;background:#004400"></div><div class="a" style="left:617px;top:961px;width:3px;height:1px;background:#004400"></div><div class="a" style="left:631px;top:961px;width:3px;height:1px;background:#004400"></div><div class="a" style="left:645px;top:961px;width:3px;height:1px;background:#004400"></div><div class="a" style="left:655px;top:961px;width:3px;height:1px;background:#004400"></div><div class="a" style="left:665px;top:961px;width:3px;height:1px;background:#004400"></div><div class="a" style="left:680px;top:961px;width:3px;height:1px;background:#004400"></div><div class="a" style="left:690px;top:961px;width:3px;height:1px;background:#004400"></div><div class="a" style="left:700px;top:961px;width:3px;height:1px;background:#004400"></div><div class="a" style="left:714px;top:961px;width:3px;height:1px;background:#004400"></div><div class="a" style="left:724px;top:961px;width:3px;height:1px;background:#004400"></div><div class="a" style="left:738px;top:961px;width:3px;height:1px;background:#004400"></div><div class="a" style="left:752px;top:961px;width:3px;height:1px;background:#004400"></div><div class="a" style="left:762px;top:961px;width:3px;height:1px;background:#004400"></div><div class="a" style="left:772px;top:961px;width:3px;height:1px;background:#004400"></div><div class="rn" style="top:969px;color:#f0f000">0C</div><div class="a" style="left:42px;top:968px;width:738px;height:12px;background:#0a0a00;border-top:1px solid #121104"></div><div class="pc" style="left:44px;top:968px;color:#848400">E</div><div class="pc" style="left:52.5px;top:968px;color:#848400">-</div><div class="pc" style="left:64px;top:968px;color:#848400">5</div><div class="pc" style="left:78px;top:968px;color:#468c46">0</div><div class="pc" style="left:88px;top:968px;color:#468c46">3</div><div class="pc" style="left:102px;top:968px;color:#46468c">B</div><div class="a" style="left:120px;top:973px;width:3px;height:1px;background:#504b0e"></div><div class="a" style="left:130px;top:973px;width:3px;height:1px;background:#504b0e"></div><div class="a" style="left:140px;top:973px;width:3px;height:1px;background:#504b0e"></div><div class="pc" style="left:150px;top:968px;color:#8c4646">A</div><div class="pc" style="left:160px;top:968px;color:#848400">0</div><div class="pc" style="left:170px;top:968px;color:#848400">0</div><div class="a" style="left:188px;top:973px;width:3px;height:1px;background:#504b0e"></div><div class="a" style="left:198px;top:973px;width:3px;height:1px;background:#504b0e"></div><div class="a" style="left:208px;top:973px;width:3px;height:1px;background:#504b0e"></div><div class="pc" style="left:218px;top:968px;color:#8c4646">P</div><div class="pc" style="left:228px;top:968px;color:#848400">8</div><div class="pc" style="left:238px;top:968px;color:#848400">0</div><div class="pc" style="left:253px;top:968px;color:#848400">B</div><div class="pc" style="left:261.5px;top:968px;color:#848400">-</div><div class="pc" style="left:273px;top:968px;color:#848400">2</div><div class="pc" style="left:287px;top:968px;color:#468c46">0</div><div class="pc" style="left:297px;top:968px;color:#468c46">0</div><div class="pc" style="left:311px;top:968px;color:#46468c">8</div><div class="pc" style="left:325px;top:968px;color:#8c4646">4</div><div class="pc" style="left:335px;top:968px;color:#848400">0</div><div class="pc" style="left:345px;top:968px;color:#848400">0</div><div class="a" style="left:363px;top:973px;width:3px;height:1px;background:#504b0e"></div><div class="a" style="left:373px;top:973px;width:3px;height:1px;background:#504b0e"></div><div class="a" style="left:383px;top:973px;width:3px;height:1px;background:#504b0e"></div><div class="a" style="left:397px;top:973px;width:3px;height:1px;background:#504b0e"></div><div class="a" style="left:407px;top:973px;width:3px;height:1px;background:#504b0e"></div><div class="a" style="left:417px;top:973px;width:3px;height:1px;background:#504b0e"></div><div class="a" style="left:431px;top:973px;width:3px;height:1px;background:#504b0e"></div><div class="a" style="left:441px;top:973px;width:3px;height:1px;background:#504b0e"></div><div class="a" style="left:451px;top:973px;width:3px;height:1px;background:#504b0e"></div><div class="pc" style="left:462px;top:968px;color:#848400">B</div><div class="pc" style="left:470.5px;top:968px;color:#848400">-</div><div class="pc" style="left:482px;top:968px;color:#848400">2</div><div class="pc" style="left:496px;top:968px;color:#468c46">0</div><div class="pc" style="left:506px;top:968px;color:#468c46">1</div><div class="a" style="left:524px;top:973px;width:3px;height:1px;background:#504b0e"></div><div class="a" style="left:538px;top:973px;width:3px;height:1px;background:#504b0e"></div><div class="a" style="left:548px;top:973px;width:3px;height:1px;background:#504b0e"></div><div class="a" style="left:558px;top:973px;width:3px;height:1px;background:#504b0e"></div><div class="pc" style="left:569px;top:968px;color:#848400">D</div><div class="pc" style="left:577.5px;top:968px;color:#848400">-</div><div class="pc" style="left:589px;top:968px;color:#848400">#</div><div class="pc" style="left:603px;top:968px;color:#468c46">0</div><div class="pc" style="left:613px;top:968px;color:#468c46">0</div><div class="pc" style="left:627px;top:968px;color:#46468c">8</div><div class="pc" style="left:641px;top:968px;color:#8c4646">A</div><div class="pc" style="left:651px;top:968px;color:#848400">0</div><div class="pc" style="left:661px;top:968px;color:#848400">A</div><div class="pc" style="left:676px;top:968px;color:#848400">C</div><div class="pc" style="left:684.5px;top:968px;color:#848400">-</div><div class="pc" style="left:696px;top:968px;color:#848400">3</div><div class="pc" style="left:710px;top:968px;color:#468c46">0</div><div class="pc" style="left:720px;top:968px;color:#468c46">1</div><div class="a" style="left:738px;top:973px;width:3px;height:1px;background:#504b0e"></div><div class="pc" style="left:748px;top:968px;color:#8c4646">Z</div><div class="pc" style="left:758px;top:968px;color:#848400">0</div><div class="pc" style="left:768px;top:968px;color:#848400">0</div><div class="a" style="left:41px;top:320px;width:1px;height:666px;background:#5e5e5e"></div><div class="a" style="left:250px;top:320px;width:1px;height:666px;background:#5e5e5e"></div><div class="a" style="left:459px;top:320px;width:1px;height:666px;background:#5e5e5e"></div><div class="a" style="left:566px;top:320px;width:1px;height:666px;background:#5e5e5e"></div><div class="a" style="left:673px;top:320px;width:1px;height:666px;background:#5e5e5e"></div><div class="a" style="left:780px;top:320px;width:1px;height:666px;background:#5e5e5e"></div><div class="a" style="left:1047px;top:284px;width:18px;height:702px;background:linear-gradient(to right,#e8e8e8,#f2f2f2 40%,#f0f0f0)"></div><div class="a" style="left:1052px;top:292px;border-left:4px solid transparent;border-right:4px solid transparent;border-bottom:4px solid #404040;width:0;height:0"></div><div class="a" style="left:1052px;top:976px;border-left:4px solid transparent;border-right:4px solid transparent;border-top:4px solid #404040;width:0;height:0"></div><div class="a" style="left:1048px;top:791px;width:15px;height:37px;border:1px solid #9a9a9a;border-radius:2px;background:linear-gradient(to right,#f6f6f6,#e4e4e4 50%,#d0d0d0)"></div><div class="a" style="left:1051px;top:805px;width:9px;height:7px;border-top:1px solid #888;border-bottom:1px solid #888;"></div><div class="a" style="left:1051px;top:808px;width:9px;height:1px;background:#888"></div><div class="a" style="left:10px;top:986px;width:1037px;height:18px;background:linear-gradient(#e8e8e8,#f2f2f2 40%,#f0f0f0)"></div><div class="a" style="left:16px;top:991px;border-top:4px solid transparent;border-bottom:4px solid transparent;border-right:4px solid #404040;width:0;height:0"></div><div class="a" style="left:1036px;top:991px;border-top:4px solid transparent;border-bottom:4px solid transparent;border-left:4px solid #404040;width:0;height:0"></div><div class="a" style="left:28px;top:988px;width:86px;height:15px;border:1px solid #9a9a9a;border-radius:2px;background:linear-gradient(#f6f6f6,#e4e4e4 50%,#d0d0d0)"></div><div class="a" style="left:67px;top:992px;width:7px;height:7px;border-left:1px solid #777;border-right:1px solid #777"></div><div class="a" style="left:70px;top:992px;width:1px;height:7px;background:#777"></div><div class="a" style="left:1047px;top:986px;width:18px;height:18px;background:#f0f0f0"></div><div class="a" style="left:8px;top:1004px;width:1058px;height:1px;background:#a0a0a0"></div><div class="a" style="left:8px;top:1005px;width:1058px;height:19px;background:#f0eeec;border-top:1px solid #fff"></div><div class="t" style="left:10.90px;top:1008.58px;font-size:11.3px;line-height:15px;letter-spacing:-0.163px">For Help, press F1</div><div class="a" style="left:653px;top:1007px;width:1px;height:16px;background:#d4d0cc"></div><div class="a" style="left:737px;top:1007px;width:1px;height:16px;background:#d4d0cc"></div><div class="a" style="left:794px;top:1007px;width:1px;height:16px;background:#d4d0cc"></div><div class="a" style="left:838px;top:1007px;width:1px;height:16px;background:#d4d0cc"></div><div class="a" style="left:891px;top:1007px;width:1px;height:16px;background:#d4d0cc"></div><div class="a" style="left:944px;top:1007px;width:1px;height:16px;background:#d4d0cc"></div><div class="a" style="left:975px;top:1007px;width:1px;height:16px;background:#d4d0cc"></div><div class="a" style="left:1011px;top:1007px;width:1px;height:16px;background:#d4d0cc"></div><div class="a" style="left:1046px;top:1007px;width:1px;height:16px;background:#d4d0cc"></div><div class="t" style="left:552.50px;top:1008.58px;font-size:11.3px;line-height:15px;letter-spacing:0.238px">No expansion chip</div><div class="t" style="left:658.00px;top:1008.58px;font-size:11.3px;line-height:15px;letter-spacing:0.215px">Instrument: 00</div><div class="t" style="left:742.30px;top:1008.58px;font-size:11.3px;line-height:15px;letter-spacing:-0.083px">Octave: 3</div><div class="t" style="left:797.00px;top:1008.58px;font-size:11.3px;line-height:15px;letter-spacing:0.277px">60 Hz</div><div class="t" style="left:841.50px;top:1008.58px;font-size:11.3px;line-height:15px;letter-spacing:-0.100px">300 BPM</div><div class="t" style="left:895.50px;top:1008.58px;font-size:11.3px;line-height:15px;letter-spacing:-0.259px">01:22:40</div><div class="t" style="left:980.00px;top:1008.58px;font-size:11.3px;line-height:15px;letter-spacing:0.796px">NUM</div><div class="a" style="left:1061px;top:1014px;width:2px;height:2px;background:#b8b4b0"></div><div class="a" style="left:1061px;top:1018px;width:2px;height:2px;background:#b8b4b0"></div><div class="a" style="left:1057px;top:1018px;width:2px;height:2px;background:#b8b4b0"></div><div class="a" style="left:1061px;top:1022px;width:2px;height:2px;background:#b8b4b0"></div><div class="a" style="left:1057px;top:1022px;width:2px;height:2px;background:#b8b4b0"></div><div class="a" style="left:1053px;top:1022px;width:2px;height:2px;background:#b8b4b0"></div></body></html>
